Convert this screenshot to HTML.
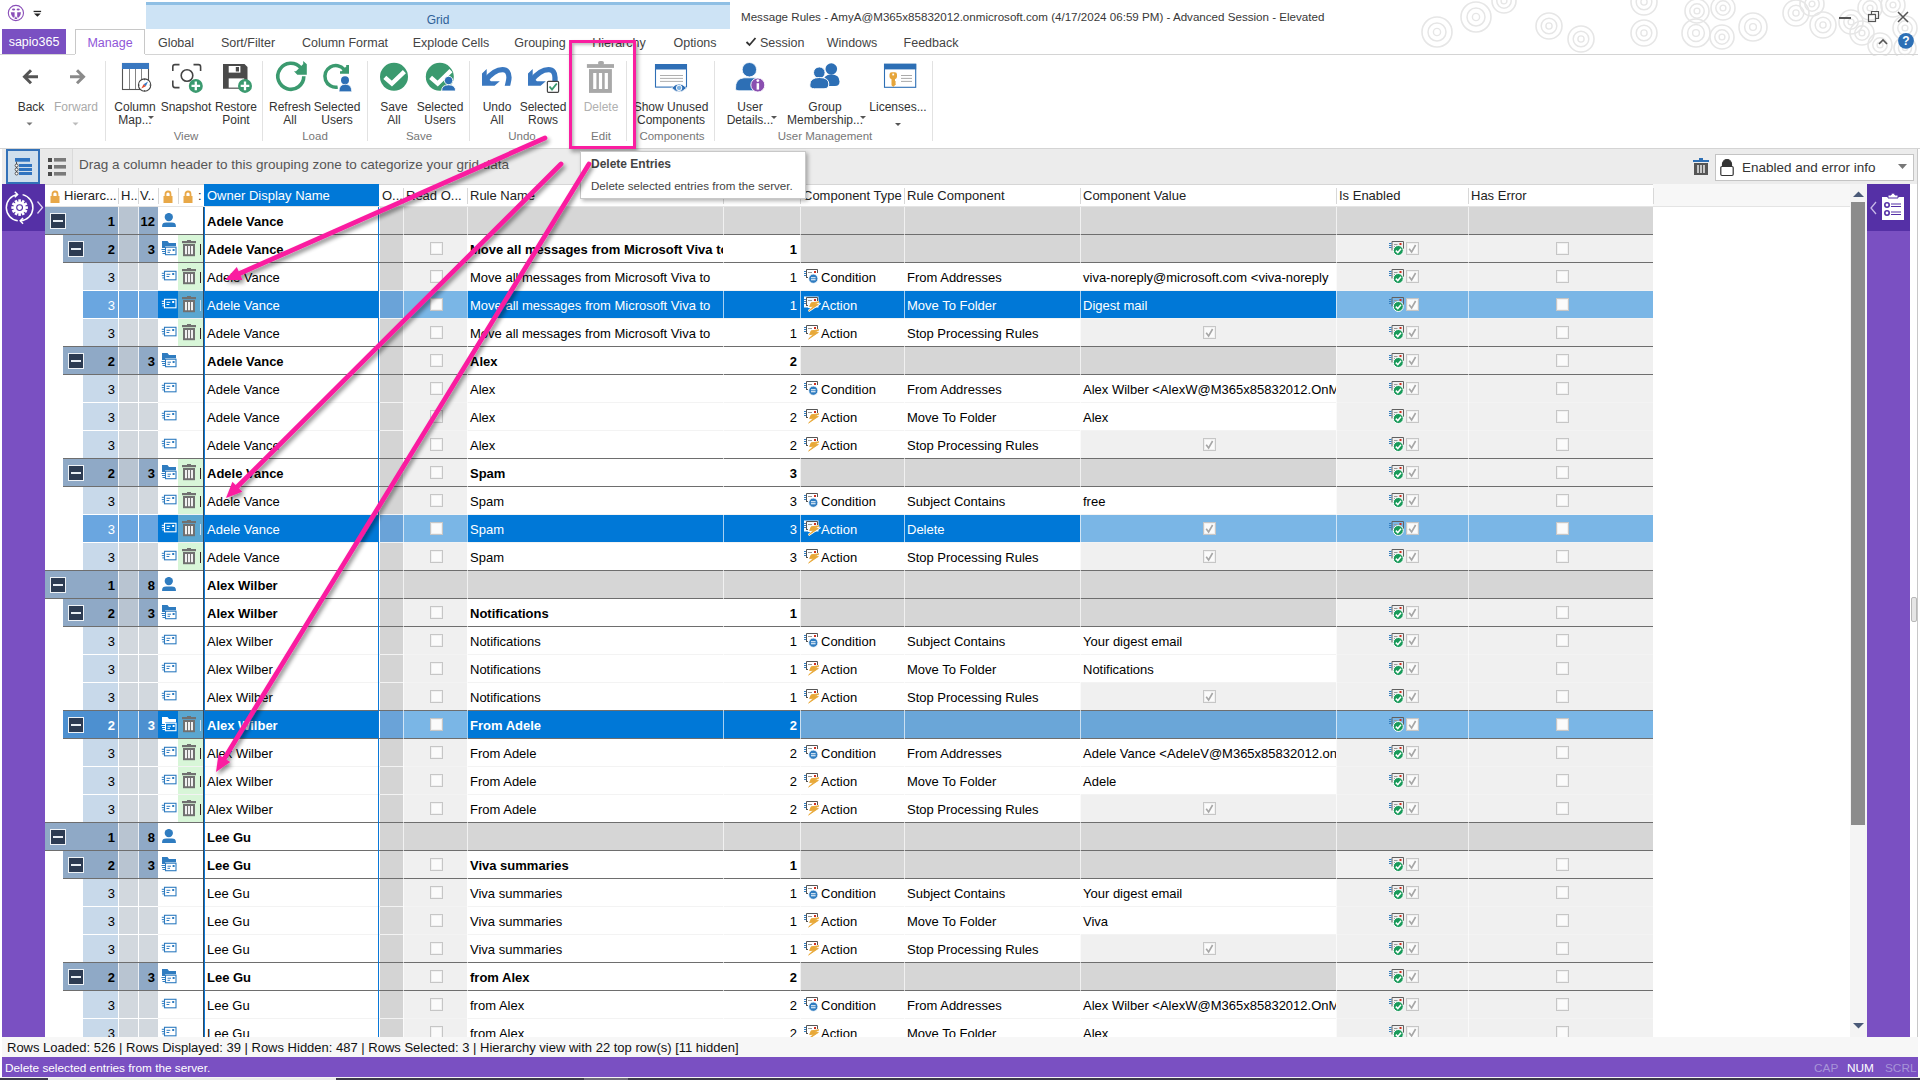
<!DOCTYPE html>
<html><head><meta charset="utf-8"><title>Message Rules</title>
<style>
html,body{margin:0;padding:0;width:1920px;height:1080px;overflow:hidden;background:#fff;font-family:"Liberation Sans",sans-serif;}
.a{position:absolute;}
.t{position:absolute;white-space:nowrap;}
</style></head><body>
<svg class="a" style="left:1400px;top:0px;" width="520" height="56" viewBox="0 0 520 56"><circle cx="37" cy="32" r="15" fill="none" stroke="#e6e6e6" stroke-width="1.6"/><circle cx="37" cy="32" r="9.0" fill="none" stroke="#e6e6e6" stroke-width="1.5"/><circle cx="37" cy="32" r="3.6" fill="none" stroke="#e6e6e6" stroke-width="1.4"/><circle cx="76" cy="17" r="15" fill="none" stroke="#e6e6e6" stroke-width="1.6"/><circle cx="76" cy="17" r="9.0" fill="none" stroke="#e6e6e6" stroke-width="1.5"/><circle cx="76" cy="17" r="3.6" fill="none" stroke="#e6e6e6" stroke-width="1.4"/><circle cx="104" cy="1" r="12" fill="none" stroke="#e6e6e6" stroke-width="1.6"/><circle cx="104" cy="1" r="7.2" fill="none" stroke="#e6e6e6" stroke-width="1.5"/><circle cx="104" cy="1" r="2.9" fill="none" stroke="#e6e6e6" stroke-width="1.4"/><circle cx="149" cy="26" r="13" fill="none" stroke="#e6e6e6" stroke-width="1.6"/><circle cx="149" cy="26" r="7.8" fill="none" stroke="#e6e6e6" stroke-width="1.5"/><circle cx="149" cy="26" r="3.1" fill="none" stroke="#e6e6e6" stroke-width="1.4"/><circle cx="181" cy="39" r="13" fill="none" stroke="#e6e6e6" stroke-width="1.6"/><circle cx="181" cy="39" r="7.8" fill="none" stroke="#e6e6e6" stroke-width="1.5"/><circle cx="181" cy="39" r="3.1" fill="none" stroke="#e6e6e6" stroke-width="1.4"/><circle cx="244" cy="2" r="13" fill="none" stroke="#e6e6e6" stroke-width="1.6"/><circle cx="244" cy="2" r="7.8" fill="none" stroke="#e6e6e6" stroke-width="1.5"/><circle cx="244" cy="2" r="3.1" fill="none" stroke="#e6e6e6" stroke-width="1.4"/><circle cx="244" cy="33" r="13" fill="none" stroke="#e6e6e6" stroke-width="1.6"/><circle cx="244" cy="33" r="7.8" fill="none" stroke="#e6e6e6" stroke-width="1.5"/><circle cx="244" cy="33" r="3.1" fill="none" stroke="#e6e6e6" stroke-width="1.4"/><circle cx="297" cy="11" r="12" fill="none" stroke="#e6e6e6" stroke-width="1.6"/><circle cx="297" cy="11" r="7.2" fill="none" stroke="#e6e6e6" stroke-width="1.5"/><circle cx="297" cy="11" r="2.9" fill="none" stroke="#e6e6e6" stroke-width="1.4"/><circle cx="296" cy="33" r="14" fill="none" stroke="#e6e6e6" stroke-width="1.6"/><circle cx="296" cy="33" r="8.4" fill="none" stroke="#e6e6e6" stroke-width="1.5"/><circle cx="296" cy="33" r="3.4" fill="none" stroke="#e6e6e6" stroke-width="1.4"/><circle cx="322" cy="37" r="12" fill="none" stroke="#e6e6e6" stroke-width="1.6"/><circle cx="322" cy="37" r="7.2" fill="none" stroke="#e6e6e6" stroke-width="1.5"/><circle cx="322" cy="37" r="2.9" fill="none" stroke="#e6e6e6" stroke-width="1.4"/><circle cx="323" cy="8" r="12" fill="none" stroke="#e6e6e6" stroke-width="1.6"/><circle cx="323" cy="8" r="7.2" fill="none" stroke="#e6e6e6" stroke-width="1.5"/><circle cx="323" cy="8" r="2.9" fill="none" stroke="#e6e6e6" stroke-width="1.4"/><circle cx="353" cy="27" r="14" fill="none" stroke="#e6e6e6" stroke-width="1.6"/><circle cx="353" cy="27" r="8.4" fill="none" stroke="#e6e6e6" stroke-width="1.5"/><circle cx="353" cy="27" r="3.4" fill="none" stroke="#e6e6e6" stroke-width="1.4"/><circle cx="396" cy="13" r="13" fill="none" stroke="#e6e6e6" stroke-width="1.6"/><circle cx="396" cy="13" r="7.8" fill="none" stroke="#e6e6e6" stroke-width="1.5"/><circle cx="396" cy="13" r="3.1" fill="none" stroke="#e6e6e6" stroke-width="1.4"/><circle cx="412" cy="4" r="12" fill="none" stroke="#e6e6e6" stroke-width="1.6"/><circle cx="412" cy="4" r="7.2" fill="none" stroke="#e6e6e6" stroke-width="1.5"/><circle cx="412" cy="4" r="2.9" fill="none" stroke="#e6e6e6" stroke-width="1.4"/><circle cx="423" cy="25" r="13" fill="none" stroke="#e6e6e6" stroke-width="1.6"/><circle cx="423" cy="25" r="7.8" fill="none" stroke="#e6e6e6" stroke-width="1.5"/><circle cx="423" cy="25" r="3.1" fill="none" stroke="#e6e6e6" stroke-width="1.4"/><circle cx="451" cy="22" r="12" fill="none" stroke="#e6e6e6" stroke-width="1.6"/><circle cx="451" cy="22" r="7.2" fill="none" stroke="#e6e6e6" stroke-width="1.5"/><circle cx="451" cy="22" r="2.9" fill="none" stroke="#e6e6e6" stroke-width="1.4"/><circle cx="470" cy="8" r="12" fill="none" stroke="#e6e6e6" stroke-width="1.6"/><circle cx="470" cy="8" r="7.2" fill="none" stroke="#e6e6e6" stroke-width="1.5"/><circle cx="470" cy="8" r="2.9" fill="none" stroke="#e6e6e6" stroke-width="1.4"/><circle cx="462" cy="33" r="12" fill="none" stroke="#e6e6e6" stroke-width="1.6"/><circle cx="462" cy="33" r="7.2" fill="none" stroke="#e6e6e6" stroke-width="1.5"/><circle cx="462" cy="33" r="2.9" fill="none" stroke="#e6e6e6" stroke-width="1.4"/><circle cx="493" cy="5" r="12" fill="none" stroke="#e6e6e6" stroke-width="1.6"/><circle cx="493" cy="5" r="7.2" fill="none" stroke="#e6e6e6" stroke-width="1.5"/><circle cx="493" cy="5" r="2.9" fill="none" stroke="#e6e6e6" stroke-width="1.4"/><circle cx="505" cy="28" r="12" fill="none" stroke="#e6e6e6" stroke-width="1.6"/><circle cx="505" cy="28" r="7.2" fill="none" stroke="#e6e6e6" stroke-width="1.5"/><circle cx="505" cy="28" r="2.9" fill="none" stroke="#e6e6e6" stroke-width="1.4"/><circle cx="480" cy="45" r="12" fill="none" stroke="#e6e6e6" stroke-width="1.6"/><circle cx="480" cy="45" r="7.2" fill="none" stroke="#e6e6e6" stroke-width="1.5"/><circle cx="480" cy="45" r="2.9" fill="none" stroke="#e6e6e6" stroke-width="1.4"/><circle cx="505" cy="48" r="11" fill="none" stroke="#e6e6e6" stroke-width="1.6"/><circle cx="505" cy="48" r="6.6" fill="none" stroke="#e6e6e6" stroke-width="1.5"/><circle cx="505" cy="48" r="2.6" fill="none" stroke="#e6e6e6" stroke-width="1.4"/></svg>
<svg class="a" style="left:0px;top:0px;" width="32" height="28" viewBox="0 0 32 28"><circle cx="15.9" cy="13" r="7.6" fill="none" stroke="#8a4fb8" stroke-width="1.1"/><path d="M10.8 12.2 H14.6 V17.5 H13 Q10.8 15 10.8 12.2Z M21 12.2 H17.2 V17.5 H18.8 Q21 15 21 12.2Z M14.4 19 L15.9 16.2 L17.4 19Z" fill="#8a4fb8"/><ellipse cx="13.6" cy="9.6" rx="1.6" ry="1" fill="#8a4fb8"/><ellipse cx="18.2" cy="9.6" rx="1.6" ry="1" fill="#8a4fb8"/></svg>
<svg class="a" style="left:32px;top:9px;" width="12" height="10" viewBox="0 0 12 10"><rect x="1.6" y="1.8" width="7.5" height="1.3" fill="#222"/><path d="M2 4.5 H8.8 L5.4 7.8 Z" fill="#222"/></svg>
<div class="a" style="left:146px;top:2px;width:584px;height:27px;background:#cde3f5;border-top:3px solid #8fbfe4;box-sizing:border-box"></div>
<div class="t" style="left:146px;top:12px;width:584px;height:16px;line-height:16px;color:#2f6198;font-size:12px;text-align:center;">Grid</div>
<div class="t" style="left:741px;top:8px;height:17px;line-height:17px;color:#383838;font-size:11.6px;">Message Rules - AmyA@M365x85832012.onmicrosoft.com (4/17/2024 06:59 PM) - Advanced Session - Elevated</div>
<div class="a" style="left:1839px;top:17px;width:12px;height:2px;background:#555"></div>
<svg class="a" style="left:1867px;top:10px;" width="14" height="14" viewBox="0 0 14 14"><rect x="1.5" y="4.5" width="7" height="7" fill="none" stroke="#555" stroke-width="1.2"/><path d="M4.5 4.5 V1.5 H11.5 V8.5 H8.5" fill="none" stroke="#555" stroke-width="1.2"/></svg>
<svg class="a" style="left:1896px;top:10px;" width="14" height="14" viewBox="0 0 14 14"><path d="M2 2 L12 12 M12 2 L2 12" stroke="#555" stroke-width="1.5"/></svg>
<div class="a" style="left:2px;top:29px;width:64px;height:26px;background:#7a50c2"></div>
<div class="t" style="left:2px;top:29px;width:64px;height:26px;line-height:26px;color:#fff;font-size:12.5px;text-align:center;">sapio365</div>
<div class="a" style="left:75px;top:29px;width:70px;height:26px;background:#fff;border:1px solid #c8c8c8;border-bottom:none;box-sizing:border-box"></div>
<div class="a" style="left:0px;top:54px;width:1918px;height:1px;background:#d4d4d4"></div>
<div class="a" style="left:75px;top:54px;width:70px;height:1px;background:#fff"></div>
<div class="t" style="left:75px;top:30px;width:70px;height:26px;line-height:26px;color:#8f55d8;font-size:12.5px;text-align:center;">Manage</div>
<div class="t" style="left:116px;top:30px;width:120px;height:26px;line-height:26px;color:#444;font-size:12.5px;text-align:center;">Global</div>
<div class="t" style="left:188px;top:30px;width:120px;height:26px;line-height:26px;color:#444;font-size:12.5px;text-align:center;">Sort/Filter</div>
<div class="t" style="left:285px;top:30px;width:120px;height:26px;line-height:26px;color:#444;font-size:12.5px;text-align:center;">Column Format</div>
<div class="t" style="left:391px;top:30px;width:120px;height:26px;line-height:26px;color:#444;font-size:12.5px;text-align:center;">Explode Cells</div>
<div class="t" style="left:480px;top:30px;width:120px;height:26px;line-height:26px;color:#444;font-size:12.5px;text-align:center;">Grouping</div>
<div class="t" style="left:559px;top:30px;width:120px;height:26px;line-height:26px;color:#444;font-size:12.5px;text-align:center;">Hierarchy</div>
<div class="t" style="left:635px;top:30px;width:120px;height:26px;line-height:26px;color:#444;font-size:12.5px;text-align:center;">Options</div>
<div class="t" style="left:792px;top:30px;width:120px;height:26px;line-height:26px;color:#444;font-size:12.5px;text-align:center;">Windows</div>
<div class="t" style="left:871px;top:30px;width:120px;height:26px;line-height:26px;color:#444;font-size:12.5px;text-align:center;">Feedback</div>
<svg class="a" style="left:745px;top:36px;" width="12" height="11" viewBox="0 0 12 11"><path d="M1.5 6 L4.5 9 L10.5 2" stroke="#333" stroke-width="1.8" fill="none"/></svg>
<div class="t" style="left:760px;top:30px;height:26px;line-height:26px;color:#444;font-size:12.5px;">Session</div>
<svg class="a" style="left:1877px;top:37px;" width="12" height="9" viewBox="0 0 12 9"><path d="M2 7 L6 3 L10 7" stroke="#555" stroke-width="1.6" fill="none"/></svg>
<svg class="a" style="left:1897px;top:32px;" width="18" height="18" viewBox="0 0 18 18"><circle cx="9" cy="8.8" r="7.9" fill="#2d6fb5"/><text x="9" y="13.3" font-family="Liberation Sans" font-weight="bold" font-size="12" fill="#fff" text-anchor="middle">?</text></svg>
<div class="a" style="left:0px;top:56px;width:1920px;height:92px;background:#fff"></div>
<div class="a" style="left:105px;top:61px;width:1px;height:80px;background:#e2e2e2"></div>
<div class="a" style="left:262px;top:61px;width:1px;height:80px;background:#e2e2e2"></div>
<div class="a" style="left:367px;top:61px;width:1px;height:80px;background:#e2e2e2"></div>
<div class="a" style="left:469px;top:61px;width:1px;height:80px;background:#e2e2e2"></div>
<div class="a" style="left:626px;top:61px;width:1px;height:80px;background:#e2e2e2"></div>
<div class="a" style="left:714px;top:61px;width:1px;height:80px;background:#e2e2e2"></div>
<div class="a" style="left:932px;top:61px;width:1px;height:80px;background:#e2e2e2"></div>
<div class="a" style="left:0px;top:148px;width:1920px;height:1px;background:#d4d4d4"></div>
<div class="t" style="left:-29px;top:100px;width:120px;height:14px;line-height:14px;color:#333;font-size:12px;text-align:center;">Back</div>
<div class="t" style="left:16px;top:100px;width:120px;height:14px;line-height:14px;color:#aaa;font-size:12px;text-align:center;">Forward</div>
<svg class="a" style="left:26px;top:122px;" width="7" height="5" viewBox="0 0 7 5"><path d="M0.5 0.5 H6.5 L3.5 3.5Z" fill="#777"/></svg>
<svg class="a" style="left:72px;top:122px;" width="7" height="5" viewBox="0 0 7 5"><path d="M0.5 0.5 H6.5 L3.5 3.5Z" fill="#bbb"/></svg>
<svg class="a" style="left:21px;top:68px;" width="18" height="18" viewBox="0 0 18 18"><path d="M17 8.7 H4 M10 2.2 L3.5 8.7 L10 15.2" stroke="#555" stroke-width="3" fill="none"/></svg>
<svg class="a" style="left:69px;top:68px;" width="18" height="18" viewBox="0 0 18 18"><path d="M1 8.7 H14 M8 2.2 L14.5 8.7 L8 15.2" stroke="#8a8a8a" stroke-width="3" fill="none"/></svg>
<div class="t" style="left:75px;top:100px;width:120px;height:14px;line-height:14px;color:#333;font-size:12px;text-align:center;">Column</div>
<div class="t" style="left:75px;top:113px;width:120px;height:14px;line-height:14px;color:#333;font-size:12px;text-align:center;">Map...  </div>
<div class="t" style="left:126px;top:100px;width:120px;height:14px;line-height:14px;color:#333;font-size:12px;text-align:center;">Snapshot</div>
<div class="t" style="left:176px;top:100px;width:120px;height:14px;line-height:14px;color:#333;font-size:12px;text-align:center;">Restore</div>
<div class="t" style="left:176px;top:113px;width:120px;height:14px;line-height:14px;color:#333;font-size:12px;text-align:center;">Point</div>
<svg class="a" style="left:148px;top:116px;" width="6" height="4" viewBox="0 0 6 4"><path d="M0 0 H6 L3 3Z" fill="#555"/></svg>
<div class="t" style="left:106px;top:129px;width:160px;height:14px;line-height:14px;color:#777;font-size:11.5px;text-align:center;">View</div>
<svg class="a" style="left:120px;top:61px;" width="32" height="32" viewBox="0 0 32 32"><rect x="2.5" y="2.5" width="26" height="26" fill="#fff" stroke="#555" stroke-width="1.1"/><rect x="2" y="2" width="27" height="6" fill="#3a78c0"/><path d="M9.5 8 V28 M15.5 8 V28 M21.5 8 V22" stroke="#777" stroke-width="0.9"/><circle cx="24.6" cy="24.1" r="6.2" fill="#fff" stroke="#444" stroke-width="1.1"/><path d="M24.6 17.9 V19.2 M24.6 29 V30.3 M18.4 24.1 H19.7 M29.5 24.1 H30.8" stroke="#444" stroke-width="0.9"/><path d="M21.3 27.6 L23.6 23.2 L25.8 25.2Z" fill="#e04a2a"/><path d="M28 20.6 L23.6 23.2 L25.8 25.2Z" fill="#3a78c0"/></svg>
<svg class="a" style="left:170px;top:61px;" width="34" height="34" viewBox="0 0 34 34"><path d="M2.8 10 V5.8 Q2.8 3.6 5 3.6 H9.5 M23.5 3.6 H28.5 Q30.6 3.6 30.6 5.8 V10 M2.8 19.5 V24 Q2.8 26.6 5 26.6 H9.5" stroke="#444" stroke-width="1.6" fill="none"/><circle cx="17" cy="14.5" r="5.8" fill="none" stroke="#444" stroke-width="1.6"/><circle cx="25.8" cy="24.9" r="7" fill="#3b9a6f"/><path d="M25.8 20.6 V29.2 M21.5 24.9 H30.1" stroke="#fff" stroke-width="2.3"/></svg>
<svg class="a" style="left:220px;top:61px;" width="34" height="34" viewBox="0 0 34 34"><path d="M3 3 H24.5 L27.5 6 V27.8 H3Z" fill="#4a4a4a"/><rect x="8.7" y="5" width="11.7" height="6.6" fill="#fff"/><rect x="15.8" y="6" width="3.2" height="4.5" fill="#4a4a4a"/><rect x="8.7" y="17.4" width="15.5" height="9.2" fill="#fff"/><circle cx="25" cy="24.9" r="7" fill="#3b9a6f"/><path d="M25 20.6 V29.2 M20.7 24.9 H29.3" stroke="#fff" stroke-width="2.3"/></svg>
<div class="t" style="left:230px;top:100px;width:120px;height:14px;line-height:14px;color:#333;font-size:12px;text-align:center;">Refresh</div>
<div class="t" style="left:230px;top:113px;width:120px;height:14px;line-height:14px;color:#333;font-size:12px;text-align:center;">All</div>
<div class="t" style="left:277px;top:100px;width:120px;height:14px;line-height:14px;color:#333;font-size:12px;text-align:center;">Selected</div>
<div class="t" style="left:277px;top:113px;width:120px;height:14px;line-height:14px;color:#333;font-size:12px;text-align:center;">Users</div>
<div class="t" style="left:235px;top:129px;width:160px;height:14px;line-height:14px;color:#777;font-size:11.5px;text-align:center;">Load</div>
<svg class="a" style="left:273px;top:59px;" width="36" height="34" viewBox="0 0 36 34"><path d="M30.8 17.3 A13 13 0 1 1 27.76 8.94" stroke="#3b9a6f" stroke-width="3.6" fill="none"/><path d="M21 12.2 L30.2 12.2 L30.2 2 L33.8 5.2 L33.8 15.8 L24.3 15.8 Z M23 12.2 L30.2 5 V12.2Z" fill="#3b9a6f"/></svg>
<svg class="a" style="left:320px;top:59px;" width="36" height="36" viewBox="0 0 36 36"><path d="M17.69 28.13 A10.9 10.9 0 1 1 24.15 10.4" stroke="#3b9a6f" stroke-width="3.5" fill="none"/><path d="M20 12.3 L26.2 12.3 L26.2 6 L29 6 L29 14.8 L20 14.8 Z M21.5 12.3 L26.2 7.5 V12.3Z" fill="#3b9a6f"/><circle cx="25" cy="21.3" r="4" fill="#2d6fb5"/><path d="M19 32.7 Q19 25.3 25.35 25.3 Q31.7 25.3 31.7 32.7 Z" fill="#2d6fb5" stroke="#fff" stroke-width="0.6"/></svg>
<div class="t" style="left:334px;top:100px;width:120px;height:14px;line-height:14px;color:#333;font-size:12px;text-align:center;">Save</div>
<div class="t" style="left:334px;top:113px;width:120px;height:14px;line-height:14px;color:#333;font-size:12px;text-align:center;">All</div>
<div class="t" style="left:380px;top:100px;width:120px;height:14px;line-height:14px;color:#333;font-size:12px;text-align:center;">Selected</div>
<div class="t" style="left:380px;top:113px;width:120px;height:14px;line-height:14px;color:#333;font-size:12px;text-align:center;">Users</div>
<div class="t" style="left:339px;top:129px;width:160px;height:14px;line-height:14px;color:#777;font-size:11.5px;text-align:center;">Save</div>
<svg class="a" style="left:378px;top:61px;" width="32" height="32" viewBox="0 0 32 32"><circle cx="16" cy="15.8" r="14" fill="#3b9a6f"/><path d="M6.8 16.4 L13.9 22.6 L26.4 10.6" stroke="#fff" stroke-width="4.4" fill="none"/></svg>
<svg class="a" style="left:424px;top:61px;" width="34" height="34" viewBox="0 0 34 34"><circle cx="15.8" cy="15.8" r="14" fill="#3b9a6f"/><path d="M6.6 16.4 L13.7 22.6 L27 9.6" stroke="#fff" stroke-width="4.4" fill="none"/><circle cx="24.6" cy="19.5" r="4.2" fill="#2d6fb5" stroke="#fff" stroke-width="0.9"/><path d="M17.6 30 Q17.6 23.8 24.6 23.8 Q31.6 23.8 31.6 30Z" fill="#2d6fb5" stroke="#fff" stroke-width="0.9"/></svg>
<div class="t" style="left:437px;top:100px;width:120px;height:14px;line-height:14px;color:#333;font-size:12px;text-align:center;">Undo</div>
<div class="t" style="left:437px;top:113px;width:120px;height:14px;line-height:14px;color:#333;font-size:12px;text-align:center;">All</div>
<div class="t" style="left:483px;top:100px;width:120px;height:14px;line-height:14px;color:#333;font-size:12px;text-align:center;">Selected</div>
<div class="t" style="left:483px;top:113px;width:120px;height:14px;line-height:14px;color:#333;font-size:12px;text-align:center;">Rows</div>
<div class="t" style="left:442px;top:129px;width:160px;height:14px;line-height:14px;color:#777;font-size:11.5px;text-align:center;">Undo</div>
<svg class="a" style="left:474px;top:56px;" width="44" height="36" viewBox="0 0 44 36"><path d="M8 29.8 L8 17.5 L12.7 13 L12.7 21.5 L17 25.3 L25.8 25.3 L20.6 29.8 Z" fill="#3a78c0"/><path d="M11.5 24.5 C 17 17.5, 23 13.6, 28.5 13.6 C 33 13.6, 35 17, 35 21.5 C 35 24, 34 27, 33.2 31" stroke="#3a78c0" stroke-width="5.3" fill="none"/><rect x="26" y="29.8" width="14" height="6" fill="#fff"/></svg>
<svg class="a" style="left:520px;top:56px;" width="44" height="40" viewBox="0 0 44 40"><path d="M8 29.8 L8 17.5 L12.7 13 L12.7 21.5 L17 25.3 L25.8 25.3 L20.6 29.8 Z" fill="#3a78c0"/><path d="M11.5 24.5 C 17 17.5, 23 13.6, 28.5 13.6 C 33 13.6, 35 17, 35 21.5 L 35 25" stroke="#3a78c0" stroke-width="5.3" fill="none"/><rect x="27.4" y="25.3" width="11.2" height="11" rx="1" fill="#fff" stroke="#444" stroke-width="1.2"/><path d="M29.5 30.5 L32 33.5 L36.8 27.5" stroke="#3b9a6f" stroke-width="1.9" fill="none"/></svg>
<div class="t" style="left:541px;top:100px;width:120px;height:14px;line-height:14px;color:#b0b0b0;font-size:12px;text-align:center;">Delete</div>
<div class="t" style="left:521px;top:129px;width:160px;height:14px;line-height:14px;color:#777;font-size:11.5px;text-align:center;">Edit</div>
<svg class="a" style="left:586px;top:60px;" width="30" height="34" viewBox="0 0 30 34"><rect x="0.9" y="4.1" width="27.1" height="3.8" fill="#a8a8a8"/><rect x="12" y="1" width="6" height="4" rx="2" fill="#a8a8a8"/><path d="M3 9.1 H25.9 V32.9 H3Z" fill="#a8a8a8"/><path d="M8.8 12.9 V29.1 M14.5 12.9 V29.1 M20.3 12.9 V29.1" stroke="#fff" stroke-width="3.2"/></svg>
<div class="t" style="left:611px;top:100px;width:120px;height:14px;line-height:14px;color:#333;font-size:12px;text-align:center;">Show Unused</div>
<div class="t" style="left:611px;top:113px;width:120px;height:14px;line-height:14px;color:#333;font-size:12px;text-align:center;">Components</div>
<div class="t" style="left:592px;top:129px;width:160px;height:14px;line-height:14px;color:#777;font-size:11.5px;text-align:center;">Components</div>
<svg class="a" style="left:654px;top:63px;" width="36" height="32" viewBox="0 0 36 32"><rect x="1.5" y="1.6" width="31" height="22.5" fill="#fff" stroke="#2f6fb6" stroke-width="1.1"/><rect x="1" y="1.1" width="32" height="5.4" fill="#2f6fb6"/><path d="M6 12.5 H29 M6 15.4 H29 M6 18.4 H29" stroke="#9a9a9a" stroke-width="0.8"/><path d="M17.6 24.9 Q25 17 32.6 24.9 Q25 32.8 17.6 24.9Z" fill="#2f6fb6" stroke="#fff" stroke-width="0.8"/><circle cx="25.1" cy="24.9" r="2.7" fill="#7fb2e0" stroke="#fff" stroke-width="1"/></svg>
<div class="t" style="left:690px;top:100px;width:120px;height:14px;line-height:14px;color:#333;font-size:12px;text-align:center;">User</div>
<div class="t" style="left:690px;top:113px;width:120px;height:14px;line-height:14px;color:#333;font-size:12px;text-align:center;">Details...  </div>
<div class="t" style="left:765px;top:100px;width:120px;height:14px;line-height:14px;color:#333;font-size:12px;text-align:center;">Group</div>
<div class="t" style="left:765px;top:113px;width:120px;height:14px;line-height:14px;color:#333;font-size:12px;text-align:center;">Membership...  </div>
<div class="t" style="left:838px;top:100px;width:120px;height:14px;line-height:14px;color:#333;font-size:12px;text-align:center;">Licenses...</div>
<div class="t" style="left:745px;top:129px;width:160px;height:14px;line-height:14px;color:#777;font-size:11.5px;text-align:center;">User Management</div>
<svg class="a" style="left:771px;top:116px;" width="6" height="4" viewBox="0 0 6 4"><path d="M0 0 H6 L3 3Z" fill="#555"/></svg>
<svg class="a" style="left:860px;top:116px;" width="6" height="4" viewBox="0 0 6 4"><path d="M0 0 H6 L3 3Z" fill="#555"/></svg>
<svg class="a" style="left:895px;top:123px;" width="6" height="4" viewBox="0 0 6 4"><path d="M0 0 H6 L3 3Z" fill="#555"/></svg>
<svg class="a" style="left:734px;top:60px;" width="34" height="36" viewBox="0 0 34 36"><circle cx="15.4" cy="9.7" r="7.2" fill="#2d6fb5" stroke="#fff" stroke-width="0.8"/><path d="M1.5 29 Q1 18.5 10 17.8 H21 Q28 18.5 28 26 V30.8 H5 Q1.5 30.8 1.5 29Z" fill="#2d6fb5" stroke="#fff" stroke-width="0.8"/><circle cx="23.8" cy="25" r="7" fill="#8a4fb0" stroke="#fff" stroke-width="0.9"/><rect x="22.6" y="23.2" width="2.5" height="6.4" fill="#fff"/><circle cx="23.85" cy="20.6" r="1.4" fill="#fff"/></svg>
<svg class="a" style="left:808px;top:61px;" width="36" height="30" viewBox="0 0 36 30"><circle cx="23.3" cy="8" r="5.8" fill="#2d6fb5"/><path d="M15 22 Q15 13.5 23.3 13.5 Q31.5 13.5 31.5 20.5 Q31.5 25 27 25 H18Z" fill="#2d6fb5"/><circle cx="11.3" cy="11.7" r="5.8" fill="#2d6fb5" stroke="#fff" stroke-width="1"/><path d="M1.8 24 Q1.8 16.5 11.3 16.5 Q20.8 16.5 20.8 23 Q20.8 27.8 16 27.8 H6.5 Q1.8 27.8 1.8 24Z" fill="#2d6fb5" stroke="#fff" stroke-width="1"/></svg>
<svg class="a" style="left:882px;top:62px;" width="36" height="28" viewBox="0 0 36 28"><rect x="2.5" y="2.3" width="31.2" height="23" fill="#fff" stroke="#2d6fb5" stroke-width="1.1"/><rect x="2" y="1.8" width="32.2" height="5.6" fill="#2d6fb5"/><path d="M7.5 12.5 Q7.5 10.2 9.8 10.2 H12.8 Q15 10.2 15 12.5 V14.8 Q15 16.8 13 17.2 V19 L14.2 20 L13 21 L14.2 22 L11.3 25 L9.5 23.3 V17.2 Q7.5 16.8 7.5 14.8Z" fill="#e6a53a"/><rect x="10.3" y="11.6" width="1.8" height="1.8" fill="#fff"/><path d="M19 13.5 H30 M19 16.4 H30 M19 19.4 H30" stroke="#a0a0a0" stroke-width="0.9"/></svg>
<div class="a" style="left:2px;top:149px;width:1916px;height:35px;background:#ececec"></div>
<div class="a" style="left:6px;top:149px;width:34px;height:35px;background:#cfdfec;border:2px solid #3271b8;box-sizing:border-box"></div>
<svg class="a" style="left:13px;top:156px;" width="20" height="20" viewBox="0 0 20 20"><rect x="2" y="2" width="15" height="3.7" fill="#2f74c0"/><rect x="6" y="8" width="13" height="3" fill="#2f74c0"/><rect x="6" y="12" width="13" height="3" fill="#2f74c0"/><rect x="6" y="16" width="13" height="3" fill="#2f74c0"/><path d="M3.5 5.7 V18" stroke="#444" stroke-width="0.9"/><circle cx="3.6" cy="9.5" r="1.5" fill="#fff" stroke="#444" stroke-width="0.9"/><circle cx="3.6" cy="13.5" r="1.5" fill="#fff" stroke="#444" stroke-width="0.9"/><circle cx="3.6" cy="17.5" r="1.5" fill="#fff" stroke="#444" stroke-width="0.9"/></svg>
<div class="a" style="left:40px;top:149px;width:33px;height:35px;background:#e9e9e9;border-right:1px solid #dadada;box-sizing:border-box"></div>
<svg class="a" style="left:48px;top:157px;" width="20" height="20" viewBox="0 0 20 20"><rect x="0" y="1" width="4" height="4" fill="#4a4a4a"/><rect x="0" y="8" width="4" height="4" fill="#4a4a4a"/><rect x="0" y="15" width="4" height="4" fill="#4a4a4a"/><rect x="6" y="1" width="12" height="3.6" fill="#7a7a7a"/><rect x="6" y="8" width="12" height="3.6" fill="#7a7a7a"/><rect x="6" y="15" width="12" height="3.6" fill="#7a7a7a"/></svg>
<div class="t" style="left:79px;top:156px;height:18px;line-height:18px;color:#555;font-size:13.5px;">Drag a column header to this grouping zone to categorize your grid data</div>
<svg class="a" style="left:1692px;top:158px;" width="18" height="18" viewBox="0 0 18 18"><rect x="1" y="2" width="16" height="2" fill="#2d6fb5"/><rect x="7" y="0" width="4" height="2.5" fill="#2d6fb5"/><path d="M2 5 H16 V17 H2Z" fill="#555"/><path d="M6 7 V15 M9 7 V15 M12 7 V15" stroke="#ececec" stroke-width="1.5"/></svg>
<div class="a" style="left:1715px;top:154px;width:199px;height:27px;background:#fff;border:1px solid #c4c4c4;box-sizing:border-box"></div>
<svg class="a" style="left:1718px;top:158px;" width="18" height="20" viewBox="0 0 18 20"><path d="M4.5 8.5 V6 A4.5 4.5 0 0 1 13.5 6 V8.5Z" fill="#333" stroke="#333" stroke-width="1.2"/><rect x="2.8" y="8.5" width="12.4" height="9" rx="1.2" fill="#fff" stroke="#333" stroke-width="1.2"/></svg>
<div class="t" style="left:1742px;top:158px;height:19px;line-height:19px;color:#333;font-size:13.5px;">Enabled and error info</div>
<svg class="a" style="left:1898px;top:164px;" width="10" height="6" viewBox="0 0 10 6"><path d="M0 0 H9 L4.5 5Z" fill="#777"/></svg>
<div class="a" style="left:2px;top:184px;width:43px;height:853px;background:#7a50c2"></div>
<div class="a" style="left:2px;top:184px;width:43px;height:47px;background:#5530a6"></div>
<svg class="a" style="left:0px;top:184px;" width="48" height="48" viewBox="0 0 48 48"><path d="M22.59 10.64 A13.3 13.3 0 0 1 20.53 36.87" stroke="#fff" stroke-width="1.5" fill="none"/><path d="M17.75 36.77 A13.3 13.3 0 0 1 17.29 10.50" stroke="#fff" stroke-width="1.5" fill="none"/><path d="M23.03 34.07 L20.23 36.87 L23.03 39.67" stroke="#fff" stroke-width="1.5" fill="none"/><path d="M14.79 7.70 L17.59 10.50 L14.79 13.30" stroke="#fff" stroke-width="1.5" fill="none"/><circle cx="19.6" cy="23.6" r="6" fill="#fff"/><rect x="18.30" y="15.30" width="2.6" height="4" fill="#fff" transform="rotate(0 19.6 23.6)"/><rect x="18.30" y="15.30" width="2.6" height="4" fill="#fff" transform="rotate(30 19.6 23.6)"/><rect x="18.30" y="15.30" width="2.6" height="4" fill="#fff" transform="rotate(60 19.6 23.6)"/><rect x="18.30" y="15.30" width="2.6" height="4" fill="#fff" transform="rotate(90 19.6 23.6)"/><rect x="18.30" y="15.30" width="2.6" height="4" fill="#fff" transform="rotate(120 19.6 23.6)"/><rect x="18.30" y="15.30" width="2.6" height="4" fill="#fff" transform="rotate(150 19.6 23.6)"/><rect x="18.30" y="15.30" width="2.6" height="4" fill="#fff" transform="rotate(180 19.6 23.6)"/><rect x="18.30" y="15.30" width="2.6" height="4" fill="#fff" transform="rotate(210 19.6 23.6)"/><rect x="18.30" y="15.30" width="2.6" height="4" fill="#fff" transform="rotate(240 19.6 23.6)"/><rect x="18.30" y="15.30" width="2.6" height="4" fill="#fff" transform="rotate(270 19.6 23.6)"/><rect x="18.30" y="15.30" width="2.6" height="4" fill="#fff" transform="rotate(300 19.6 23.6)"/><rect x="18.30" y="15.30" width="2.6" height="4" fill="#fff" transform="rotate(330 19.6 23.6)"/><circle cx="19.6" cy="23.6" r="2.9" fill="none" stroke="#5530a6" stroke-width="1.1"/><path d="M37.5 17.5 L42.5 23.5 L37.5 29.5" stroke="#e0d4f4" stroke-width="1.3" fill="none"/></svg>
<div class="a" style="left:1850px;top:184px;width:17px;height:853px;background:#f4f4f4"></div>
<svg class="a" style="left:1852px;top:190px;" width="13" height="8" viewBox="0 0 13 8"><path d="M1 7 L6.5 1.5 L12 7Z" fill="#4a5a78"/></svg>
<div class="a" style="left:1851px;top:202px;width:14px;height:623px;background:#8c8c8c"></div>
<svg class="a" style="left:1852px;top:1022px;" width="13" height="8" viewBox="0 0 13 8"><path d="M1 1 L6.5 6.5 L12 1Z" fill="#4a5a78"/></svg>
<div class="a" style="left:1867px;top:184px;width:43px;height:853px;background:#7a50c2"></div>
<div class="a" style="left:1867px;top:184px;width:43px;height:47px;background:#5530a6"></div>
<svg class="a" style="left:1870px;top:201px;" width="8" height="14" viewBox="0 0 8 14"><path d="M6 1 L1 7 L6 13" stroke="#c8b8e8" stroke-width="1.3" fill="none"/></svg>
<svg class="a" style="left:1881px;top:192px;" width="24" height="29" viewBox="0 0 24 29"><rect x="1" y="5" width="22" height="23" fill="#fff"/><path d="M7 6 V3 H10 A2 2 0 0 1 14 3 H17 V6Z" fill="#fff" stroke="#5530a6" stroke-width="1"/><circle cx="6" cy="13" r="2.2" fill="none" stroke="#5530a6" stroke-width="1.6"/><circle cx="6" cy="21" r="2.2" fill="none" stroke="#5530a6" stroke-width="1.6"/><path d="M10 12 H20 M10 14.5 H20 M10 20 H20 M10 22.5 H20" stroke="#5530a6" stroke-width="1.2"/></svg>
<div class="a" style="left:1917px;top:149px;width:1px;height:888px;background:#c8c8c8"></div>
<div class="a" style="left:1911px;top:597px;width:6px;height:25px;background:#e6e6e6;border:1px solid #b8b8b8;border-radius:2px;box-sizing:border-box"></div>
<div class="a" style="left:45px;top:184px;width:1805px;height:23px;background:#fff"></div>
<div class="a" style="left:45px;top:184px;width:1805px;height:1px;background:#d6d6d6"></div>
<div class="a" style="left:1653px;top:184px;width:197px;height:23px;background:#f7f7f7"></div>
<div class="a" style="left:45px;top:206px;width:1805px;height:1px;background:#e4e4e4"></div>
<div class="a" style="left:204px;top:184px;width:175px;height:22px;background:#0078d7"></div>
<svg class="a" style="left:50px;top:190px;" width="10" height="13" viewBox="0 0 10 13"><path d="M2.5 6 V4 A2.5 2.5 0 0 1 7.5 4 V6" stroke="#e8a848" stroke-width="1.8" fill="none"/><rect x="0.5" y="6" width="9" height="7" fill="#e8a848"/></svg>
<svg class="a" style="left:163px;top:190px;" width="10" height="13" viewBox="0 0 10 13"><path d="M2.5 6 V4 A2.5 2.5 0 0 1 7.5 4 V6" stroke="#e8a848" stroke-width="1.8" fill="none"/><rect x="0.5" y="6" width="9" height="7" fill="#e8a848"/></svg>
<svg class="a" style="left:183px;top:190px;" width="10" height="13" viewBox="0 0 10 13"><path d="M2.5 6 V4 A2.5 2.5 0 0 1 7.5 4 V6" stroke="#e8a848" stroke-width="1.8" fill="none"/><rect x="0.5" y="6" width="9" height="7" fill="#e8a848"/></svg>
<div class="t" style="left:64px;top:185px;height:22px;line-height:22px;color:#222;font-size:13px;">Hierarc...</div>
<div class="t" style="left:121px;top:185px;height:22px;line-height:22px;color:#222;font-size:13px;">H..</div>
<div class="t" style="left:140px;top:185px;height:22px;line-height:22px;color:#222;font-size:13px;">V..</div>
<div class="t" style="left:198px;top:185px;height:22px;line-height:22px;color:#222;font-size:13px;">:</div>
<div class="t" style="left:207px;top:185px;height:22px;line-height:22px;color:#fff;font-size:13px;">Owner Display Name</div>
<div class="t" style="left:382px;top:185px;height:22px;line-height:22px;color:#222;font-size:13px;">O...</div>
<div class="t" style="left:406px;top:185px;height:22px;line-height:22px;color:#222;font-size:13px;">Read O...</div>
<div class="t" style="left:470px;top:185px;height:22px;line-height:22px;color:#222;font-size:13px;">Rule Name</div>
<div class="t" style="left:803px;top:185px;height:22px;line-height:22px;color:#222;font-size:13px;">Component Type</div>
<div class="t" style="left:907px;top:185px;height:22px;line-height:22px;color:#222;font-size:13px;">Rule Component</div>
<div class="t" style="left:1083px;top:185px;height:22px;line-height:22px;color:#222;font-size:13px;">Component Value</div>
<div class="t" style="left:1339px;top:185px;height:22px;line-height:22px;color:#222;font-size:13px;">Is Enabled</div>
<div class="t" style="left:1471px;top:185px;height:22px;line-height:22px;color:#222;font-size:13px;">Has Error</div>
<div class="a" style="left:118px;top:188px;width:1px;height:16px;background:#d8d8d8"></div>
<div class="a" style="left:138px;top:188px;width:1px;height:16px;background:#d8d8d8"></div>
<div class="a" style="left:158px;top:188px;width:1px;height:16px;background:#d8d8d8"></div>
<div class="a" style="left:178px;top:188px;width:1px;height:16px;background:#d8d8d8"></div>
<div class="a" style="left:403px;top:188px;width:1px;height:16px;background:#d8d8d8"></div>
<div class="a" style="left:467px;top:188px;width:1px;height:16px;background:#d8d8d8"></div>
<div class="a" style="left:723px;top:188px;width:1px;height:16px;background:#d8d8d8"></div>
<div class="a" style="left:800px;top:188px;width:1px;height:16px;background:#d8d8d8"></div>
<div class="a" style="left:904px;top:188px;width:1px;height:16px;background:#d8d8d8"></div>
<div class="a" style="left:1080px;top:188px;width:1px;height:16px;background:#d8d8d8"></div>
<div class="a" style="left:1336px;top:188px;width:1px;height:16px;background:#d8d8d8"></div>
<div class="a" style="left:1468px;top:188px;width:1px;height:16px;background:#d8d8d8"></div>
<div class="a" style="left:1653px;top:188px;width:1px;height:16px;background:#d8d8d8"></div>
<div class="a" style="left:0;top:0;width:1920px;height:1037px;overflow:hidden"><div class="a" style="left:45px;top:207px;width:73px;height:27px;background:#8fa9c6"></div><div class="a" style="left:118px;top:207px;width:20px;height:27px;background:#b8c4d1"></div><div class="a" style="left:138px;top:207px;width:20px;height:27px;background:#8fa9c6"></div><div class="a" style="left:118px;top:207px;width:1px;height:27px;background:#fff;opacity:0.8"></div><div class="a" style="left:138px;top:207px;width:1px;height:27px;background:#fff;opacity:0.8"></div><div class="a" style="left:50px;top:213px;width:16px;height:16px;background:#2c3b52;border:1px solid #eef2f6;box-sizing:border-box"></div><div class="a" style="left:53px;top:220px;width:10px;height:2px;background:#e8eef4"></div><div class="t" style="left:60px;top:208px;width:55px;height:27px;line-height:27px;color:#000;font-weight:bold;font-size:13px;text-align:right;">1</div><div class="t" style="left:120px;top:208px;width:35px;height:27px;line-height:27px;color:#000;font-weight:bold;font-size:13px;text-align:right;">12</div><div class="a" style="left:158px;top:207px;width:20px;height:27px;background:#fff"></div><svg class="a" style="left:160px;top:213px;" width="18" height="16" viewBox="0 0 18 16"><circle cx="8.8" cy="4.1" r="4.15" fill="#2f7cc0"/><path d="M2.1 14 V13 Q2.1 9.6 6.2 9.6 H11.8 Q15.9 9.6 15.9 13 V14 Z" fill="#2f7cc0"/></svg><div class="a" style="left:178px;top:207px;width:25px;height:27px;background:#fff"></div><div class="a" style="left:205px;top:207px;width:173px;height:27px;background:#fff"></div><div class="t" style="left:207px;top:208px;height:27px;line-height:27px;color:#000;font-weight:bold;font-size:13px;">Adele Vance</div><div class="a" style="left:380px;top:207px;width:23px;height:27px;background:#d4d4d4"></div><div class="a" style="left:403px;top:207px;width:1250px;height:27px;background:#d6d6d6"></div><div class="a" style="left:1653px;top:207px;width:197px;height:28px;background:#fff"></div><div class="a" style="left:45px;top:234px;width:1608px;height:1px;background:#6e6e6e"></div><div class="a" style="left:63px;top:235px;width:55px;height:27px;background:#8fa9c6"></div><div class="a" style="left:118px;top:235px;width:20px;height:27px;background:#b8c4d1"></div><div class="a" style="left:138px;top:235px;width:20px;height:27px;background:#8fa9c6"></div><div class="a" style="left:118px;top:235px;width:1px;height:27px;background:#fff;opacity:0.8"></div><div class="a" style="left:138px;top:235px;width:1px;height:27px;background:#fff;opacity:0.8"></div><div class="a" style="left:68px;top:241px;width:16px;height:16px;background:#2c3b52;border:1px solid #eef2f6;box-sizing:border-box"></div><div class="a" style="left:71px;top:248px;width:10px;height:2px;background:#e8eef4"></div><div class="t" style="left:60px;top:236px;width:55px;height:27px;line-height:27px;color:#000;font-weight:bold;font-size:13px;text-align:right;">2</div><div class="t" style="left:120px;top:236px;width:35px;height:27px;line-height:27px;color:#000;font-weight:bold;font-size:13px;text-align:right;">3</div><div class="a" style="left:158px;top:235px;width:20px;height:27px;background:#fff"></div><svg class="a" style="left:160px;top:240px;" width="17" height="17" viewBox="0 0 17 17"><path d="M2 1 H7.5 L9 3 H16 V6.3 H5.2 V8 H2 Z" fill="#2f7cc0"/><rect x="5.5" y="7.2" width="10.5" height="7.5" fill="none" stroke="#2f7cc0" stroke-width="1.1"/><path d="M1.5 9.5 H5.5 M2 11.5 H5.5 M2.5 13.5 H5.5 M7.5 10.2 H11 M7.5 12.3 H10" stroke="#2f7cc0" stroke-width="1"/><rect x="12.6" y="9" width="2" height="2" fill="#2f7cc0"/></svg><div class="a" style="left:178px;top:235px;width:25px;height:27px;background:#d8f6d8"></div><svg class="a" style="left:182px;top:240px;" width="14" height="17" viewBox="0 0 14 17"><rect x="0" y="1" width="14" height="2.2" fill="#707070"/><rect x="5" y="0" width="4" height="1.5" fill="#707070"/><path d="M1 4 H13 V16.2 H1Z" fill="#707070"/><path d="M4 6 V14.2 M7 6 V14.2 M10 6 V14.2" stroke="#fff" stroke-width="1.8"/></svg><div class="a" style="left:200px;top:244px;width:1px;height:11px;background:#3a2020"></div><div class="a" style="left:205px;top:235px;width:173px;height:27px;background:#fff"></div><div class="t" style="left:207px;top:236px;height:27px;line-height:27px;color:#000;font-weight:bold;font-size:13px;">Adele Vance</div><div class="a" style="left:380px;top:235px;width:23px;height:27px;background:#d4d4d4"></div><div class="a" style="left:403px;top:235px;width:64px;height:27px;background:#f0f0f0"></div><svg class="a" style="left:430px;top:242px;" width="13" height="13" viewBox="0 0 13 13"><rect x="0.5" y="0.5" width="12" height="12" fill="#fbfbfb" stroke="#c6c6c6" stroke-width="1"/><rect x="1.5" y="1.5" width="10" height="10" fill="none" stroke="#f0f0f0" stroke-width="1"/></svg><div class="a" style="left:467px;top:235px;width:256px;height:27px;background:#fff;overflow:hidden"><div class="t" style="left:3px;top:1px;height:27px;line-height:27px;color:#000;font-weight:bold;font-size:13px;">Move all messages from Microsoft Viva to the Digest</div></div><div class="a" style="left:723px;top:235px;width:77px;height:27px;background:#fff"></div><div class="t" style="left:723px;top:236px;width:74px;height:27px;line-height:27px;color:#000;font-weight:bold;font-size:13px;text-align:right;">1</div><div class="a" style="left:800px;top:235px;width:536px;height:27px;background:#d6d6d6"></div><div class="a" style="left:1336px;top:235px;width:132px;height:27px;background:#f0f0f0"></div><svg class="a" style="left:1389px;top:240px;" width="16" height="17" viewBox="0 0 16 17"><path d="M3 10.5 V1.5 H14.5 V9" fill="none" stroke="#606060" stroke-width="1"/><rect x="10.5" y="3" width="2" height="2" fill="#d03020"/><path d="M5 4.5 H8.5 M5 6.5 H7" stroke="#999" stroke-width="1"/><path d="M0 3.5 H2.5 M0 5.5 H2.5 M0 7.5 H2.5" stroke="#2f7cc0" stroke-width="1"/><circle cx="9.3" cy="10.5" r="5" fill="#1a9a5a" stroke="#fff" stroke-width="1"/><path d="M6.8 10.6 L8.8 12.6 L12 8.8" stroke="#fff" stroke-width="1.5" fill="none"/></svg><svg class="a" style="left:1406px;top:242px;" width="13" height="13" viewBox="0 0 13 13"><rect x="0.5" y="0.5" width="12" height="12" fill="#fbfbfb" stroke="#c6c6c6" stroke-width="1"/><rect x="1.5" y="1.5" width="10" height="10" fill="none" stroke="#f0f0f0" stroke-width="1"/><path d="M3.2 6.8 L5.6 10 L9.6 3" stroke="#a6a6a6" stroke-width="1.6" fill="none"/></svg><div class="a" style="left:1468px;top:235px;width:185px;height:27px;background:#f0f0f0"></div><svg class="a" style="left:1556px;top:242px;" width="13" height="13" viewBox="0 0 13 13"><rect x="0.5" y="0.5" width="12" height="12" fill="#fbfbfb" stroke="#c6c6c6" stroke-width="1"/><rect x="1.5" y="1.5" width="10" height="10" fill="none" stroke="#f0f0f0" stroke-width="1"/></svg><div class="a" style="left:63px;top:262px;width:1590px;height:1px;background:#6e6e6e"></div><div class="a" style="left:83px;top:263px;width:35px;height:27px;background:#c8d9ea"></div><div class="a" style="left:119px;top:263px;width:19px;height:27px;background:#d2d8de"></div><div class="a" style="left:139px;top:263px;width:19px;height:27px;background:#d2d8de"></div><div class="t" style="left:60px;top:264px;width:55px;height:27px;line-height:27px;color:#000;font-size:13px;text-align:right;">3</div><div class="a" style="left:158px;top:263px;width:20px;height:27px;background:#fff"></div><svg class="a" style="left:161px;top:270px;" width="16" height="12" viewBox="0 0 16 12"><rect x="3.5" y="1.3" width="11.5" height="8.5" fill="none" stroke="#2f7cc0" stroke-width="1.1"/><path d="M0.8 3.3 H3.5 M0.8 5.6 H3.5 M1.3 7.9 H3.5 M5.5 4.3 H9.3 M5.5 6.5 H8.3" stroke="#2f7cc0" stroke-width="1"/><rect x="11.2" y="3" width="2" height="2" fill="#2f7cc0"/></svg><div class="a" style="left:178px;top:263px;width:25px;height:27px;background:#d8f6d8"></div><svg class="a" style="left:182px;top:268px;" width="14" height="17" viewBox="0 0 14 17"><rect x="0" y="1" width="14" height="2.2" fill="#707070"/><rect x="5" y="0" width="4" height="1.5" fill="#707070"/><path d="M1 4 H13 V16.2 H1Z" fill="#707070"/><path d="M4 6 V14.2 M7 6 V14.2 M10 6 V14.2" stroke="#fff" stroke-width="1.8"/></svg><div class="a" style="left:200px;top:272px;width:1px;height:11px;background:#3a2020"></div><div class="a" style="left:205px;top:263px;width:173px;height:27px;background:#fff"></div><div class="t" style="left:207px;top:264px;height:27px;line-height:27px;color:#000;font-size:13px;">Adele Vance</div><div class="a" style="left:380px;top:263px;width:23px;height:27px;background:#d4d4d4"></div><div class="a" style="left:403px;top:263px;width:64px;height:27px;background:#f0f0f0"></div><svg class="a" style="left:430px;top:270px;" width="13" height="13" viewBox="0 0 13 13"><rect x="0.5" y="0.5" width="12" height="12" fill="#fbfbfb" stroke="#c6c6c6" stroke-width="1"/><rect x="1.5" y="1.5" width="10" height="10" fill="none" stroke="#f0f0f0" stroke-width="1"/></svg><div class="a" style="left:467px;top:263px;width:256px;height:27px;background:#fff;overflow:hidden"><div class="t" style="left:3px;top:1px;height:27px;line-height:27px;color:#000;font-size:13px;">Move all messages from Microsoft Viva to</div></div><div class="a" style="left:723px;top:263px;width:77px;height:27px;background:#fff"></div><div class="t" style="left:723px;top:264px;width:74px;height:27px;line-height:27px;color:#000;font-size:13px;text-align:right;">1</div><div class="a" style="left:800px;top:263px;width:104px;height:27px;background:#fff"></div><svg class="a" style="left:804px;top:268px;" width="17" height="17" viewBox="0 0 17 17"><path d="M0 3.5 H2 M0 5.5 H2 M0 7.5 H2" stroke="#2f7cc0" stroke-width="1"/><path d="M2.5 10 V1.5 H13.5 V5" fill="none" stroke="#555" stroke-width="1"/><path d="M2.5 9.5 H4" stroke="#555" stroke-width="1"/><rect x="10" y="3" width="2" height="2" fill="#d03020"/><path d="M4 4.5 H8" stroke="#999" stroke-width="1"/><circle cx="9.3" cy="10.7" r="4.6" fill="#2f7cc0" stroke="#fff" stroke-width="0.8"/><path d="M7 9.7 H11.6 M7 11.7 H11.6" stroke="#fff" stroke-width="1.1"/></svg><div class="t" style="left:821px;top:264px;height:27px;line-height:27px;color:#000;font-size:13px;">Condition</div><div class="a" style="left:904px;top:263px;width:176px;height:27px;background:#fff"></div><div class="t" style="left:907px;top:264px;height:27px;line-height:27px;color:#000;font-size:13px;">From Addresses</div><div class="a" style="left:1080px;top:263px;width:256px;height:27px;background:#fff;overflow:hidden"><div class="t" style="left:3px;top:1px;height:27px;line-height:27px;color:#000;font-size:13px;">viva-noreply@microsoft.com &lt;viva-noreply</div></div><div class="a" style="left:1336px;top:263px;width:132px;height:27px;background:#f0f0f0"></div><svg class="a" style="left:1389px;top:268px;" width="16" height="17" viewBox="0 0 16 17"><path d="M3 10.5 V1.5 H14.5 V9" fill="none" stroke="#606060" stroke-width="1"/><rect x="10.5" y="3" width="2" height="2" fill="#d03020"/><path d="M5 4.5 H8.5 M5 6.5 H7" stroke="#999" stroke-width="1"/><path d="M0 3.5 H2.5 M0 5.5 H2.5 M0 7.5 H2.5" stroke="#2f7cc0" stroke-width="1"/><circle cx="9.3" cy="10.5" r="5" fill="#1a9a5a" stroke="#fff" stroke-width="1"/><path d="M6.8 10.6 L8.8 12.6 L12 8.8" stroke="#fff" stroke-width="1.5" fill="none"/></svg><svg class="a" style="left:1406px;top:270px;" width="13" height="13" viewBox="0 0 13 13"><rect x="0.5" y="0.5" width="12" height="12" fill="#fbfbfb" stroke="#c6c6c6" stroke-width="1"/><rect x="1.5" y="1.5" width="10" height="10" fill="none" stroke="#f0f0f0" stroke-width="1"/><path d="M3.2 6.8 L5.6 10 L9.6 3" stroke="#a6a6a6" stroke-width="1.6" fill="none"/></svg><div class="a" style="left:1468px;top:263px;width:185px;height:27px;background:#f0f0f0"></div><svg class="a" style="left:1556px;top:270px;" width="13" height="13" viewBox="0 0 13 13"><rect x="0.5" y="0.5" width="12" height="12" fill="#fbfbfb" stroke="#c6c6c6" stroke-width="1"/><rect x="1.5" y="1.5" width="10" height="10" fill="none" stroke="#f0f0f0" stroke-width="1"/></svg><div class="a" style="left:83px;top:290px;width:75px;height:1px;background:#fff"></div><div class="a" style="left:158px;top:290px;width:1495px;height:1px;background:#f3f3f3"></div><div class="a" style="left:83px;top:291px;width:35px;height:27px;background:#6aa6e0"></div><div class="a" style="left:119px;top:291px;width:19px;height:27px;background:#6aa6e0"></div><div class="a" style="left:139px;top:291px;width:19px;height:27px;background:#6aa6e0"></div><div class="t" style="left:60px;top:292px;width:55px;height:27px;line-height:27px;color:#fff;font-size:13px;text-align:right;">3</div><div class="a" style="left:158px;top:291px;width:20px;height:27px;background:#0078d7"></div><svg class="a" style="left:161px;top:298px;" width="16" height="12" viewBox="0 0 16 12"><rect x="3.5" y="1.3" width="11.5" height="8.5" fill="none" stroke="#fff" stroke-width="1.1"/><path d="M0.8 3.3 H3.5 M0.8 5.6 H3.5 M1.3 7.9 H3.5 M5.5 4.3 H9.3 M5.5 6.5 H8.3" stroke="#fff" stroke-width="1"/><rect x="11.2" y="3" width="2" height="2" fill="#fff"/></svg><div class="a" style="left:178px;top:291px;width:25px;height:27px;background:#5aa6d0"></div><svg class="a" style="left:182px;top:296px;" width="14" height="17" viewBox="0 0 14 17"><rect x="0" y="1" width="14" height="2.2" fill="#707070"/><rect x="5" y="0" width="4" height="1.5" fill="#707070"/><path d="M1 4 H13 V16.2 H1Z" fill="#707070"/><path d="M4 6 V14.2 M7 6 V14.2 M10 6 V14.2" stroke="#fff" stroke-width="1.8"/></svg><div class="a" style="left:200px;top:300px;width:1px;height:11px;background:#cde"></div><div class="a" style="left:205px;top:291px;width:173px;height:27px;background:#0078d7"></div><div class="t" style="left:207px;top:292px;height:27px;line-height:27px;color:#fff;font-size:13px;">Adele Vance</div><div class="a" style="left:380px;top:291px;width:23px;height:27px;background:#6aa3d8"></div><div class="a" style="left:403px;top:291px;width:64px;height:27px;background:#7ab6e6"></div><svg class="a" style="left:430px;top:298px;" width="13" height="13" viewBox="0 0 13 13"><rect x="0.5" y="0.5" width="12" height="12" fill="#fbfbfb" stroke="#c6c6c6" stroke-width="1"/><rect x="1.5" y="1.5" width="10" height="10" fill="none" stroke="#f0f0f0" stroke-width="1"/></svg><div class="a" style="left:467px;top:291px;width:256px;height:27px;background:#0078d7;overflow:hidden"><div class="t" style="left:3px;top:1px;height:27px;line-height:27px;color:#fff;font-size:13px;">Move all messages from Microsoft Viva to</div></div><div class="a" style="left:723px;top:291px;width:77px;height:27px;background:#0078d7"></div><div class="t" style="left:723px;top:292px;width:74px;height:27px;line-height:27px;color:#fff;font-size:13px;text-align:right;">1</div><div class="a" style="left:800px;top:291px;width:104px;height:27px;background:#0078d7"></div><svg class="a" style="left:804px;top:296px;" width="17" height="17" viewBox="0 0 17 17"><rect x="-0.5" y="0.5" width="15" height="11" fill="#fff" opacity="0.95"/><path d="M15 5.8 L7.2 6.8 L5.6 10.6 L9.6 10.2 L4.6 15 L14.4 8.4 L10.4 8.6 Z" fill="#fff" stroke="#fff" stroke-width="2.2"/><path d="M0 3.5 H2 M0 5.5 H2 M0 7.5 H2" stroke="#2f7cc0" stroke-width="1"/><path d="M2.5 10 V1.5 H13.5 V5" fill="none" stroke="#555" stroke-width="1"/><path d="M2.5 9.5 H4" stroke="#555" stroke-width="1"/><rect x="10" y="3" width="2" height="2" fill="#d03020"/><path d="M4 4.5 H8" stroke="#999" stroke-width="1"/><path d="M15 5.8 L7.2 6.8 L5.6 10.6 L9.6 10.2 L4.6 15 L14.4 8.4 L10.4 8.6 Z" fill="#e8a838" stroke="#e8a838" stroke-width="0.9" stroke-linejoin="round"/></svg><div class="t" style="left:821px;top:292px;height:27px;line-height:27px;color:#fff;font-size:13px;">Action</div><div class="a" style="left:904px;top:291px;width:176px;height:27px;background:#0078d7"></div><div class="t" style="left:907px;top:292px;height:27px;line-height:27px;color:#fff;font-size:13px;">Move To Folder</div><div class="a" style="left:1080px;top:291px;width:256px;height:27px;background:#0078d7;overflow:hidden"><div class="t" style="left:3px;top:1px;height:27px;line-height:27px;color:#fff;font-size:13px;">Digest mail</div></div><div class="a" style="left:1336px;top:291px;width:132px;height:27px;background:#7ab6e6"></div><svg class="a" style="left:1389px;top:296px;" width="16" height="17" viewBox="0 0 16 17"><path d="M3 10.5 V1.5 H14.5 V9" fill="none" stroke="#606060" stroke-width="1"/><rect x="10.5" y="3" width="2" height="2" fill="#d03020"/><path d="M5 4.5 H8.5 M5 6.5 H7" stroke="#999" stroke-width="1"/><path d="M0 3.5 H2.5 M0 5.5 H2.5 M0 7.5 H2.5" stroke="#2f7cc0" stroke-width="1"/><circle cx="9.3" cy="10.5" r="5" fill="#1a9a5a" stroke="#fff" stroke-width="1"/><path d="M6.8 10.6 L8.8 12.6 L12 8.8" stroke="#fff" stroke-width="1.5" fill="none"/></svg><svg class="a" style="left:1406px;top:298px;" width="13" height="13" viewBox="0 0 13 13"><rect x="0.5" y="0.5" width="12" height="12" fill="#fbfbfb" stroke="#c6c6c6" stroke-width="1"/><rect x="1.5" y="1.5" width="10" height="10" fill="none" stroke="#f0f0f0" stroke-width="1"/><path d="M3.2 6.8 L5.6 10 L9.6 3" stroke="#a6a6a6" stroke-width="1.6" fill="none"/></svg><div class="a" style="left:1468px;top:291px;width:185px;height:27px;background:#7ab6e6"></div><svg class="a" style="left:1556px;top:298px;" width="13" height="13" viewBox="0 0 13 13"><rect x="0.5" y="0.5" width="12" height="12" fill="#fbfbfb" stroke="#c6c6c6" stroke-width="1"/><rect x="1.5" y="1.5" width="10" height="10" fill="none" stroke="#f0f0f0" stroke-width="1"/></svg><div class="a" style="left:83px;top:318px;width:75px;height:1px;background:#fff"></div><div class="a" style="left:158px;top:318px;width:1495px;height:1px;background:#f3f3f3"></div><div class="a" style="left:83px;top:319px;width:35px;height:27px;background:#c8d9ea"></div><div class="a" style="left:119px;top:319px;width:19px;height:27px;background:#d2d8de"></div><div class="a" style="left:139px;top:319px;width:19px;height:27px;background:#d2d8de"></div><div class="t" style="left:60px;top:320px;width:55px;height:27px;line-height:27px;color:#000;font-size:13px;text-align:right;">3</div><div class="a" style="left:158px;top:319px;width:20px;height:27px;background:#fff"></div><svg class="a" style="left:161px;top:326px;" width="16" height="12" viewBox="0 0 16 12"><rect x="3.5" y="1.3" width="11.5" height="8.5" fill="none" stroke="#2f7cc0" stroke-width="1.1"/><path d="M0.8 3.3 H3.5 M0.8 5.6 H3.5 M1.3 7.9 H3.5 M5.5 4.3 H9.3 M5.5 6.5 H8.3" stroke="#2f7cc0" stroke-width="1"/><rect x="11.2" y="3" width="2" height="2" fill="#2f7cc0"/></svg><div class="a" style="left:178px;top:319px;width:25px;height:27px;background:#d8f6d8"></div><svg class="a" style="left:182px;top:324px;" width="14" height="17" viewBox="0 0 14 17"><rect x="0" y="1" width="14" height="2.2" fill="#707070"/><rect x="5" y="0" width="4" height="1.5" fill="#707070"/><path d="M1 4 H13 V16.2 H1Z" fill="#707070"/><path d="M4 6 V14.2 M7 6 V14.2 M10 6 V14.2" stroke="#fff" stroke-width="1.8"/></svg><div class="a" style="left:200px;top:328px;width:1px;height:11px;background:#3a2020"></div><div class="a" style="left:205px;top:319px;width:173px;height:27px;background:#fff"></div><div class="t" style="left:207px;top:320px;height:27px;line-height:27px;color:#000;font-size:13px;">Adele Vance</div><div class="a" style="left:380px;top:319px;width:23px;height:27px;background:#d4d4d4"></div><div class="a" style="left:403px;top:319px;width:64px;height:27px;background:#f0f0f0"></div><svg class="a" style="left:430px;top:326px;" width="13" height="13" viewBox="0 0 13 13"><rect x="0.5" y="0.5" width="12" height="12" fill="#fbfbfb" stroke="#c6c6c6" stroke-width="1"/><rect x="1.5" y="1.5" width="10" height="10" fill="none" stroke="#f0f0f0" stroke-width="1"/></svg><div class="a" style="left:467px;top:319px;width:256px;height:27px;background:#fff;overflow:hidden"><div class="t" style="left:3px;top:1px;height:27px;line-height:27px;color:#000;font-size:13px;">Move all messages from Microsoft Viva to</div></div><div class="a" style="left:723px;top:319px;width:77px;height:27px;background:#fff"></div><div class="t" style="left:723px;top:320px;width:74px;height:27px;line-height:27px;color:#000;font-size:13px;text-align:right;">1</div><div class="a" style="left:800px;top:319px;width:104px;height:27px;background:#fff"></div><svg class="a" style="left:804px;top:324px;" width="17" height="17" viewBox="0 0 17 17"><path d="M0 3.5 H2 M0 5.5 H2 M0 7.5 H2" stroke="#2f7cc0" stroke-width="1"/><path d="M2.5 10 V1.5 H13.5 V5" fill="none" stroke="#555" stroke-width="1"/><path d="M2.5 9.5 H4" stroke="#555" stroke-width="1"/><rect x="10" y="3" width="2" height="2" fill="#d03020"/><path d="M4 4.5 H8" stroke="#999" stroke-width="1"/><path d="M15 5.8 L7.2 6.8 L5.6 10.6 L9.6 10.2 L4.6 15 L14.4 8.4 L10.4 8.6 Z" fill="#e8a838" stroke="#e8a838" stroke-width="0.9" stroke-linejoin="round"/></svg><div class="t" style="left:821px;top:320px;height:27px;line-height:27px;color:#000;font-size:13px;">Action</div><div class="a" style="left:904px;top:319px;width:176px;height:27px;background:#fff"></div><div class="t" style="left:907px;top:320px;height:27px;line-height:27px;color:#000;font-size:13px;">Stop Processing Rules</div><div class="a" style="left:1080px;top:319px;width:256px;height:27px;background:#f0f0f0"></div><svg class="a" style="left:1203px;top:326px;" width="13" height="13" viewBox="0 0 13 13"><rect x="0.5" y="0.5" width="12" height="12" fill="#fbfbfb" stroke="#c6c6c6" stroke-width="1"/><rect x="1.5" y="1.5" width="10" height="10" fill="none" stroke="#f0f0f0" stroke-width="1"/><path d="M3.2 6.8 L5.6 10 L9.6 3" stroke="#a6a6a6" stroke-width="1.6" fill="none"/></svg><div class="a" style="left:1336px;top:319px;width:132px;height:27px;background:#f0f0f0"></div><svg class="a" style="left:1389px;top:324px;" width="16" height="17" viewBox="0 0 16 17"><path d="M3 10.5 V1.5 H14.5 V9" fill="none" stroke="#606060" stroke-width="1"/><rect x="10.5" y="3" width="2" height="2" fill="#d03020"/><path d="M5 4.5 H8.5 M5 6.5 H7" stroke="#999" stroke-width="1"/><path d="M0 3.5 H2.5 M0 5.5 H2.5 M0 7.5 H2.5" stroke="#2f7cc0" stroke-width="1"/><circle cx="9.3" cy="10.5" r="5" fill="#1a9a5a" stroke="#fff" stroke-width="1"/><path d="M6.8 10.6 L8.8 12.6 L12 8.8" stroke="#fff" stroke-width="1.5" fill="none"/></svg><svg class="a" style="left:1406px;top:326px;" width="13" height="13" viewBox="0 0 13 13"><rect x="0.5" y="0.5" width="12" height="12" fill="#fbfbfb" stroke="#c6c6c6" stroke-width="1"/><rect x="1.5" y="1.5" width="10" height="10" fill="none" stroke="#f0f0f0" stroke-width="1"/><path d="M3.2 6.8 L5.6 10 L9.6 3" stroke="#a6a6a6" stroke-width="1.6" fill="none"/></svg><div class="a" style="left:1468px;top:319px;width:185px;height:27px;background:#f0f0f0"></div><svg class="a" style="left:1556px;top:326px;" width="13" height="13" viewBox="0 0 13 13"><rect x="0.5" y="0.5" width="12" height="12" fill="#fbfbfb" stroke="#c6c6c6" stroke-width="1"/><rect x="1.5" y="1.5" width="10" height="10" fill="none" stroke="#f0f0f0" stroke-width="1"/></svg><div class="a" style="left:63px;top:346px;width:1590px;height:1px;background:#6e6e6e"></div><div class="a" style="left:63px;top:347px;width:55px;height:27px;background:#8fa9c6"></div><div class="a" style="left:118px;top:347px;width:20px;height:27px;background:#b8c4d1"></div><div class="a" style="left:138px;top:347px;width:20px;height:27px;background:#8fa9c6"></div><div class="a" style="left:118px;top:347px;width:1px;height:27px;background:#fff;opacity:0.8"></div><div class="a" style="left:138px;top:347px;width:1px;height:27px;background:#fff;opacity:0.8"></div><div class="a" style="left:68px;top:353px;width:16px;height:16px;background:#2c3b52;border:1px solid #eef2f6;box-sizing:border-box"></div><div class="a" style="left:71px;top:360px;width:10px;height:2px;background:#e8eef4"></div><div class="t" style="left:60px;top:348px;width:55px;height:27px;line-height:27px;color:#000;font-weight:bold;font-size:13px;text-align:right;">2</div><div class="t" style="left:120px;top:348px;width:35px;height:27px;line-height:27px;color:#000;font-weight:bold;font-size:13px;text-align:right;">3</div><div class="a" style="left:158px;top:347px;width:20px;height:27px;background:#fff"></div><svg class="a" style="left:160px;top:352px;" width="17" height="17" viewBox="0 0 17 17"><path d="M2 1 H7.5 L9 3 H16 V6.3 H5.2 V8 H2 Z" fill="#2f7cc0"/><rect x="5.5" y="7.2" width="10.5" height="7.5" fill="none" stroke="#2f7cc0" stroke-width="1.1"/><path d="M1.5 9.5 H5.5 M2 11.5 H5.5 M2.5 13.5 H5.5 M7.5 10.2 H11 M7.5 12.3 H10" stroke="#2f7cc0" stroke-width="1"/><rect x="12.6" y="9" width="2" height="2" fill="#2f7cc0"/></svg><div class="a" style="left:178px;top:347px;width:25px;height:27px;background:#fff"></div><div class="a" style="left:205px;top:347px;width:173px;height:27px;background:#fff"></div><div class="t" style="left:207px;top:348px;height:27px;line-height:27px;color:#000;font-weight:bold;font-size:13px;">Adele Vance</div><div class="a" style="left:380px;top:347px;width:23px;height:27px;background:#d4d4d4"></div><div class="a" style="left:403px;top:347px;width:64px;height:27px;background:#f0f0f0"></div><svg class="a" style="left:430px;top:354px;" width="13" height="13" viewBox="0 0 13 13"><rect x="0.5" y="0.5" width="12" height="12" fill="#fbfbfb" stroke="#c6c6c6" stroke-width="1"/><rect x="1.5" y="1.5" width="10" height="10" fill="none" stroke="#f0f0f0" stroke-width="1"/></svg><div class="a" style="left:467px;top:347px;width:256px;height:27px;background:#fff;overflow:hidden"><div class="t" style="left:3px;top:1px;height:27px;line-height:27px;color:#000;font-weight:bold;font-size:13px;">Alex</div></div><div class="a" style="left:723px;top:347px;width:77px;height:27px;background:#fff"></div><div class="t" style="left:723px;top:348px;width:74px;height:27px;line-height:27px;color:#000;font-weight:bold;font-size:13px;text-align:right;">2</div><div class="a" style="left:800px;top:347px;width:536px;height:27px;background:#d6d6d6"></div><div class="a" style="left:1336px;top:347px;width:132px;height:27px;background:#f0f0f0"></div><svg class="a" style="left:1389px;top:352px;" width="16" height="17" viewBox="0 0 16 17"><path d="M3 10.5 V1.5 H14.5 V9" fill="none" stroke="#606060" stroke-width="1"/><rect x="10.5" y="3" width="2" height="2" fill="#d03020"/><path d="M5 4.5 H8.5 M5 6.5 H7" stroke="#999" stroke-width="1"/><path d="M0 3.5 H2.5 M0 5.5 H2.5 M0 7.5 H2.5" stroke="#2f7cc0" stroke-width="1"/><circle cx="9.3" cy="10.5" r="5" fill="#1a9a5a" stroke="#fff" stroke-width="1"/><path d="M6.8 10.6 L8.8 12.6 L12 8.8" stroke="#fff" stroke-width="1.5" fill="none"/></svg><svg class="a" style="left:1406px;top:354px;" width="13" height="13" viewBox="0 0 13 13"><rect x="0.5" y="0.5" width="12" height="12" fill="#fbfbfb" stroke="#c6c6c6" stroke-width="1"/><rect x="1.5" y="1.5" width="10" height="10" fill="none" stroke="#f0f0f0" stroke-width="1"/><path d="M3.2 6.8 L5.6 10 L9.6 3" stroke="#a6a6a6" stroke-width="1.6" fill="none"/></svg><div class="a" style="left:1468px;top:347px;width:185px;height:27px;background:#f0f0f0"></div><svg class="a" style="left:1556px;top:354px;" width="13" height="13" viewBox="0 0 13 13"><rect x="0.5" y="0.5" width="12" height="12" fill="#fbfbfb" stroke="#c6c6c6" stroke-width="1"/><rect x="1.5" y="1.5" width="10" height="10" fill="none" stroke="#f0f0f0" stroke-width="1"/></svg><div class="a" style="left:63px;top:374px;width:1590px;height:1px;background:#6e6e6e"></div><div class="a" style="left:83px;top:375px;width:35px;height:27px;background:#c8d9ea"></div><div class="a" style="left:119px;top:375px;width:19px;height:27px;background:#d2d8de"></div><div class="a" style="left:139px;top:375px;width:19px;height:27px;background:#d2d8de"></div><div class="t" style="left:60px;top:376px;width:55px;height:27px;line-height:27px;color:#000;font-size:13px;text-align:right;">3</div><div class="a" style="left:158px;top:375px;width:20px;height:27px;background:#fff"></div><svg class="a" style="left:161px;top:382px;" width="16" height="12" viewBox="0 0 16 12"><rect x="3.5" y="1.3" width="11.5" height="8.5" fill="none" stroke="#2f7cc0" stroke-width="1.1"/><path d="M0.8 3.3 H3.5 M0.8 5.6 H3.5 M1.3 7.9 H3.5 M5.5 4.3 H9.3 M5.5 6.5 H8.3" stroke="#2f7cc0" stroke-width="1"/><rect x="11.2" y="3" width="2" height="2" fill="#2f7cc0"/></svg><div class="a" style="left:178px;top:375px;width:25px;height:27px;background:#fff"></div><div class="a" style="left:205px;top:375px;width:173px;height:27px;background:#fff"></div><div class="t" style="left:207px;top:376px;height:27px;line-height:27px;color:#000;font-size:13px;">Adele Vance</div><div class="a" style="left:380px;top:375px;width:23px;height:27px;background:#d4d4d4"></div><div class="a" style="left:403px;top:375px;width:64px;height:27px;background:#f0f0f0"></div><svg class="a" style="left:430px;top:382px;" width="13" height="13" viewBox="0 0 13 13"><rect x="0.5" y="0.5" width="12" height="12" fill="#fbfbfb" stroke="#c6c6c6" stroke-width="1"/><rect x="1.5" y="1.5" width="10" height="10" fill="none" stroke="#f0f0f0" stroke-width="1"/></svg><div class="a" style="left:467px;top:375px;width:256px;height:27px;background:#fff;overflow:hidden"><div class="t" style="left:3px;top:1px;height:27px;line-height:27px;color:#000;font-size:13px;">Alex</div></div><div class="a" style="left:723px;top:375px;width:77px;height:27px;background:#fff"></div><div class="t" style="left:723px;top:376px;width:74px;height:27px;line-height:27px;color:#000;font-size:13px;text-align:right;">2</div><div class="a" style="left:800px;top:375px;width:104px;height:27px;background:#fff"></div><svg class="a" style="left:804px;top:380px;" width="17" height="17" viewBox="0 0 17 17"><path d="M0 3.5 H2 M0 5.5 H2 M0 7.5 H2" stroke="#2f7cc0" stroke-width="1"/><path d="M2.5 10 V1.5 H13.5 V5" fill="none" stroke="#555" stroke-width="1"/><path d="M2.5 9.5 H4" stroke="#555" stroke-width="1"/><rect x="10" y="3" width="2" height="2" fill="#d03020"/><path d="M4 4.5 H8" stroke="#999" stroke-width="1"/><circle cx="9.3" cy="10.7" r="4.6" fill="#2f7cc0" stroke="#fff" stroke-width="0.8"/><path d="M7 9.7 H11.6 M7 11.7 H11.6" stroke="#fff" stroke-width="1.1"/></svg><div class="t" style="left:821px;top:376px;height:27px;line-height:27px;color:#000;font-size:13px;">Condition</div><div class="a" style="left:904px;top:375px;width:176px;height:27px;background:#fff"></div><div class="t" style="left:907px;top:376px;height:27px;line-height:27px;color:#000;font-size:13px;">From Addresses</div><div class="a" style="left:1080px;top:375px;width:256px;height:27px;background:#fff;overflow:hidden"><div class="t" style="left:3px;top:1px;height:27px;line-height:27px;color:#000;font-size:13px;">Alex Wilber &lt;AlexW@M365x85832012.OnMicrosoft.com&gt;</div></div><div class="a" style="left:1336px;top:375px;width:132px;height:27px;background:#f0f0f0"></div><svg class="a" style="left:1389px;top:380px;" width="16" height="17" viewBox="0 0 16 17"><path d="M3 10.5 V1.5 H14.5 V9" fill="none" stroke="#606060" stroke-width="1"/><rect x="10.5" y="3" width="2" height="2" fill="#d03020"/><path d="M5 4.5 H8.5 M5 6.5 H7" stroke="#999" stroke-width="1"/><path d="M0 3.5 H2.5 M0 5.5 H2.5 M0 7.5 H2.5" stroke="#2f7cc0" stroke-width="1"/><circle cx="9.3" cy="10.5" r="5" fill="#1a9a5a" stroke="#fff" stroke-width="1"/><path d="M6.8 10.6 L8.8 12.6 L12 8.8" stroke="#fff" stroke-width="1.5" fill="none"/></svg><svg class="a" style="left:1406px;top:382px;" width="13" height="13" viewBox="0 0 13 13"><rect x="0.5" y="0.5" width="12" height="12" fill="#fbfbfb" stroke="#c6c6c6" stroke-width="1"/><rect x="1.5" y="1.5" width="10" height="10" fill="none" stroke="#f0f0f0" stroke-width="1"/><path d="M3.2 6.8 L5.6 10 L9.6 3" stroke="#a6a6a6" stroke-width="1.6" fill="none"/></svg><div class="a" style="left:1468px;top:375px;width:185px;height:27px;background:#f0f0f0"></div><svg class="a" style="left:1556px;top:382px;" width="13" height="13" viewBox="0 0 13 13"><rect x="0.5" y="0.5" width="12" height="12" fill="#fbfbfb" stroke="#c6c6c6" stroke-width="1"/><rect x="1.5" y="1.5" width="10" height="10" fill="none" stroke="#f0f0f0" stroke-width="1"/></svg><div class="a" style="left:83px;top:402px;width:75px;height:1px;background:#fff"></div><div class="a" style="left:158px;top:402px;width:1495px;height:1px;background:#f3f3f3"></div><div class="a" style="left:83px;top:403px;width:35px;height:27px;background:#c8d9ea"></div><div class="a" style="left:119px;top:403px;width:19px;height:27px;background:#d2d8de"></div><div class="a" style="left:139px;top:403px;width:19px;height:27px;background:#d2d8de"></div><div class="t" style="left:60px;top:404px;width:55px;height:27px;line-height:27px;color:#000;font-size:13px;text-align:right;">3</div><div class="a" style="left:158px;top:403px;width:20px;height:27px;background:#fff"></div><svg class="a" style="left:161px;top:410px;" width="16" height="12" viewBox="0 0 16 12"><rect x="3.5" y="1.3" width="11.5" height="8.5" fill="none" stroke="#2f7cc0" stroke-width="1.1"/><path d="M0.8 3.3 H3.5 M0.8 5.6 H3.5 M1.3 7.9 H3.5 M5.5 4.3 H9.3 M5.5 6.5 H8.3" stroke="#2f7cc0" stroke-width="1"/><rect x="11.2" y="3" width="2" height="2" fill="#2f7cc0"/></svg><div class="a" style="left:178px;top:403px;width:25px;height:27px;background:#fff"></div><div class="a" style="left:205px;top:403px;width:173px;height:27px;background:#fff"></div><div class="t" style="left:207px;top:404px;height:27px;line-height:27px;color:#000;font-size:13px;">Adele Vance</div><div class="a" style="left:380px;top:403px;width:23px;height:27px;background:#d4d4d4"></div><div class="a" style="left:403px;top:403px;width:64px;height:27px;background:#f0f0f0"></div><svg class="a" style="left:430px;top:410px;" width="13" height="13" viewBox="0 0 13 13"><rect x="0.5" y="0.5" width="12" height="12" fill="#fbfbfb" stroke="#c6c6c6" stroke-width="1"/><rect x="1.5" y="1.5" width="10" height="10" fill="none" stroke="#f0f0f0" stroke-width="1"/></svg><div class="a" style="left:467px;top:403px;width:256px;height:27px;background:#fff;overflow:hidden"><div class="t" style="left:3px;top:1px;height:27px;line-height:27px;color:#000;font-size:13px;">Alex</div></div><div class="a" style="left:723px;top:403px;width:77px;height:27px;background:#fff"></div><div class="t" style="left:723px;top:404px;width:74px;height:27px;line-height:27px;color:#000;font-size:13px;text-align:right;">2</div><div class="a" style="left:800px;top:403px;width:104px;height:27px;background:#fff"></div><svg class="a" style="left:804px;top:408px;" width="17" height="17" viewBox="0 0 17 17"><path d="M0 3.5 H2 M0 5.5 H2 M0 7.5 H2" stroke="#2f7cc0" stroke-width="1"/><path d="M2.5 10 V1.5 H13.5 V5" fill="none" stroke="#555" stroke-width="1"/><path d="M2.5 9.5 H4" stroke="#555" stroke-width="1"/><rect x="10" y="3" width="2" height="2" fill="#d03020"/><path d="M4 4.5 H8" stroke="#999" stroke-width="1"/><path d="M15 5.8 L7.2 6.8 L5.6 10.6 L9.6 10.2 L4.6 15 L14.4 8.4 L10.4 8.6 Z" fill="#e8a838" stroke="#e8a838" stroke-width="0.9" stroke-linejoin="round"/></svg><div class="t" style="left:821px;top:404px;height:27px;line-height:27px;color:#000;font-size:13px;">Action</div><div class="a" style="left:904px;top:403px;width:176px;height:27px;background:#fff"></div><div class="t" style="left:907px;top:404px;height:27px;line-height:27px;color:#000;font-size:13px;">Move To Folder</div><div class="a" style="left:1080px;top:403px;width:256px;height:27px;background:#fff;overflow:hidden"><div class="t" style="left:3px;top:1px;height:27px;line-height:27px;color:#000;font-size:13px;">Alex</div></div><div class="a" style="left:1336px;top:403px;width:132px;height:27px;background:#f0f0f0"></div><svg class="a" style="left:1389px;top:408px;" width="16" height="17" viewBox="0 0 16 17"><path d="M3 10.5 V1.5 H14.5 V9" fill="none" stroke="#606060" stroke-width="1"/><rect x="10.5" y="3" width="2" height="2" fill="#d03020"/><path d="M5 4.5 H8.5 M5 6.5 H7" stroke="#999" stroke-width="1"/><path d="M0 3.5 H2.5 M0 5.5 H2.5 M0 7.5 H2.5" stroke="#2f7cc0" stroke-width="1"/><circle cx="9.3" cy="10.5" r="5" fill="#1a9a5a" stroke="#fff" stroke-width="1"/><path d="M6.8 10.6 L8.8 12.6 L12 8.8" stroke="#fff" stroke-width="1.5" fill="none"/></svg><svg class="a" style="left:1406px;top:410px;" width="13" height="13" viewBox="0 0 13 13"><rect x="0.5" y="0.5" width="12" height="12" fill="#fbfbfb" stroke="#c6c6c6" stroke-width="1"/><rect x="1.5" y="1.5" width="10" height="10" fill="none" stroke="#f0f0f0" stroke-width="1"/><path d="M3.2 6.8 L5.6 10 L9.6 3" stroke="#a6a6a6" stroke-width="1.6" fill="none"/></svg><div class="a" style="left:1468px;top:403px;width:185px;height:27px;background:#f0f0f0"></div><svg class="a" style="left:1556px;top:410px;" width="13" height="13" viewBox="0 0 13 13"><rect x="0.5" y="0.5" width="12" height="12" fill="#fbfbfb" stroke="#c6c6c6" stroke-width="1"/><rect x="1.5" y="1.5" width="10" height="10" fill="none" stroke="#f0f0f0" stroke-width="1"/></svg><div class="a" style="left:83px;top:430px;width:75px;height:1px;background:#fff"></div><div class="a" style="left:158px;top:430px;width:1495px;height:1px;background:#f3f3f3"></div><div class="a" style="left:83px;top:431px;width:35px;height:27px;background:#c8d9ea"></div><div class="a" style="left:119px;top:431px;width:19px;height:27px;background:#d2d8de"></div><div class="a" style="left:139px;top:431px;width:19px;height:27px;background:#d2d8de"></div><div class="t" style="left:60px;top:432px;width:55px;height:27px;line-height:27px;color:#000;font-size:13px;text-align:right;">3</div><div class="a" style="left:158px;top:431px;width:20px;height:27px;background:#fff"></div><svg class="a" style="left:161px;top:438px;" width="16" height="12" viewBox="0 0 16 12"><rect x="3.5" y="1.3" width="11.5" height="8.5" fill="none" stroke="#2f7cc0" stroke-width="1.1"/><path d="M0.8 3.3 H3.5 M0.8 5.6 H3.5 M1.3 7.9 H3.5 M5.5 4.3 H9.3 M5.5 6.5 H8.3" stroke="#2f7cc0" stroke-width="1"/><rect x="11.2" y="3" width="2" height="2" fill="#2f7cc0"/></svg><div class="a" style="left:178px;top:431px;width:25px;height:27px;background:#fff"></div><div class="a" style="left:205px;top:431px;width:173px;height:27px;background:#fff"></div><div class="t" style="left:207px;top:432px;height:27px;line-height:27px;color:#000;font-size:13px;">Adele Vance</div><div class="a" style="left:380px;top:431px;width:23px;height:27px;background:#d4d4d4"></div><div class="a" style="left:403px;top:431px;width:64px;height:27px;background:#f0f0f0"></div><svg class="a" style="left:430px;top:438px;" width="13" height="13" viewBox="0 0 13 13"><rect x="0.5" y="0.5" width="12" height="12" fill="#fbfbfb" stroke="#c6c6c6" stroke-width="1"/><rect x="1.5" y="1.5" width="10" height="10" fill="none" stroke="#f0f0f0" stroke-width="1"/></svg><div class="a" style="left:467px;top:431px;width:256px;height:27px;background:#fff;overflow:hidden"><div class="t" style="left:3px;top:1px;height:27px;line-height:27px;color:#000;font-size:13px;">Alex</div></div><div class="a" style="left:723px;top:431px;width:77px;height:27px;background:#fff"></div><div class="t" style="left:723px;top:432px;width:74px;height:27px;line-height:27px;color:#000;font-size:13px;text-align:right;">2</div><div class="a" style="left:800px;top:431px;width:104px;height:27px;background:#fff"></div><svg class="a" style="left:804px;top:436px;" width="17" height="17" viewBox="0 0 17 17"><path d="M0 3.5 H2 M0 5.5 H2 M0 7.5 H2" stroke="#2f7cc0" stroke-width="1"/><path d="M2.5 10 V1.5 H13.5 V5" fill="none" stroke="#555" stroke-width="1"/><path d="M2.5 9.5 H4" stroke="#555" stroke-width="1"/><rect x="10" y="3" width="2" height="2" fill="#d03020"/><path d="M4 4.5 H8" stroke="#999" stroke-width="1"/><path d="M15 5.8 L7.2 6.8 L5.6 10.6 L9.6 10.2 L4.6 15 L14.4 8.4 L10.4 8.6 Z" fill="#e8a838" stroke="#e8a838" stroke-width="0.9" stroke-linejoin="round"/></svg><div class="t" style="left:821px;top:432px;height:27px;line-height:27px;color:#000;font-size:13px;">Action</div><div class="a" style="left:904px;top:431px;width:176px;height:27px;background:#fff"></div><div class="t" style="left:907px;top:432px;height:27px;line-height:27px;color:#000;font-size:13px;">Stop Processing Rules</div><div class="a" style="left:1080px;top:431px;width:256px;height:27px;background:#f0f0f0"></div><svg class="a" style="left:1203px;top:438px;" width="13" height="13" viewBox="0 0 13 13"><rect x="0.5" y="0.5" width="12" height="12" fill="#fbfbfb" stroke="#c6c6c6" stroke-width="1"/><rect x="1.5" y="1.5" width="10" height="10" fill="none" stroke="#f0f0f0" stroke-width="1"/><path d="M3.2 6.8 L5.6 10 L9.6 3" stroke="#a6a6a6" stroke-width="1.6" fill="none"/></svg><div class="a" style="left:1336px;top:431px;width:132px;height:27px;background:#f0f0f0"></div><svg class="a" style="left:1389px;top:436px;" width="16" height="17" viewBox="0 0 16 17"><path d="M3 10.5 V1.5 H14.5 V9" fill="none" stroke="#606060" stroke-width="1"/><rect x="10.5" y="3" width="2" height="2" fill="#d03020"/><path d="M5 4.5 H8.5 M5 6.5 H7" stroke="#999" stroke-width="1"/><path d="M0 3.5 H2.5 M0 5.5 H2.5 M0 7.5 H2.5" stroke="#2f7cc0" stroke-width="1"/><circle cx="9.3" cy="10.5" r="5" fill="#1a9a5a" stroke="#fff" stroke-width="1"/><path d="M6.8 10.6 L8.8 12.6 L12 8.8" stroke="#fff" stroke-width="1.5" fill="none"/></svg><svg class="a" style="left:1406px;top:438px;" width="13" height="13" viewBox="0 0 13 13"><rect x="0.5" y="0.5" width="12" height="12" fill="#fbfbfb" stroke="#c6c6c6" stroke-width="1"/><rect x="1.5" y="1.5" width="10" height="10" fill="none" stroke="#f0f0f0" stroke-width="1"/><path d="M3.2 6.8 L5.6 10 L9.6 3" stroke="#a6a6a6" stroke-width="1.6" fill="none"/></svg><div class="a" style="left:1468px;top:431px;width:185px;height:27px;background:#f0f0f0"></div><svg class="a" style="left:1556px;top:438px;" width="13" height="13" viewBox="0 0 13 13"><rect x="0.5" y="0.5" width="12" height="12" fill="#fbfbfb" stroke="#c6c6c6" stroke-width="1"/><rect x="1.5" y="1.5" width="10" height="10" fill="none" stroke="#f0f0f0" stroke-width="1"/></svg><div class="a" style="left:63px;top:458px;width:1590px;height:1px;background:#6e6e6e"></div><div class="a" style="left:63px;top:459px;width:55px;height:27px;background:#8fa9c6"></div><div class="a" style="left:118px;top:459px;width:20px;height:27px;background:#b8c4d1"></div><div class="a" style="left:138px;top:459px;width:20px;height:27px;background:#8fa9c6"></div><div class="a" style="left:118px;top:459px;width:1px;height:27px;background:#fff;opacity:0.8"></div><div class="a" style="left:138px;top:459px;width:1px;height:27px;background:#fff;opacity:0.8"></div><div class="a" style="left:68px;top:465px;width:16px;height:16px;background:#2c3b52;border:1px solid #eef2f6;box-sizing:border-box"></div><div class="a" style="left:71px;top:472px;width:10px;height:2px;background:#e8eef4"></div><div class="t" style="left:60px;top:460px;width:55px;height:27px;line-height:27px;color:#000;font-weight:bold;font-size:13px;text-align:right;">2</div><div class="t" style="left:120px;top:460px;width:35px;height:27px;line-height:27px;color:#000;font-weight:bold;font-size:13px;text-align:right;">3</div><div class="a" style="left:158px;top:459px;width:20px;height:27px;background:#fff"></div><svg class="a" style="left:160px;top:464px;" width="17" height="17" viewBox="0 0 17 17"><path d="M2 1 H7.5 L9 3 H16 V6.3 H5.2 V8 H2 Z" fill="#2f7cc0"/><rect x="5.5" y="7.2" width="10.5" height="7.5" fill="none" stroke="#2f7cc0" stroke-width="1.1"/><path d="M1.5 9.5 H5.5 M2 11.5 H5.5 M2.5 13.5 H5.5 M7.5 10.2 H11 M7.5 12.3 H10" stroke="#2f7cc0" stroke-width="1"/><rect x="12.6" y="9" width="2" height="2" fill="#2f7cc0"/></svg><div class="a" style="left:178px;top:459px;width:25px;height:27px;background:#d8f6d8"></div><svg class="a" style="left:182px;top:464px;" width="14" height="17" viewBox="0 0 14 17"><rect x="0" y="1" width="14" height="2.2" fill="#707070"/><rect x="5" y="0" width="4" height="1.5" fill="#707070"/><path d="M1 4 H13 V16.2 H1Z" fill="#707070"/><path d="M4 6 V14.2 M7 6 V14.2 M10 6 V14.2" stroke="#fff" stroke-width="1.8"/></svg><div class="a" style="left:200px;top:468px;width:1px;height:11px;background:#3a2020"></div><div class="a" style="left:205px;top:459px;width:173px;height:27px;background:#fff"></div><div class="t" style="left:207px;top:460px;height:27px;line-height:27px;color:#000;font-weight:bold;font-size:13px;">Adele Vance</div><div class="a" style="left:380px;top:459px;width:23px;height:27px;background:#d4d4d4"></div><div class="a" style="left:403px;top:459px;width:64px;height:27px;background:#f0f0f0"></div><svg class="a" style="left:430px;top:466px;" width="13" height="13" viewBox="0 0 13 13"><rect x="0.5" y="0.5" width="12" height="12" fill="#fbfbfb" stroke="#c6c6c6" stroke-width="1"/><rect x="1.5" y="1.5" width="10" height="10" fill="none" stroke="#f0f0f0" stroke-width="1"/></svg><div class="a" style="left:467px;top:459px;width:256px;height:27px;background:#fff;overflow:hidden"><div class="t" style="left:3px;top:1px;height:27px;line-height:27px;color:#000;font-weight:bold;font-size:13px;">Spam</div></div><div class="a" style="left:723px;top:459px;width:77px;height:27px;background:#fff"></div><div class="t" style="left:723px;top:460px;width:74px;height:27px;line-height:27px;color:#000;font-weight:bold;font-size:13px;text-align:right;">3</div><div class="a" style="left:800px;top:459px;width:536px;height:27px;background:#d6d6d6"></div><div class="a" style="left:1336px;top:459px;width:132px;height:27px;background:#f0f0f0"></div><svg class="a" style="left:1389px;top:464px;" width="16" height="17" viewBox="0 0 16 17"><path d="M3 10.5 V1.5 H14.5 V9" fill="none" stroke="#606060" stroke-width="1"/><rect x="10.5" y="3" width="2" height="2" fill="#d03020"/><path d="M5 4.5 H8.5 M5 6.5 H7" stroke="#999" stroke-width="1"/><path d="M0 3.5 H2.5 M0 5.5 H2.5 M0 7.5 H2.5" stroke="#2f7cc0" stroke-width="1"/><circle cx="9.3" cy="10.5" r="5" fill="#1a9a5a" stroke="#fff" stroke-width="1"/><path d="M6.8 10.6 L8.8 12.6 L12 8.8" stroke="#fff" stroke-width="1.5" fill="none"/></svg><svg class="a" style="left:1406px;top:466px;" width="13" height="13" viewBox="0 0 13 13"><rect x="0.5" y="0.5" width="12" height="12" fill="#fbfbfb" stroke="#c6c6c6" stroke-width="1"/><rect x="1.5" y="1.5" width="10" height="10" fill="none" stroke="#f0f0f0" stroke-width="1"/><path d="M3.2 6.8 L5.6 10 L9.6 3" stroke="#a6a6a6" stroke-width="1.6" fill="none"/></svg><div class="a" style="left:1468px;top:459px;width:185px;height:27px;background:#f0f0f0"></div><svg class="a" style="left:1556px;top:466px;" width="13" height="13" viewBox="0 0 13 13"><rect x="0.5" y="0.5" width="12" height="12" fill="#fbfbfb" stroke="#c6c6c6" stroke-width="1"/><rect x="1.5" y="1.5" width="10" height="10" fill="none" stroke="#f0f0f0" stroke-width="1"/></svg><div class="a" style="left:63px;top:486px;width:1590px;height:1px;background:#6e6e6e"></div><div class="a" style="left:83px;top:487px;width:35px;height:27px;background:#c8d9ea"></div><div class="a" style="left:119px;top:487px;width:19px;height:27px;background:#d2d8de"></div><div class="a" style="left:139px;top:487px;width:19px;height:27px;background:#d2d8de"></div><div class="t" style="left:60px;top:488px;width:55px;height:27px;line-height:27px;color:#000;font-size:13px;text-align:right;">3</div><div class="a" style="left:158px;top:487px;width:20px;height:27px;background:#fff"></div><svg class="a" style="left:161px;top:494px;" width="16" height="12" viewBox="0 0 16 12"><rect x="3.5" y="1.3" width="11.5" height="8.5" fill="none" stroke="#2f7cc0" stroke-width="1.1"/><path d="M0.8 3.3 H3.5 M0.8 5.6 H3.5 M1.3 7.9 H3.5 M5.5 4.3 H9.3 M5.5 6.5 H8.3" stroke="#2f7cc0" stroke-width="1"/><rect x="11.2" y="3" width="2" height="2" fill="#2f7cc0"/></svg><div class="a" style="left:178px;top:487px;width:25px;height:27px;background:#d8f6d8"></div><svg class="a" style="left:182px;top:492px;" width="14" height="17" viewBox="0 0 14 17"><rect x="0" y="1" width="14" height="2.2" fill="#707070"/><rect x="5" y="0" width="4" height="1.5" fill="#707070"/><path d="M1 4 H13 V16.2 H1Z" fill="#707070"/><path d="M4 6 V14.2 M7 6 V14.2 M10 6 V14.2" stroke="#fff" stroke-width="1.8"/></svg><div class="a" style="left:200px;top:496px;width:1px;height:11px;background:#3a2020"></div><div class="a" style="left:205px;top:487px;width:173px;height:27px;background:#fff"></div><div class="t" style="left:207px;top:488px;height:27px;line-height:27px;color:#000;font-size:13px;">Adele Vance</div><div class="a" style="left:380px;top:487px;width:23px;height:27px;background:#d4d4d4"></div><div class="a" style="left:403px;top:487px;width:64px;height:27px;background:#f0f0f0"></div><svg class="a" style="left:430px;top:494px;" width="13" height="13" viewBox="0 0 13 13"><rect x="0.5" y="0.5" width="12" height="12" fill="#fbfbfb" stroke="#c6c6c6" stroke-width="1"/><rect x="1.5" y="1.5" width="10" height="10" fill="none" stroke="#f0f0f0" stroke-width="1"/></svg><div class="a" style="left:467px;top:487px;width:256px;height:27px;background:#fff;overflow:hidden"><div class="t" style="left:3px;top:1px;height:27px;line-height:27px;color:#000;font-size:13px;">Spam</div></div><div class="a" style="left:723px;top:487px;width:77px;height:27px;background:#fff"></div><div class="t" style="left:723px;top:488px;width:74px;height:27px;line-height:27px;color:#000;font-size:13px;text-align:right;">3</div><div class="a" style="left:800px;top:487px;width:104px;height:27px;background:#fff"></div><svg class="a" style="left:804px;top:492px;" width="17" height="17" viewBox="0 0 17 17"><path d="M0 3.5 H2 M0 5.5 H2 M0 7.5 H2" stroke="#2f7cc0" stroke-width="1"/><path d="M2.5 10 V1.5 H13.5 V5" fill="none" stroke="#555" stroke-width="1"/><path d="M2.5 9.5 H4" stroke="#555" stroke-width="1"/><rect x="10" y="3" width="2" height="2" fill="#d03020"/><path d="M4 4.5 H8" stroke="#999" stroke-width="1"/><circle cx="9.3" cy="10.7" r="4.6" fill="#2f7cc0" stroke="#fff" stroke-width="0.8"/><path d="M7 9.7 H11.6 M7 11.7 H11.6" stroke="#fff" stroke-width="1.1"/></svg><div class="t" style="left:821px;top:488px;height:27px;line-height:27px;color:#000;font-size:13px;">Condition</div><div class="a" style="left:904px;top:487px;width:176px;height:27px;background:#fff"></div><div class="t" style="left:907px;top:488px;height:27px;line-height:27px;color:#000;font-size:13px;">Subject Contains</div><div class="a" style="left:1080px;top:487px;width:256px;height:27px;background:#fff;overflow:hidden"><div class="t" style="left:3px;top:1px;height:27px;line-height:27px;color:#000;font-size:13px;">free</div></div><div class="a" style="left:1336px;top:487px;width:132px;height:27px;background:#f0f0f0"></div><svg class="a" style="left:1389px;top:492px;" width="16" height="17" viewBox="0 0 16 17"><path d="M3 10.5 V1.5 H14.5 V9" fill="none" stroke="#606060" stroke-width="1"/><rect x="10.5" y="3" width="2" height="2" fill="#d03020"/><path d="M5 4.5 H8.5 M5 6.5 H7" stroke="#999" stroke-width="1"/><path d="M0 3.5 H2.5 M0 5.5 H2.5 M0 7.5 H2.5" stroke="#2f7cc0" stroke-width="1"/><circle cx="9.3" cy="10.5" r="5" fill="#1a9a5a" stroke="#fff" stroke-width="1"/><path d="M6.8 10.6 L8.8 12.6 L12 8.8" stroke="#fff" stroke-width="1.5" fill="none"/></svg><svg class="a" style="left:1406px;top:494px;" width="13" height="13" viewBox="0 0 13 13"><rect x="0.5" y="0.5" width="12" height="12" fill="#fbfbfb" stroke="#c6c6c6" stroke-width="1"/><rect x="1.5" y="1.5" width="10" height="10" fill="none" stroke="#f0f0f0" stroke-width="1"/><path d="M3.2 6.8 L5.6 10 L9.6 3" stroke="#a6a6a6" stroke-width="1.6" fill="none"/></svg><div class="a" style="left:1468px;top:487px;width:185px;height:27px;background:#f0f0f0"></div><svg class="a" style="left:1556px;top:494px;" width="13" height="13" viewBox="0 0 13 13"><rect x="0.5" y="0.5" width="12" height="12" fill="#fbfbfb" stroke="#c6c6c6" stroke-width="1"/><rect x="1.5" y="1.5" width="10" height="10" fill="none" stroke="#f0f0f0" stroke-width="1"/></svg><div class="a" style="left:83px;top:514px;width:75px;height:1px;background:#fff"></div><div class="a" style="left:158px;top:514px;width:1495px;height:1px;background:#f3f3f3"></div><div class="a" style="left:83px;top:515px;width:35px;height:27px;background:#6aa6e0"></div><div class="a" style="left:119px;top:515px;width:19px;height:27px;background:#6aa6e0"></div><div class="a" style="left:139px;top:515px;width:19px;height:27px;background:#6aa6e0"></div><div class="t" style="left:60px;top:516px;width:55px;height:27px;line-height:27px;color:#fff;font-size:13px;text-align:right;">3</div><div class="a" style="left:158px;top:515px;width:20px;height:27px;background:#0078d7"></div><svg class="a" style="left:161px;top:522px;" width="16" height="12" viewBox="0 0 16 12"><rect x="3.5" y="1.3" width="11.5" height="8.5" fill="none" stroke="#fff" stroke-width="1.1"/><path d="M0.8 3.3 H3.5 M0.8 5.6 H3.5 M1.3 7.9 H3.5 M5.5 4.3 H9.3 M5.5 6.5 H8.3" stroke="#fff" stroke-width="1"/><rect x="11.2" y="3" width="2" height="2" fill="#fff"/></svg><div class="a" style="left:178px;top:515px;width:25px;height:27px;background:#5aa6d0"></div><svg class="a" style="left:182px;top:520px;" width="14" height="17" viewBox="0 0 14 17"><rect x="0" y="1" width="14" height="2.2" fill="#707070"/><rect x="5" y="0" width="4" height="1.5" fill="#707070"/><path d="M1 4 H13 V16.2 H1Z" fill="#707070"/><path d="M4 6 V14.2 M7 6 V14.2 M10 6 V14.2" stroke="#fff" stroke-width="1.8"/></svg><div class="a" style="left:200px;top:524px;width:1px;height:11px;background:#cde"></div><div class="a" style="left:205px;top:515px;width:173px;height:27px;background:#0078d7"></div><div class="t" style="left:207px;top:516px;height:27px;line-height:27px;color:#fff;font-size:13px;">Adele Vance</div><div class="a" style="left:380px;top:515px;width:23px;height:27px;background:#6aa3d8"></div><div class="a" style="left:403px;top:515px;width:64px;height:27px;background:#7ab6e6"></div><svg class="a" style="left:430px;top:522px;" width="13" height="13" viewBox="0 0 13 13"><rect x="0.5" y="0.5" width="12" height="12" fill="#fbfbfb" stroke="#c6c6c6" stroke-width="1"/><rect x="1.5" y="1.5" width="10" height="10" fill="none" stroke="#f0f0f0" stroke-width="1"/></svg><div class="a" style="left:467px;top:515px;width:256px;height:27px;background:#0078d7;overflow:hidden"><div class="t" style="left:3px;top:1px;height:27px;line-height:27px;color:#fff;font-size:13px;">Spam</div></div><div class="a" style="left:723px;top:515px;width:77px;height:27px;background:#0078d7"></div><div class="t" style="left:723px;top:516px;width:74px;height:27px;line-height:27px;color:#fff;font-size:13px;text-align:right;">3</div><div class="a" style="left:800px;top:515px;width:104px;height:27px;background:#0078d7"></div><svg class="a" style="left:804px;top:520px;" width="17" height="17" viewBox="0 0 17 17"><rect x="-0.5" y="0.5" width="15" height="11" fill="#fff" opacity="0.95"/><path d="M15 5.8 L7.2 6.8 L5.6 10.6 L9.6 10.2 L4.6 15 L14.4 8.4 L10.4 8.6 Z" fill="#fff" stroke="#fff" stroke-width="2.2"/><path d="M0 3.5 H2 M0 5.5 H2 M0 7.5 H2" stroke="#2f7cc0" stroke-width="1"/><path d="M2.5 10 V1.5 H13.5 V5" fill="none" stroke="#555" stroke-width="1"/><path d="M2.5 9.5 H4" stroke="#555" stroke-width="1"/><rect x="10" y="3" width="2" height="2" fill="#d03020"/><path d="M4 4.5 H8" stroke="#999" stroke-width="1"/><path d="M15 5.8 L7.2 6.8 L5.6 10.6 L9.6 10.2 L4.6 15 L14.4 8.4 L10.4 8.6 Z" fill="#e8a838" stroke="#e8a838" stroke-width="0.9" stroke-linejoin="round"/></svg><div class="t" style="left:821px;top:516px;height:27px;line-height:27px;color:#fff;font-size:13px;">Action</div><div class="a" style="left:904px;top:515px;width:176px;height:27px;background:#0078d7"></div><div class="t" style="left:907px;top:516px;height:27px;line-height:27px;color:#fff;font-size:13px;">Delete</div><div class="a" style="left:1080px;top:515px;width:256px;height:27px;background:#7ab6e6"></div><svg class="a" style="left:1203px;top:522px;" width="13" height="13" viewBox="0 0 13 13"><rect x="0.5" y="0.5" width="12" height="12" fill="#fbfbfb" stroke="#c6c6c6" stroke-width="1"/><rect x="1.5" y="1.5" width="10" height="10" fill="none" stroke="#f0f0f0" stroke-width="1"/><path d="M3.2 6.8 L5.6 10 L9.6 3" stroke="#a6a6a6" stroke-width="1.6" fill="none"/></svg><div class="a" style="left:1336px;top:515px;width:132px;height:27px;background:#7ab6e6"></div><svg class="a" style="left:1389px;top:520px;" width="16" height="17" viewBox="0 0 16 17"><path d="M3 10.5 V1.5 H14.5 V9" fill="none" stroke="#606060" stroke-width="1"/><rect x="10.5" y="3" width="2" height="2" fill="#d03020"/><path d="M5 4.5 H8.5 M5 6.5 H7" stroke="#999" stroke-width="1"/><path d="M0 3.5 H2.5 M0 5.5 H2.5 M0 7.5 H2.5" stroke="#2f7cc0" stroke-width="1"/><circle cx="9.3" cy="10.5" r="5" fill="#1a9a5a" stroke="#fff" stroke-width="1"/><path d="M6.8 10.6 L8.8 12.6 L12 8.8" stroke="#fff" stroke-width="1.5" fill="none"/></svg><svg class="a" style="left:1406px;top:522px;" width="13" height="13" viewBox="0 0 13 13"><rect x="0.5" y="0.5" width="12" height="12" fill="#fbfbfb" stroke="#c6c6c6" stroke-width="1"/><rect x="1.5" y="1.5" width="10" height="10" fill="none" stroke="#f0f0f0" stroke-width="1"/><path d="M3.2 6.8 L5.6 10 L9.6 3" stroke="#a6a6a6" stroke-width="1.6" fill="none"/></svg><div class="a" style="left:1468px;top:515px;width:185px;height:27px;background:#7ab6e6"></div><svg class="a" style="left:1556px;top:522px;" width="13" height="13" viewBox="0 0 13 13"><rect x="0.5" y="0.5" width="12" height="12" fill="#fbfbfb" stroke="#c6c6c6" stroke-width="1"/><rect x="1.5" y="1.5" width="10" height="10" fill="none" stroke="#f0f0f0" stroke-width="1"/></svg><div class="a" style="left:83px;top:542px;width:75px;height:1px;background:#fff"></div><div class="a" style="left:158px;top:542px;width:1495px;height:1px;background:#f3f3f3"></div><div class="a" style="left:83px;top:543px;width:35px;height:27px;background:#c8d9ea"></div><div class="a" style="left:119px;top:543px;width:19px;height:27px;background:#d2d8de"></div><div class="a" style="left:139px;top:543px;width:19px;height:27px;background:#d2d8de"></div><div class="t" style="left:60px;top:544px;width:55px;height:27px;line-height:27px;color:#000;font-size:13px;text-align:right;">3</div><div class="a" style="left:158px;top:543px;width:20px;height:27px;background:#fff"></div><svg class="a" style="left:161px;top:550px;" width="16" height="12" viewBox="0 0 16 12"><rect x="3.5" y="1.3" width="11.5" height="8.5" fill="none" stroke="#2f7cc0" stroke-width="1.1"/><path d="M0.8 3.3 H3.5 M0.8 5.6 H3.5 M1.3 7.9 H3.5 M5.5 4.3 H9.3 M5.5 6.5 H8.3" stroke="#2f7cc0" stroke-width="1"/><rect x="11.2" y="3" width="2" height="2" fill="#2f7cc0"/></svg><div class="a" style="left:178px;top:543px;width:25px;height:27px;background:#d8f6d8"></div><svg class="a" style="left:182px;top:548px;" width="14" height="17" viewBox="0 0 14 17"><rect x="0" y="1" width="14" height="2.2" fill="#707070"/><rect x="5" y="0" width="4" height="1.5" fill="#707070"/><path d="M1 4 H13 V16.2 H1Z" fill="#707070"/><path d="M4 6 V14.2 M7 6 V14.2 M10 6 V14.2" stroke="#fff" stroke-width="1.8"/></svg><div class="a" style="left:200px;top:552px;width:1px;height:11px;background:#3a2020"></div><div class="a" style="left:205px;top:543px;width:173px;height:27px;background:#fff"></div><div class="t" style="left:207px;top:544px;height:27px;line-height:27px;color:#000;font-size:13px;">Adele Vance</div><div class="a" style="left:380px;top:543px;width:23px;height:27px;background:#d4d4d4"></div><div class="a" style="left:403px;top:543px;width:64px;height:27px;background:#f0f0f0"></div><svg class="a" style="left:430px;top:550px;" width="13" height="13" viewBox="0 0 13 13"><rect x="0.5" y="0.5" width="12" height="12" fill="#fbfbfb" stroke="#c6c6c6" stroke-width="1"/><rect x="1.5" y="1.5" width="10" height="10" fill="none" stroke="#f0f0f0" stroke-width="1"/></svg><div class="a" style="left:467px;top:543px;width:256px;height:27px;background:#fff;overflow:hidden"><div class="t" style="left:3px;top:1px;height:27px;line-height:27px;color:#000;font-size:13px;">Spam</div></div><div class="a" style="left:723px;top:543px;width:77px;height:27px;background:#fff"></div><div class="t" style="left:723px;top:544px;width:74px;height:27px;line-height:27px;color:#000;font-size:13px;text-align:right;">3</div><div class="a" style="left:800px;top:543px;width:104px;height:27px;background:#fff"></div><svg class="a" style="left:804px;top:548px;" width="17" height="17" viewBox="0 0 17 17"><path d="M0 3.5 H2 M0 5.5 H2 M0 7.5 H2" stroke="#2f7cc0" stroke-width="1"/><path d="M2.5 10 V1.5 H13.5 V5" fill="none" stroke="#555" stroke-width="1"/><path d="M2.5 9.5 H4" stroke="#555" stroke-width="1"/><rect x="10" y="3" width="2" height="2" fill="#d03020"/><path d="M4 4.5 H8" stroke="#999" stroke-width="1"/><path d="M15 5.8 L7.2 6.8 L5.6 10.6 L9.6 10.2 L4.6 15 L14.4 8.4 L10.4 8.6 Z" fill="#e8a838" stroke="#e8a838" stroke-width="0.9" stroke-linejoin="round"/></svg><div class="t" style="left:821px;top:544px;height:27px;line-height:27px;color:#000;font-size:13px;">Action</div><div class="a" style="left:904px;top:543px;width:176px;height:27px;background:#fff"></div><div class="t" style="left:907px;top:544px;height:27px;line-height:27px;color:#000;font-size:13px;">Stop Processing Rules</div><div class="a" style="left:1080px;top:543px;width:256px;height:27px;background:#f0f0f0"></div><svg class="a" style="left:1203px;top:550px;" width="13" height="13" viewBox="0 0 13 13"><rect x="0.5" y="0.5" width="12" height="12" fill="#fbfbfb" stroke="#c6c6c6" stroke-width="1"/><rect x="1.5" y="1.5" width="10" height="10" fill="none" stroke="#f0f0f0" stroke-width="1"/><path d="M3.2 6.8 L5.6 10 L9.6 3" stroke="#a6a6a6" stroke-width="1.6" fill="none"/></svg><div class="a" style="left:1336px;top:543px;width:132px;height:27px;background:#f0f0f0"></div><svg class="a" style="left:1389px;top:548px;" width="16" height="17" viewBox="0 0 16 17"><path d="M3 10.5 V1.5 H14.5 V9" fill="none" stroke="#606060" stroke-width="1"/><rect x="10.5" y="3" width="2" height="2" fill="#d03020"/><path d="M5 4.5 H8.5 M5 6.5 H7" stroke="#999" stroke-width="1"/><path d="M0 3.5 H2.5 M0 5.5 H2.5 M0 7.5 H2.5" stroke="#2f7cc0" stroke-width="1"/><circle cx="9.3" cy="10.5" r="5" fill="#1a9a5a" stroke="#fff" stroke-width="1"/><path d="M6.8 10.6 L8.8 12.6 L12 8.8" stroke="#fff" stroke-width="1.5" fill="none"/></svg><svg class="a" style="left:1406px;top:550px;" width="13" height="13" viewBox="0 0 13 13"><rect x="0.5" y="0.5" width="12" height="12" fill="#fbfbfb" stroke="#c6c6c6" stroke-width="1"/><rect x="1.5" y="1.5" width="10" height="10" fill="none" stroke="#f0f0f0" stroke-width="1"/><path d="M3.2 6.8 L5.6 10 L9.6 3" stroke="#a6a6a6" stroke-width="1.6" fill="none"/></svg><div class="a" style="left:1468px;top:543px;width:185px;height:27px;background:#f0f0f0"></div><svg class="a" style="left:1556px;top:550px;" width="13" height="13" viewBox="0 0 13 13"><rect x="0.5" y="0.5" width="12" height="12" fill="#fbfbfb" stroke="#c6c6c6" stroke-width="1"/><rect x="1.5" y="1.5" width="10" height="10" fill="none" stroke="#f0f0f0" stroke-width="1"/></svg><div class="a" style="left:45px;top:570px;width:1608px;height:1px;background:#6e6e6e"></div><div class="a" style="left:45px;top:571px;width:73px;height:27px;background:#8fa9c6"></div><div class="a" style="left:118px;top:571px;width:20px;height:27px;background:#b8c4d1"></div><div class="a" style="left:138px;top:571px;width:20px;height:27px;background:#8fa9c6"></div><div class="a" style="left:118px;top:571px;width:1px;height:27px;background:#fff;opacity:0.8"></div><div class="a" style="left:138px;top:571px;width:1px;height:27px;background:#fff;opacity:0.8"></div><div class="a" style="left:50px;top:577px;width:16px;height:16px;background:#2c3b52;border:1px solid #eef2f6;box-sizing:border-box"></div><div class="a" style="left:53px;top:584px;width:10px;height:2px;background:#e8eef4"></div><div class="t" style="left:60px;top:572px;width:55px;height:27px;line-height:27px;color:#000;font-weight:bold;font-size:13px;text-align:right;">1</div><div class="t" style="left:120px;top:572px;width:35px;height:27px;line-height:27px;color:#000;font-weight:bold;font-size:13px;text-align:right;">8</div><div class="a" style="left:158px;top:571px;width:20px;height:27px;background:#fff"></div><svg class="a" style="left:160px;top:577px;" width="18" height="16" viewBox="0 0 18 16"><circle cx="8.8" cy="4.1" r="4.15" fill="#2f7cc0"/><path d="M2.1 14 V13 Q2.1 9.6 6.2 9.6 H11.8 Q15.9 9.6 15.9 13 V14 Z" fill="#2f7cc0"/></svg><div class="a" style="left:178px;top:571px;width:25px;height:27px;background:#fff"></div><div class="a" style="left:205px;top:571px;width:173px;height:27px;background:#fff"></div><div class="t" style="left:207px;top:572px;height:27px;line-height:27px;color:#000;font-weight:bold;font-size:13px;">Alex Wilber</div><div class="a" style="left:380px;top:571px;width:23px;height:27px;background:#d4d4d4"></div><div class="a" style="left:403px;top:571px;width:1250px;height:27px;background:#d6d6d6"></div><div class="a" style="left:1653px;top:571px;width:197px;height:28px;background:#fff"></div><div class="a" style="left:45px;top:598px;width:1608px;height:1px;background:#6e6e6e"></div><div class="a" style="left:63px;top:599px;width:55px;height:27px;background:#8fa9c6"></div><div class="a" style="left:118px;top:599px;width:20px;height:27px;background:#b8c4d1"></div><div class="a" style="left:138px;top:599px;width:20px;height:27px;background:#8fa9c6"></div><div class="a" style="left:118px;top:599px;width:1px;height:27px;background:#fff;opacity:0.8"></div><div class="a" style="left:138px;top:599px;width:1px;height:27px;background:#fff;opacity:0.8"></div><div class="a" style="left:68px;top:605px;width:16px;height:16px;background:#2c3b52;border:1px solid #eef2f6;box-sizing:border-box"></div><div class="a" style="left:71px;top:612px;width:10px;height:2px;background:#e8eef4"></div><div class="t" style="left:60px;top:600px;width:55px;height:27px;line-height:27px;color:#000;font-weight:bold;font-size:13px;text-align:right;">2</div><div class="t" style="left:120px;top:600px;width:35px;height:27px;line-height:27px;color:#000;font-weight:bold;font-size:13px;text-align:right;">3</div><div class="a" style="left:158px;top:599px;width:20px;height:27px;background:#fff"></div><svg class="a" style="left:160px;top:604px;" width="17" height="17" viewBox="0 0 17 17"><path d="M2 1 H7.5 L9 3 H16 V6.3 H5.2 V8 H2 Z" fill="#2f7cc0"/><rect x="5.5" y="7.2" width="10.5" height="7.5" fill="none" stroke="#2f7cc0" stroke-width="1.1"/><path d="M1.5 9.5 H5.5 M2 11.5 H5.5 M2.5 13.5 H5.5 M7.5 10.2 H11 M7.5 12.3 H10" stroke="#2f7cc0" stroke-width="1"/><rect x="12.6" y="9" width="2" height="2" fill="#2f7cc0"/></svg><div class="a" style="left:178px;top:599px;width:25px;height:27px;background:#fff"></div><div class="a" style="left:205px;top:599px;width:173px;height:27px;background:#fff"></div><div class="t" style="left:207px;top:600px;height:27px;line-height:27px;color:#000;font-weight:bold;font-size:13px;">Alex Wilber</div><div class="a" style="left:380px;top:599px;width:23px;height:27px;background:#d4d4d4"></div><div class="a" style="left:403px;top:599px;width:64px;height:27px;background:#f0f0f0"></div><svg class="a" style="left:430px;top:606px;" width="13" height="13" viewBox="0 0 13 13"><rect x="0.5" y="0.5" width="12" height="12" fill="#fbfbfb" stroke="#c6c6c6" stroke-width="1"/><rect x="1.5" y="1.5" width="10" height="10" fill="none" stroke="#f0f0f0" stroke-width="1"/></svg><div class="a" style="left:467px;top:599px;width:256px;height:27px;background:#fff;overflow:hidden"><div class="t" style="left:3px;top:1px;height:27px;line-height:27px;color:#000;font-weight:bold;font-size:13px;">Notifications</div></div><div class="a" style="left:723px;top:599px;width:77px;height:27px;background:#fff"></div><div class="t" style="left:723px;top:600px;width:74px;height:27px;line-height:27px;color:#000;font-weight:bold;font-size:13px;text-align:right;">1</div><div class="a" style="left:800px;top:599px;width:536px;height:27px;background:#d6d6d6"></div><div class="a" style="left:1336px;top:599px;width:132px;height:27px;background:#f0f0f0"></div><svg class="a" style="left:1389px;top:604px;" width="16" height="17" viewBox="0 0 16 17"><path d="M3 10.5 V1.5 H14.5 V9" fill="none" stroke="#606060" stroke-width="1"/><rect x="10.5" y="3" width="2" height="2" fill="#d03020"/><path d="M5 4.5 H8.5 M5 6.5 H7" stroke="#999" stroke-width="1"/><path d="M0 3.5 H2.5 M0 5.5 H2.5 M0 7.5 H2.5" stroke="#2f7cc0" stroke-width="1"/><circle cx="9.3" cy="10.5" r="5" fill="#1a9a5a" stroke="#fff" stroke-width="1"/><path d="M6.8 10.6 L8.8 12.6 L12 8.8" stroke="#fff" stroke-width="1.5" fill="none"/></svg><svg class="a" style="left:1406px;top:606px;" width="13" height="13" viewBox="0 0 13 13"><rect x="0.5" y="0.5" width="12" height="12" fill="#fbfbfb" stroke="#c6c6c6" stroke-width="1"/><rect x="1.5" y="1.5" width="10" height="10" fill="none" stroke="#f0f0f0" stroke-width="1"/><path d="M3.2 6.8 L5.6 10 L9.6 3" stroke="#a6a6a6" stroke-width="1.6" fill="none"/></svg><div class="a" style="left:1468px;top:599px;width:185px;height:27px;background:#f0f0f0"></div><svg class="a" style="left:1556px;top:606px;" width="13" height="13" viewBox="0 0 13 13"><rect x="0.5" y="0.5" width="12" height="12" fill="#fbfbfb" stroke="#c6c6c6" stroke-width="1"/><rect x="1.5" y="1.5" width="10" height="10" fill="none" stroke="#f0f0f0" stroke-width="1"/></svg><div class="a" style="left:63px;top:626px;width:1590px;height:1px;background:#6e6e6e"></div><div class="a" style="left:83px;top:627px;width:35px;height:27px;background:#c8d9ea"></div><div class="a" style="left:119px;top:627px;width:19px;height:27px;background:#d2d8de"></div><div class="a" style="left:139px;top:627px;width:19px;height:27px;background:#d2d8de"></div><div class="t" style="left:60px;top:628px;width:55px;height:27px;line-height:27px;color:#000;font-size:13px;text-align:right;">3</div><div class="a" style="left:158px;top:627px;width:20px;height:27px;background:#fff"></div><svg class="a" style="left:161px;top:634px;" width="16" height="12" viewBox="0 0 16 12"><rect x="3.5" y="1.3" width="11.5" height="8.5" fill="none" stroke="#2f7cc0" stroke-width="1.1"/><path d="M0.8 3.3 H3.5 M0.8 5.6 H3.5 M1.3 7.9 H3.5 M5.5 4.3 H9.3 M5.5 6.5 H8.3" stroke="#2f7cc0" stroke-width="1"/><rect x="11.2" y="3" width="2" height="2" fill="#2f7cc0"/></svg><div class="a" style="left:178px;top:627px;width:25px;height:27px;background:#fff"></div><div class="a" style="left:205px;top:627px;width:173px;height:27px;background:#fff"></div><div class="t" style="left:207px;top:628px;height:27px;line-height:27px;color:#000;font-size:13px;">Alex Wilber</div><div class="a" style="left:380px;top:627px;width:23px;height:27px;background:#d4d4d4"></div><div class="a" style="left:403px;top:627px;width:64px;height:27px;background:#f0f0f0"></div><svg class="a" style="left:430px;top:634px;" width="13" height="13" viewBox="0 0 13 13"><rect x="0.5" y="0.5" width="12" height="12" fill="#fbfbfb" stroke="#c6c6c6" stroke-width="1"/><rect x="1.5" y="1.5" width="10" height="10" fill="none" stroke="#f0f0f0" stroke-width="1"/></svg><div class="a" style="left:467px;top:627px;width:256px;height:27px;background:#fff;overflow:hidden"><div class="t" style="left:3px;top:1px;height:27px;line-height:27px;color:#000;font-size:13px;">Notifications</div></div><div class="a" style="left:723px;top:627px;width:77px;height:27px;background:#fff"></div><div class="t" style="left:723px;top:628px;width:74px;height:27px;line-height:27px;color:#000;font-size:13px;text-align:right;">1</div><div class="a" style="left:800px;top:627px;width:104px;height:27px;background:#fff"></div><svg class="a" style="left:804px;top:632px;" width="17" height="17" viewBox="0 0 17 17"><path d="M0 3.5 H2 M0 5.5 H2 M0 7.5 H2" stroke="#2f7cc0" stroke-width="1"/><path d="M2.5 10 V1.5 H13.5 V5" fill="none" stroke="#555" stroke-width="1"/><path d="M2.5 9.5 H4" stroke="#555" stroke-width="1"/><rect x="10" y="3" width="2" height="2" fill="#d03020"/><path d="M4 4.5 H8" stroke="#999" stroke-width="1"/><circle cx="9.3" cy="10.7" r="4.6" fill="#2f7cc0" stroke="#fff" stroke-width="0.8"/><path d="M7 9.7 H11.6 M7 11.7 H11.6" stroke="#fff" stroke-width="1.1"/></svg><div class="t" style="left:821px;top:628px;height:27px;line-height:27px;color:#000;font-size:13px;">Condition</div><div class="a" style="left:904px;top:627px;width:176px;height:27px;background:#fff"></div><div class="t" style="left:907px;top:628px;height:27px;line-height:27px;color:#000;font-size:13px;">Subject Contains</div><div class="a" style="left:1080px;top:627px;width:256px;height:27px;background:#fff;overflow:hidden"><div class="t" style="left:3px;top:1px;height:27px;line-height:27px;color:#000;font-size:13px;">Your digest email</div></div><div class="a" style="left:1336px;top:627px;width:132px;height:27px;background:#f0f0f0"></div><svg class="a" style="left:1389px;top:632px;" width="16" height="17" viewBox="0 0 16 17"><path d="M3 10.5 V1.5 H14.5 V9" fill="none" stroke="#606060" stroke-width="1"/><rect x="10.5" y="3" width="2" height="2" fill="#d03020"/><path d="M5 4.5 H8.5 M5 6.5 H7" stroke="#999" stroke-width="1"/><path d="M0 3.5 H2.5 M0 5.5 H2.5 M0 7.5 H2.5" stroke="#2f7cc0" stroke-width="1"/><circle cx="9.3" cy="10.5" r="5" fill="#1a9a5a" stroke="#fff" stroke-width="1"/><path d="M6.8 10.6 L8.8 12.6 L12 8.8" stroke="#fff" stroke-width="1.5" fill="none"/></svg><svg class="a" style="left:1406px;top:634px;" width="13" height="13" viewBox="0 0 13 13"><rect x="0.5" y="0.5" width="12" height="12" fill="#fbfbfb" stroke="#c6c6c6" stroke-width="1"/><rect x="1.5" y="1.5" width="10" height="10" fill="none" stroke="#f0f0f0" stroke-width="1"/><path d="M3.2 6.8 L5.6 10 L9.6 3" stroke="#a6a6a6" stroke-width="1.6" fill="none"/></svg><div class="a" style="left:1468px;top:627px;width:185px;height:27px;background:#f0f0f0"></div><svg class="a" style="left:1556px;top:634px;" width="13" height="13" viewBox="0 0 13 13"><rect x="0.5" y="0.5" width="12" height="12" fill="#fbfbfb" stroke="#c6c6c6" stroke-width="1"/><rect x="1.5" y="1.5" width="10" height="10" fill="none" stroke="#f0f0f0" stroke-width="1"/></svg><div class="a" style="left:83px;top:654px;width:75px;height:1px;background:#fff"></div><div class="a" style="left:158px;top:654px;width:1495px;height:1px;background:#f3f3f3"></div><div class="a" style="left:83px;top:655px;width:35px;height:27px;background:#c8d9ea"></div><div class="a" style="left:119px;top:655px;width:19px;height:27px;background:#d2d8de"></div><div class="a" style="left:139px;top:655px;width:19px;height:27px;background:#d2d8de"></div><div class="t" style="left:60px;top:656px;width:55px;height:27px;line-height:27px;color:#000;font-size:13px;text-align:right;">3</div><div class="a" style="left:158px;top:655px;width:20px;height:27px;background:#fff"></div><svg class="a" style="left:161px;top:662px;" width="16" height="12" viewBox="0 0 16 12"><rect x="3.5" y="1.3" width="11.5" height="8.5" fill="none" stroke="#2f7cc0" stroke-width="1.1"/><path d="M0.8 3.3 H3.5 M0.8 5.6 H3.5 M1.3 7.9 H3.5 M5.5 4.3 H9.3 M5.5 6.5 H8.3" stroke="#2f7cc0" stroke-width="1"/><rect x="11.2" y="3" width="2" height="2" fill="#2f7cc0"/></svg><div class="a" style="left:178px;top:655px;width:25px;height:27px;background:#fff"></div><div class="a" style="left:205px;top:655px;width:173px;height:27px;background:#fff"></div><div class="t" style="left:207px;top:656px;height:27px;line-height:27px;color:#000;font-size:13px;">Alex Wilber</div><div class="a" style="left:380px;top:655px;width:23px;height:27px;background:#d4d4d4"></div><div class="a" style="left:403px;top:655px;width:64px;height:27px;background:#f0f0f0"></div><svg class="a" style="left:430px;top:662px;" width="13" height="13" viewBox="0 0 13 13"><rect x="0.5" y="0.5" width="12" height="12" fill="#fbfbfb" stroke="#c6c6c6" stroke-width="1"/><rect x="1.5" y="1.5" width="10" height="10" fill="none" stroke="#f0f0f0" stroke-width="1"/></svg><div class="a" style="left:467px;top:655px;width:256px;height:27px;background:#fff;overflow:hidden"><div class="t" style="left:3px;top:1px;height:27px;line-height:27px;color:#000;font-size:13px;">Notifications</div></div><div class="a" style="left:723px;top:655px;width:77px;height:27px;background:#fff"></div><div class="t" style="left:723px;top:656px;width:74px;height:27px;line-height:27px;color:#000;font-size:13px;text-align:right;">1</div><div class="a" style="left:800px;top:655px;width:104px;height:27px;background:#fff"></div><svg class="a" style="left:804px;top:660px;" width="17" height="17" viewBox="0 0 17 17"><path d="M0 3.5 H2 M0 5.5 H2 M0 7.5 H2" stroke="#2f7cc0" stroke-width="1"/><path d="M2.5 10 V1.5 H13.5 V5" fill="none" stroke="#555" stroke-width="1"/><path d="M2.5 9.5 H4" stroke="#555" stroke-width="1"/><rect x="10" y="3" width="2" height="2" fill="#d03020"/><path d="M4 4.5 H8" stroke="#999" stroke-width="1"/><path d="M15 5.8 L7.2 6.8 L5.6 10.6 L9.6 10.2 L4.6 15 L14.4 8.4 L10.4 8.6 Z" fill="#e8a838" stroke="#e8a838" stroke-width="0.9" stroke-linejoin="round"/></svg><div class="t" style="left:821px;top:656px;height:27px;line-height:27px;color:#000;font-size:13px;">Action</div><div class="a" style="left:904px;top:655px;width:176px;height:27px;background:#fff"></div><div class="t" style="left:907px;top:656px;height:27px;line-height:27px;color:#000;font-size:13px;">Move To Folder</div><div class="a" style="left:1080px;top:655px;width:256px;height:27px;background:#fff;overflow:hidden"><div class="t" style="left:3px;top:1px;height:27px;line-height:27px;color:#000;font-size:13px;">Notifications</div></div><div class="a" style="left:1336px;top:655px;width:132px;height:27px;background:#f0f0f0"></div><svg class="a" style="left:1389px;top:660px;" width="16" height="17" viewBox="0 0 16 17"><path d="M3 10.5 V1.5 H14.5 V9" fill="none" stroke="#606060" stroke-width="1"/><rect x="10.5" y="3" width="2" height="2" fill="#d03020"/><path d="M5 4.5 H8.5 M5 6.5 H7" stroke="#999" stroke-width="1"/><path d="M0 3.5 H2.5 M0 5.5 H2.5 M0 7.5 H2.5" stroke="#2f7cc0" stroke-width="1"/><circle cx="9.3" cy="10.5" r="5" fill="#1a9a5a" stroke="#fff" stroke-width="1"/><path d="M6.8 10.6 L8.8 12.6 L12 8.8" stroke="#fff" stroke-width="1.5" fill="none"/></svg><svg class="a" style="left:1406px;top:662px;" width="13" height="13" viewBox="0 0 13 13"><rect x="0.5" y="0.5" width="12" height="12" fill="#fbfbfb" stroke="#c6c6c6" stroke-width="1"/><rect x="1.5" y="1.5" width="10" height="10" fill="none" stroke="#f0f0f0" stroke-width="1"/><path d="M3.2 6.8 L5.6 10 L9.6 3" stroke="#a6a6a6" stroke-width="1.6" fill="none"/></svg><div class="a" style="left:1468px;top:655px;width:185px;height:27px;background:#f0f0f0"></div><svg class="a" style="left:1556px;top:662px;" width="13" height="13" viewBox="0 0 13 13"><rect x="0.5" y="0.5" width="12" height="12" fill="#fbfbfb" stroke="#c6c6c6" stroke-width="1"/><rect x="1.5" y="1.5" width="10" height="10" fill="none" stroke="#f0f0f0" stroke-width="1"/></svg><div class="a" style="left:83px;top:682px;width:75px;height:1px;background:#fff"></div><div class="a" style="left:158px;top:682px;width:1495px;height:1px;background:#f3f3f3"></div><div class="a" style="left:83px;top:683px;width:35px;height:27px;background:#c8d9ea"></div><div class="a" style="left:119px;top:683px;width:19px;height:27px;background:#d2d8de"></div><div class="a" style="left:139px;top:683px;width:19px;height:27px;background:#d2d8de"></div><div class="t" style="left:60px;top:684px;width:55px;height:27px;line-height:27px;color:#000;font-size:13px;text-align:right;">3</div><div class="a" style="left:158px;top:683px;width:20px;height:27px;background:#fff"></div><svg class="a" style="left:161px;top:690px;" width="16" height="12" viewBox="0 0 16 12"><rect x="3.5" y="1.3" width="11.5" height="8.5" fill="none" stroke="#2f7cc0" stroke-width="1.1"/><path d="M0.8 3.3 H3.5 M0.8 5.6 H3.5 M1.3 7.9 H3.5 M5.5 4.3 H9.3 M5.5 6.5 H8.3" stroke="#2f7cc0" stroke-width="1"/><rect x="11.2" y="3" width="2" height="2" fill="#2f7cc0"/></svg><div class="a" style="left:178px;top:683px;width:25px;height:27px;background:#fff"></div><div class="a" style="left:205px;top:683px;width:173px;height:27px;background:#fff"></div><div class="t" style="left:207px;top:684px;height:27px;line-height:27px;color:#000;font-size:13px;">Alex Wilber</div><div class="a" style="left:380px;top:683px;width:23px;height:27px;background:#d4d4d4"></div><div class="a" style="left:403px;top:683px;width:64px;height:27px;background:#f0f0f0"></div><svg class="a" style="left:430px;top:690px;" width="13" height="13" viewBox="0 0 13 13"><rect x="0.5" y="0.5" width="12" height="12" fill="#fbfbfb" stroke="#c6c6c6" stroke-width="1"/><rect x="1.5" y="1.5" width="10" height="10" fill="none" stroke="#f0f0f0" stroke-width="1"/></svg><div class="a" style="left:467px;top:683px;width:256px;height:27px;background:#fff;overflow:hidden"><div class="t" style="left:3px;top:1px;height:27px;line-height:27px;color:#000;font-size:13px;">Notifications</div></div><div class="a" style="left:723px;top:683px;width:77px;height:27px;background:#fff"></div><div class="t" style="left:723px;top:684px;width:74px;height:27px;line-height:27px;color:#000;font-size:13px;text-align:right;">1</div><div class="a" style="left:800px;top:683px;width:104px;height:27px;background:#fff"></div><svg class="a" style="left:804px;top:688px;" width="17" height="17" viewBox="0 0 17 17"><path d="M0 3.5 H2 M0 5.5 H2 M0 7.5 H2" stroke="#2f7cc0" stroke-width="1"/><path d="M2.5 10 V1.5 H13.5 V5" fill="none" stroke="#555" stroke-width="1"/><path d="M2.5 9.5 H4" stroke="#555" stroke-width="1"/><rect x="10" y="3" width="2" height="2" fill="#d03020"/><path d="M4 4.5 H8" stroke="#999" stroke-width="1"/><path d="M15 5.8 L7.2 6.8 L5.6 10.6 L9.6 10.2 L4.6 15 L14.4 8.4 L10.4 8.6 Z" fill="#e8a838" stroke="#e8a838" stroke-width="0.9" stroke-linejoin="round"/></svg><div class="t" style="left:821px;top:684px;height:27px;line-height:27px;color:#000;font-size:13px;">Action</div><div class="a" style="left:904px;top:683px;width:176px;height:27px;background:#fff"></div><div class="t" style="left:907px;top:684px;height:27px;line-height:27px;color:#000;font-size:13px;">Stop Processing Rules</div><div class="a" style="left:1080px;top:683px;width:256px;height:27px;background:#f0f0f0"></div><svg class="a" style="left:1203px;top:690px;" width="13" height="13" viewBox="0 0 13 13"><rect x="0.5" y="0.5" width="12" height="12" fill="#fbfbfb" stroke="#c6c6c6" stroke-width="1"/><rect x="1.5" y="1.5" width="10" height="10" fill="none" stroke="#f0f0f0" stroke-width="1"/><path d="M3.2 6.8 L5.6 10 L9.6 3" stroke="#a6a6a6" stroke-width="1.6" fill="none"/></svg><div class="a" style="left:1336px;top:683px;width:132px;height:27px;background:#f0f0f0"></div><svg class="a" style="left:1389px;top:688px;" width="16" height="17" viewBox="0 0 16 17"><path d="M3 10.5 V1.5 H14.5 V9" fill="none" stroke="#606060" stroke-width="1"/><rect x="10.5" y="3" width="2" height="2" fill="#d03020"/><path d="M5 4.5 H8.5 M5 6.5 H7" stroke="#999" stroke-width="1"/><path d="M0 3.5 H2.5 M0 5.5 H2.5 M0 7.5 H2.5" stroke="#2f7cc0" stroke-width="1"/><circle cx="9.3" cy="10.5" r="5" fill="#1a9a5a" stroke="#fff" stroke-width="1"/><path d="M6.8 10.6 L8.8 12.6 L12 8.8" stroke="#fff" stroke-width="1.5" fill="none"/></svg><svg class="a" style="left:1406px;top:690px;" width="13" height="13" viewBox="0 0 13 13"><rect x="0.5" y="0.5" width="12" height="12" fill="#fbfbfb" stroke="#c6c6c6" stroke-width="1"/><rect x="1.5" y="1.5" width="10" height="10" fill="none" stroke="#f0f0f0" stroke-width="1"/><path d="M3.2 6.8 L5.6 10 L9.6 3" stroke="#a6a6a6" stroke-width="1.6" fill="none"/></svg><div class="a" style="left:1468px;top:683px;width:185px;height:27px;background:#f0f0f0"></div><svg class="a" style="left:1556px;top:690px;" width="13" height="13" viewBox="0 0 13 13"><rect x="0.5" y="0.5" width="12" height="12" fill="#fbfbfb" stroke="#c6c6c6" stroke-width="1"/><rect x="1.5" y="1.5" width="10" height="10" fill="none" stroke="#f0f0f0" stroke-width="1"/></svg><div class="a" style="left:63px;top:710px;width:1590px;height:1px;background:#6e6e6e"></div><div class="a" style="left:63px;top:711px;width:55px;height:27px;background:#4d90d0"></div><div class="a" style="left:118px;top:711px;width:20px;height:27px;background:#5e9fd8"></div><div class="a" style="left:138px;top:711px;width:20px;height:27px;background:#4d90d0"></div><div class="a" style="left:118px;top:711px;width:1px;height:27px;background:#fff;opacity:0.8"></div><div class="a" style="left:138px;top:711px;width:1px;height:27px;background:#fff;opacity:0.8"></div><div class="a" style="left:68px;top:717px;width:16px;height:16px;background:#2c3b52;border:1px solid #eef2f6;box-sizing:border-box"></div><div class="a" style="left:71px;top:724px;width:10px;height:2px;background:#e8eef4"></div><div class="t" style="left:60px;top:712px;width:55px;height:27px;line-height:27px;color:#fff;font-weight:bold;font-size:13px;text-align:right;">2</div><div class="t" style="left:120px;top:712px;width:35px;height:27px;line-height:27px;color:#fff;font-weight:bold;font-size:13px;text-align:right;">3</div><div class="a" style="left:158px;top:711px;width:20px;height:27px;background:#0078d7"></div><svg class="a" style="left:160px;top:716px;" width="17" height="17" viewBox="0 0 17 17"><path d="M2 1 H7.5 L9 3 H16 V6.3 H5.2 V8 H2 Z" fill="#fff"/><rect x="5.5" y="7.2" width="10.5" height="7.5" fill="none" stroke="#fff" stroke-width="1.1"/><path d="M1.5 9.5 H5.5 M2 11.5 H5.5 M2.5 13.5 H5.5 M7.5 10.2 H11 M7.5 12.3 H10" stroke="#fff" stroke-width="1"/><rect x="12.6" y="9" width="2" height="2" fill="#fff"/></svg><div class="a" style="left:178px;top:711px;width:25px;height:27px;background:#5aa6d0"></div><svg class="a" style="left:182px;top:716px;" width="14" height="17" viewBox="0 0 14 17"><rect x="0" y="1" width="14" height="2.2" fill="#707070"/><rect x="5" y="0" width="4" height="1.5" fill="#707070"/><path d="M1 4 H13 V16.2 H1Z" fill="#707070"/><path d="M4 6 V14.2 M7 6 V14.2 M10 6 V14.2" stroke="#fff" stroke-width="1.8"/></svg><div class="a" style="left:200px;top:720px;width:1px;height:11px;background:#cde"></div><div class="a" style="left:205px;top:711px;width:173px;height:27px;background:#0078d7"></div><div class="t" style="left:207px;top:712px;height:27px;line-height:27px;color:#fff;font-weight:bold;font-size:13px;">Alex Wilber</div><div class="a" style="left:380px;top:711px;width:23px;height:27px;background:#6aa3d8"></div><div class="a" style="left:403px;top:711px;width:64px;height:27px;background:#7ab6e6"></div><svg class="a" style="left:430px;top:718px;" width="13" height="13" viewBox="0 0 13 13"><rect x="0.5" y="0.5" width="12" height="12" fill="#fbfbfb" stroke="#c6c6c6" stroke-width="1"/><rect x="1.5" y="1.5" width="10" height="10" fill="none" stroke="#f0f0f0" stroke-width="1"/></svg><div class="a" style="left:467px;top:711px;width:256px;height:27px;background:#0078d7;overflow:hidden"><div class="t" style="left:3px;top:1px;height:27px;line-height:27px;color:#fff;font-weight:bold;font-size:13px;">From Adele</div></div><div class="a" style="left:723px;top:711px;width:77px;height:27px;background:#0078d7"></div><div class="t" style="left:723px;top:712px;width:74px;height:27px;line-height:27px;color:#fff;font-weight:bold;font-size:13px;text-align:right;">2</div><div class="a" style="left:800px;top:711px;width:536px;height:27px;background:#6aa6d8"></div><div class="a" style="left:1336px;top:711px;width:132px;height:27px;background:#7ab6e6"></div><svg class="a" style="left:1389px;top:716px;" width="16" height="17" viewBox="0 0 16 17"><path d="M3 10.5 V1.5 H14.5 V9" fill="none" stroke="#606060" stroke-width="1"/><rect x="10.5" y="3" width="2" height="2" fill="#d03020"/><path d="M5 4.5 H8.5 M5 6.5 H7" stroke="#999" stroke-width="1"/><path d="M0 3.5 H2.5 M0 5.5 H2.5 M0 7.5 H2.5" stroke="#2f7cc0" stroke-width="1"/><circle cx="9.3" cy="10.5" r="5" fill="#1a9a5a" stroke="#fff" stroke-width="1"/><path d="M6.8 10.6 L8.8 12.6 L12 8.8" stroke="#fff" stroke-width="1.5" fill="none"/></svg><svg class="a" style="left:1406px;top:718px;" width="13" height="13" viewBox="0 0 13 13"><rect x="0.5" y="0.5" width="12" height="12" fill="#fbfbfb" stroke="#c6c6c6" stroke-width="1"/><rect x="1.5" y="1.5" width="10" height="10" fill="none" stroke="#f0f0f0" stroke-width="1"/><path d="M3.2 6.8 L5.6 10 L9.6 3" stroke="#a6a6a6" stroke-width="1.6" fill="none"/></svg><div class="a" style="left:1468px;top:711px;width:185px;height:27px;background:#7ab6e6"></div><svg class="a" style="left:1556px;top:718px;" width="13" height="13" viewBox="0 0 13 13"><rect x="0.5" y="0.5" width="12" height="12" fill="#fbfbfb" stroke="#c6c6c6" stroke-width="1"/><rect x="1.5" y="1.5" width="10" height="10" fill="none" stroke="#f0f0f0" stroke-width="1"/></svg><div class="a" style="left:63px;top:738px;width:1590px;height:1px;background:#6e6e6e"></div><div class="a" style="left:83px;top:739px;width:35px;height:27px;background:#c8d9ea"></div><div class="a" style="left:119px;top:739px;width:19px;height:27px;background:#d2d8de"></div><div class="a" style="left:139px;top:739px;width:19px;height:27px;background:#d2d8de"></div><div class="t" style="left:60px;top:740px;width:55px;height:27px;line-height:27px;color:#000;font-size:13px;text-align:right;">3</div><div class="a" style="left:158px;top:739px;width:20px;height:27px;background:#fff"></div><svg class="a" style="left:161px;top:746px;" width="16" height="12" viewBox="0 0 16 12"><rect x="3.5" y="1.3" width="11.5" height="8.5" fill="none" stroke="#2f7cc0" stroke-width="1.1"/><path d="M0.8 3.3 H3.5 M0.8 5.6 H3.5 M1.3 7.9 H3.5 M5.5 4.3 H9.3 M5.5 6.5 H8.3" stroke="#2f7cc0" stroke-width="1"/><rect x="11.2" y="3" width="2" height="2" fill="#2f7cc0"/></svg><div class="a" style="left:178px;top:739px;width:25px;height:27px;background:#d8f6d8"></div><svg class="a" style="left:182px;top:744px;" width="14" height="17" viewBox="0 0 14 17"><rect x="0" y="1" width="14" height="2.2" fill="#707070"/><rect x="5" y="0" width="4" height="1.5" fill="#707070"/><path d="M1 4 H13 V16.2 H1Z" fill="#707070"/><path d="M4 6 V14.2 M7 6 V14.2 M10 6 V14.2" stroke="#fff" stroke-width="1.8"/></svg><div class="a" style="left:200px;top:748px;width:1px;height:11px;background:#3a2020"></div><div class="a" style="left:205px;top:739px;width:173px;height:27px;background:#fff"></div><div class="t" style="left:207px;top:740px;height:27px;line-height:27px;color:#000;font-size:13px;">Alex Wilber</div><div class="a" style="left:380px;top:739px;width:23px;height:27px;background:#d4d4d4"></div><div class="a" style="left:403px;top:739px;width:64px;height:27px;background:#f0f0f0"></div><svg class="a" style="left:430px;top:746px;" width="13" height="13" viewBox="0 0 13 13"><rect x="0.5" y="0.5" width="12" height="12" fill="#fbfbfb" stroke="#c6c6c6" stroke-width="1"/><rect x="1.5" y="1.5" width="10" height="10" fill="none" stroke="#f0f0f0" stroke-width="1"/></svg><div class="a" style="left:467px;top:739px;width:256px;height:27px;background:#fff;overflow:hidden"><div class="t" style="left:3px;top:1px;height:27px;line-height:27px;color:#000;font-size:13px;">From Adele</div></div><div class="a" style="left:723px;top:739px;width:77px;height:27px;background:#fff"></div><div class="t" style="left:723px;top:740px;width:74px;height:27px;line-height:27px;color:#000;font-size:13px;text-align:right;">2</div><div class="a" style="left:800px;top:739px;width:104px;height:27px;background:#fff"></div><svg class="a" style="left:804px;top:744px;" width="17" height="17" viewBox="0 0 17 17"><path d="M0 3.5 H2 M0 5.5 H2 M0 7.5 H2" stroke="#2f7cc0" stroke-width="1"/><path d="M2.5 10 V1.5 H13.5 V5" fill="none" stroke="#555" stroke-width="1"/><path d="M2.5 9.5 H4" stroke="#555" stroke-width="1"/><rect x="10" y="3" width="2" height="2" fill="#d03020"/><path d="M4 4.5 H8" stroke="#999" stroke-width="1"/><circle cx="9.3" cy="10.7" r="4.6" fill="#2f7cc0" stroke="#fff" stroke-width="0.8"/><path d="M7 9.7 H11.6 M7 11.7 H11.6" stroke="#fff" stroke-width="1.1"/></svg><div class="t" style="left:821px;top:740px;height:27px;line-height:27px;color:#000;font-size:13px;">Condition</div><div class="a" style="left:904px;top:739px;width:176px;height:27px;background:#fff"></div><div class="t" style="left:907px;top:740px;height:27px;line-height:27px;color:#000;font-size:13px;">From Addresses</div><div class="a" style="left:1080px;top:739px;width:256px;height:27px;background:#fff;overflow:hidden"><div class="t" style="left:3px;top:1px;height:27px;line-height:27px;color:#000;font-size:13px;">Adele Vance &lt;AdeleV@M365x85832012.onmicrosoft.com&gt;</div></div><div class="a" style="left:1336px;top:739px;width:132px;height:27px;background:#f0f0f0"></div><svg class="a" style="left:1389px;top:744px;" width="16" height="17" viewBox="0 0 16 17"><path d="M3 10.5 V1.5 H14.5 V9" fill="none" stroke="#606060" stroke-width="1"/><rect x="10.5" y="3" width="2" height="2" fill="#d03020"/><path d="M5 4.5 H8.5 M5 6.5 H7" stroke="#999" stroke-width="1"/><path d="M0 3.5 H2.5 M0 5.5 H2.5 M0 7.5 H2.5" stroke="#2f7cc0" stroke-width="1"/><circle cx="9.3" cy="10.5" r="5" fill="#1a9a5a" stroke="#fff" stroke-width="1"/><path d="M6.8 10.6 L8.8 12.6 L12 8.8" stroke="#fff" stroke-width="1.5" fill="none"/></svg><svg class="a" style="left:1406px;top:746px;" width="13" height="13" viewBox="0 0 13 13"><rect x="0.5" y="0.5" width="12" height="12" fill="#fbfbfb" stroke="#c6c6c6" stroke-width="1"/><rect x="1.5" y="1.5" width="10" height="10" fill="none" stroke="#f0f0f0" stroke-width="1"/><path d="M3.2 6.8 L5.6 10 L9.6 3" stroke="#a6a6a6" stroke-width="1.6" fill="none"/></svg><div class="a" style="left:1468px;top:739px;width:185px;height:27px;background:#f0f0f0"></div><svg class="a" style="left:1556px;top:746px;" width="13" height="13" viewBox="0 0 13 13"><rect x="0.5" y="0.5" width="12" height="12" fill="#fbfbfb" stroke="#c6c6c6" stroke-width="1"/><rect x="1.5" y="1.5" width="10" height="10" fill="none" stroke="#f0f0f0" stroke-width="1"/></svg><div class="a" style="left:83px;top:766px;width:75px;height:1px;background:#fff"></div><div class="a" style="left:158px;top:766px;width:1495px;height:1px;background:#f3f3f3"></div><div class="a" style="left:83px;top:767px;width:35px;height:27px;background:#c8d9ea"></div><div class="a" style="left:119px;top:767px;width:19px;height:27px;background:#d2d8de"></div><div class="a" style="left:139px;top:767px;width:19px;height:27px;background:#d2d8de"></div><div class="t" style="left:60px;top:768px;width:55px;height:27px;line-height:27px;color:#000;font-size:13px;text-align:right;">3</div><div class="a" style="left:158px;top:767px;width:20px;height:27px;background:#fff"></div><svg class="a" style="left:161px;top:774px;" width="16" height="12" viewBox="0 0 16 12"><rect x="3.5" y="1.3" width="11.5" height="8.5" fill="none" stroke="#2f7cc0" stroke-width="1.1"/><path d="M0.8 3.3 H3.5 M0.8 5.6 H3.5 M1.3 7.9 H3.5 M5.5 4.3 H9.3 M5.5 6.5 H8.3" stroke="#2f7cc0" stroke-width="1"/><rect x="11.2" y="3" width="2" height="2" fill="#2f7cc0"/></svg><div class="a" style="left:178px;top:767px;width:25px;height:27px;background:#d8f6d8"></div><svg class="a" style="left:182px;top:772px;" width="14" height="17" viewBox="0 0 14 17"><rect x="0" y="1" width="14" height="2.2" fill="#707070"/><rect x="5" y="0" width="4" height="1.5" fill="#707070"/><path d="M1 4 H13 V16.2 H1Z" fill="#707070"/><path d="M4 6 V14.2 M7 6 V14.2 M10 6 V14.2" stroke="#fff" stroke-width="1.8"/></svg><div class="a" style="left:200px;top:776px;width:1px;height:11px;background:#3a2020"></div><div class="a" style="left:205px;top:767px;width:173px;height:27px;background:#fff"></div><div class="t" style="left:207px;top:768px;height:27px;line-height:27px;color:#000;font-size:13px;">Alex Wilber</div><div class="a" style="left:380px;top:767px;width:23px;height:27px;background:#d4d4d4"></div><div class="a" style="left:403px;top:767px;width:64px;height:27px;background:#f0f0f0"></div><svg class="a" style="left:430px;top:774px;" width="13" height="13" viewBox="0 0 13 13"><rect x="0.5" y="0.5" width="12" height="12" fill="#fbfbfb" stroke="#c6c6c6" stroke-width="1"/><rect x="1.5" y="1.5" width="10" height="10" fill="none" stroke="#f0f0f0" stroke-width="1"/></svg><div class="a" style="left:467px;top:767px;width:256px;height:27px;background:#fff;overflow:hidden"><div class="t" style="left:3px;top:1px;height:27px;line-height:27px;color:#000;font-size:13px;">From Adele</div></div><div class="a" style="left:723px;top:767px;width:77px;height:27px;background:#fff"></div><div class="t" style="left:723px;top:768px;width:74px;height:27px;line-height:27px;color:#000;font-size:13px;text-align:right;">2</div><div class="a" style="left:800px;top:767px;width:104px;height:27px;background:#fff"></div><svg class="a" style="left:804px;top:772px;" width="17" height="17" viewBox="0 0 17 17"><path d="M0 3.5 H2 M0 5.5 H2 M0 7.5 H2" stroke="#2f7cc0" stroke-width="1"/><path d="M2.5 10 V1.5 H13.5 V5" fill="none" stroke="#555" stroke-width="1"/><path d="M2.5 9.5 H4" stroke="#555" stroke-width="1"/><rect x="10" y="3" width="2" height="2" fill="#d03020"/><path d="M4 4.5 H8" stroke="#999" stroke-width="1"/><path d="M15 5.8 L7.2 6.8 L5.6 10.6 L9.6 10.2 L4.6 15 L14.4 8.4 L10.4 8.6 Z" fill="#e8a838" stroke="#e8a838" stroke-width="0.9" stroke-linejoin="round"/></svg><div class="t" style="left:821px;top:768px;height:27px;line-height:27px;color:#000;font-size:13px;">Action</div><div class="a" style="left:904px;top:767px;width:176px;height:27px;background:#fff"></div><div class="t" style="left:907px;top:768px;height:27px;line-height:27px;color:#000;font-size:13px;">Move To Folder</div><div class="a" style="left:1080px;top:767px;width:256px;height:27px;background:#fff;overflow:hidden"><div class="t" style="left:3px;top:1px;height:27px;line-height:27px;color:#000;font-size:13px;">Adele</div></div><div class="a" style="left:1336px;top:767px;width:132px;height:27px;background:#f0f0f0"></div><svg class="a" style="left:1389px;top:772px;" width="16" height="17" viewBox="0 0 16 17"><path d="M3 10.5 V1.5 H14.5 V9" fill="none" stroke="#606060" stroke-width="1"/><rect x="10.5" y="3" width="2" height="2" fill="#d03020"/><path d="M5 4.5 H8.5 M5 6.5 H7" stroke="#999" stroke-width="1"/><path d="M0 3.5 H2.5 M0 5.5 H2.5 M0 7.5 H2.5" stroke="#2f7cc0" stroke-width="1"/><circle cx="9.3" cy="10.5" r="5" fill="#1a9a5a" stroke="#fff" stroke-width="1"/><path d="M6.8 10.6 L8.8 12.6 L12 8.8" stroke="#fff" stroke-width="1.5" fill="none"/></svg><svg class="a" style="left:1406px;top:774px;" width="13" height="13" viewBox="0 0 13 13"><rect x="0.5" y="0.5" width="12" height="12" fill="#fbfbfb" stroke="#c6c6c6" stroke-width="1"/><rect x="1.5" y="1.5" width="10" height="10" fill="none" stroke="#f0f0f0" stroke-width="1"/><path d="M3.2 6.8 L5.6 10 L9.6 3" stroke="#a6a6a6" stroke-width="1.6" fill="none"/></svg><div class="a" style="left:1468px;top:767px;width:185px;height:27px;background:#f0f0f0"></div><svg class="a" style="left:1556px;top:774px;" width="13" height="13" viewBox="0 0 13 13"><rect x="0.5" y="0.5" width="12" height="12" fill="#fbfbfb" stroke="#c6c6c6" stroke-width="1"/><rect x="1.5" y="1.5" width="10" height="10" fill="none" stroke="#f0f0f0" stroke-width="1"/></svg><div class="a" style="left:83px;top:794px;width:75px;height:1px;background:#fff"></div><div class="a" style="left:158px;top:794px;width:1495px;height:1px;background:#f3f3f3"></div><div class="a" style="left:83px;top:795px;width:35px;height:27px;background:#c8d9ea"></div><div class="a" style="left:119px;top:795px;width:19px;height:27px;background:#d2d8de"></div><div class="a" style="left:139px;top:795px;width:19px;height:27px;background:#d2d8de"></div><div class="t" style="left:60px;top:796px;width:55px;height:27px;line-height:27px;color:#000;font-size:13px;text-align:right;">3</div><div class="a" style="left:158px;top:795px;width:20px;height:27px;background:#fff"></div><svg class="a" style="left:161px;top:802px;" width="16" height="12" viewBox="0 0 16 12"><rect x="3.5" y="1.3" width="11.5" height="8.5" fill="none" stroke="#2f7cc0" stroke-width="1.1"/><path d="M0.8 3.3 H3.5 M0.8 5.6 H3.5 M1.3 7.9 H3.5 M5.5 4.3 H9.3 M5.5 6.5 H8.3" stroke="#2f7cc0" stroke-width="1"/><rect x="11.2" y="3" width="2" height="2" fill="#2f7cc0"/></svg><div class="a" style="left:178px;top:795px;width:25px;height:27px;background:#d8f6d8"></div><svg class="a" style="left:182px;top:800px;" width="14" height="17" viewBox="0 0 14 17"><rect x="0" y="1" width="14" height="2.2" fill="#707070"/><rect x="5" y="0" width="4" height="1.5" fill="#707070"/><path d="M1 4 H13 V16.2 H1Z" fill="#707070"/><path d="M4 6 V14.2 M7 6 V14.2 M10 6 V14.2" stroke="#fff" stroke-width="1.8"/></svg><div class="a" style="left:200px;top:804px;width:1px;height:11px;background:#3a2020"></div><div class="a" style="left:205px;top:795px;width:173px;height:27px;background:#fff"></div><div class="t" style="left:207px;top:796px;height:27px;line-height:27px;color:#000;font-size:13px;">Alex Wilber</div><div class="a" style="left:380px;top:795px;width:23px;height:27px;background:#d4d4d4"></div><div class="a" style="left:403px;top:795px;width:64px;height:27px;background:#f0f0f0"></div><svg class="a" style="left:430px;top:802px;" width="13" height="13" viewBox="0 0 13 13"><rect x="0.5" y="0.5" width="12" height="12" fill="#fbfbfb" stroke="#c6c6c6" stroke-width="1"/><rect x="1.5" y="1.5" width="10" height="10" fill="none" stroke="#f0f0f0" stroke-width="1"/></svg><div class="a" style="left:467px;top:795px;width:256px;height:27px;background:#fff;overflow:hidden"><div class="t" style="left:3px;top:1px;height:27px;line-height:27px;color:#000;font-size:13px;">From Adele</div></div><div class="a" style="left:723px;top:795px;width:77px;height:27px;background:#fff"></div><div class="t" style="left:723px;top:796px;width:74px;height:27px;line-height:27px;color:#000;font-size:13px;text-align:right;">2</div><div class="a" style="left:800px;top:795px;width:104px;height:27px;background:#fff"></div><svg class="a" style="left:804px;top:800px;" width="17" height="17" viewBox="0 0 17 17"><path d="M0 3.5 H2 M0 5.5 H2 M0 7.5 H2" stroke="#2f7cc0" stroke-width="1"/><path d="M2.5 10 V1.5 H13.5 V5" fill="none" stroke="#555" stroke-width="1"/><path d="M2.5 9.5 H4" stroke="#555" stroke-width="1"/><rect x="10" y="3" width="2" height="2" fill="#d03020"/><path d="M4 4.5 H8" stroke="#999" stroke-width="1"/><path d="M15 5.8 L7.2 6.8 L5.6 10.6 L9.6 10.2 L4.6 15 L14.4 8.4 L10.4 8.6 Z" fill="#e8a838" stroke="#e8a838" stroke-width="0.9" stroke-linejoin="round"/></svg><div class="t" style="left:821px;top:796px;height:27px;line-height:27px;color:#000;font-size:13px;">Action</div><div class="a" style="left:904px;top:795px;width:176px;height:27px;background:#fff"></div><div class="t" style="left:907px;top:796px;height:27px;line-height:27px;color:#000;font-size:13px;">Stop Processing Rules</div><div class="a" style="left:1080px;top:795px;width:256px;height:27px;background:#f0f0f0"></div><svg class="a" style="left:1203px;top:802px;" width="13" height="13" viewBox="0 0 13 13"><rect x="0.5" y="0.5" width="12" height="12" fill="#fbfbfb" stroke="#c6c6c6" stroke-width="1"/><rect x="1.5" y="1.5" width="10" height="10" fill="none" stroke="#f0f0f0" stroke-width="1"/><path d="M3.2 6.8 L5.6 10 L9.6 3" stroke="#a6a6a6" stroke-width="1.6" fill="none"/></svg><div class="a" style="left:1336px;top:795px;width:132px;height:27px;background:#f0f0f0"></div><svg class="a" style="left:1389px;top:800px;" width="16" height="17" viewBox="0 0 16 17"><path d="M3 10.5 V1.5 H14.5 V9" fill="none" stroke="#606060" stroke-width="1"/><rect x="10.5" y="3" width="2" height="2" fill="#d03020"/><path d="M5 4.5 H8.5 M5 6.5 H7" stroke="#999" stroke-width="1"/><path d="M0 3.5 H2.5 M0 5.5 H2.5 M0 7.5 H2.5" stroke="#2f7cc0" stroke-width="1"/><circle cx="9.3" cy="10.5" r="5" fill="#1a9a5a" stroke="#fff" stroke-width="1"/><path d="M6.8 10.6 L8.8 12.6 L12 8.8" stroke="#fff" stroke-width="1.5" fill="none"/></svg><svg class="a" style="left:1406px;top:802px;" width="13" height="13" viewBox="0 0 13 13"><rect x="0.5" y="0.5" width="12" height="12" fill="#fbfbfb" stroke="#c6c6c6" stroke-width="1"/><rect x="1.5" y="1.5" width="10" height="10" fill="none" stroke="#f0f0f0" stroke-width="1"/><path d="M3.2 6.8 L5.6 10 L9.6 3" stroke="#a6a6a6" stroke-width="1.6" fill="none"/></svg><div class="a" style="left:1468px;top:795px;width:185px;height:27px;background:#f0f0f0"></div><svg class="a" style="left:1556px;top:802px;" width="13" height="13" viewBox="0 0 13 13"><rect x="0.5" y="0.5" width="12" height="12" fill="#fbfbfb" stroke="#c6c6c6" stroke-width="1"/><rect x="1.5" y="1.5" width="10" height="10" fill="none" stroke="#f0f0f0" stroke-width="1"/></svg><div class="a" style="left:45px;top:822px;width:1608px;height:1px;background:#6e6e6e"></div><div class="a" style="left:45px;top:823px;width:73px;height:27px;background:#8fa9c6"></div><div class="a" style="left:118px;top:823px;width:20px;height:27px;background:#b8c4d1"></div><div class="a" style="left:138px;top:823px;width:20px;height:27px;background:#8fa9c6"></div><div class="a" style="left:118px;top:823px;width:1px;height:27px;background:#fff;opacity:0.8"></div><div class="a" style="left:138px;top:823px;width:1px;height:27px;background:#fff;opacity:0.8"></div><div class="a" style="left:50px;top:829px;width:16px;height:16px;background:#2c3b52;border:1px solid #eef2f6;box-sizing:border-box"></div><div class="a" style="left:53px;top:836px;width:10px;height:2px;background:#e8eef4"></div><div class="t" style="left:60px;top:824px;width:55px;height:27px;line-height:27px;color:#000;font-weight:bold;font-size:13px;text-align:right;">1</div><div class="t" style="left:120px;top:824px;width:35px;height:27px;line-height:27px;color:#000;font-weight:bold;font-size:13px;text-align:right;">8</div><div class="a" style="left:158px;top:823px;width:20px;height:27px;background:#fff"></div><svg class="a" style="left:160px;top:829px;" width="18" height="16" viewBox="0 0 18 16"><circle cx="8.8" cy="4.1" r="4.15" fill="#2f7cc0"/><path d="M2.1 14 V13 Q2.1 9.6 6.2 9.6 H11.8 Q15.9 9.6 15.9 13 V14 Z" fill="#2f7cc0"/></svg><div class="a" style="left:178px;top:823px;width:25px;height:27px;background:#fff"></div><div class="a" style="left:205px;top:823px;width:173px;height:27px;background:#fff"></div><div class="t" style="left:207px;top:824px;height:27px;line-height:27px;color:#000;font-weight:bold;font-size:13px;">Lee Gu</div><div class="a" style="left:380px;top:823px;width:23px;height:27px;background:#d4d4d4"></div><div class="a" style="left:403px;top:823px;width:1250px;height:27px;background:#d6d6d6"></div><div class="a" style="left:1653px;top:823px;width:197px;height:28px;background:#fff"></div><div class="a" style="left:45px;top:850px;width:1608px;height:1px;background:#6e6e6e"></div><div class="a" style="left:63px;top:851px;width:55px;height:27px;background:#8fa9c6"></div><div class="a" style="left:118px;top:851px;width:20px;height:27px;background:#b8c4d1"></div><div class="a" style="left:138px;top:851px;width:20px;height:27px;background:#8fa9c6"></div><div class="a" style="left:118px;top:851px;width:1px;height:27px;background:#fff;opacity:0.8"></div><div class="a" style="left:138px;top:851px;width:1px;height:27px;background:#fff;opacity:0.8"></div><div class="a" style="left:68px;top:857px;width:16px;height:16px;background:#2c3b52;border:1px solid #eef2f6;box-sizing:border-box"></div><div class="a" style="left:71px;top:864px;width:10px;height:2px;background:#e8eef4"></div><div class="t" style="left:60px;top:852px;width:55px;height:27px;line-height:27px;color:#000;font-weight:bold;font-size:13px;text-align:right;">2</div><div class="t" style="left:120px;top:852px;width:35px;height:27px;line-height:27px;color:#000;font-weight:bold;font-size:13px;text-align:right;">3</div><div class="a" style="left:158px;top:851px;width:20px;height:27px;background:#fff"></div><svg class="a" style="left:160px;top:856px;" width="17" height="17" viewBox="0 0 17 17"><path d="M2 1 H7.5 L9 3 H16 V6.3 H5.2 V8 H2 Z" fill="#2f7cc0"/><rect x="5.5" y="7.2" width="10.5" height="7.5" fill="none" stroke="#2f7cc0" stroke-width="1.1"/><path d="M1.5 9.5 H5.5 M2 11.5 H5.5 M2.5 13.5 H5.5 M7.5 10.2 H11 M7.5 12.3 H10" stroke="#2f7cc0" stroke-width="1"/><rect x="12.6" y="9" width="2" height="2" fill="#2f7cc0"/></svg><div class="a" style="left:178px;top:851px;width:25px;height:27px;background:#fff"></div><div class="a" style="left:205px;top:851px;width:173px;height:27px;background:#fff"></div><div class="t" style="left:207px;top:852px;height:27px;line-height:27px;color:#000;font-weight:bold;font-size:13px;">Lee Gu</div><div class="a" style="left:380px;top:851px;width:23px;height:27px;background:#d4d4d4"></div><div class="a" style="left:403px;top:851px;width:64px;height:27px;background:#f0f0f0"></div><svg class="a" style="left:430px;top:858px;" width="13" height="13" viewBox="0 0 13 13"><rect x="0.5" y="0.5" width="12" height="12" fill="#fbfbfb" stroke="#c6c6c6" stroke-width="1"/><rect x="1.5" y="1.5" width="10" height="10" fill="none" stroke="#f0f0f0" stroke-width="1"/></svg><div class="a" style="left:467px;top:851px;width:256px;height:27px;background:#fff;overflow:hidden"><div class="t" style="left:3px;top:1px;height:27px;line-height:27px;color:#000;font-weight:bold;font-size:13px;">Viva summaries</div></div><div class="a" style="left:723px;top:851px;width:77px;height:27px;background:#fff"></div><div class="t" style="left:723px;top:852px;width:74px;height:27px;line-height:27px;color:#000;font-weight:bold;font-size:13px;text-align:right;">1</div><div class="a" style="left:800px;top:851px;width:536px;height:27px;background:#d6d6d6"></div><div class="a" style="left:1336px;top:851px;width:132px;height:27px;background:#f0f0f0"></div><svg class="a" style="left:1389px;top:856px;" width="16" height="17" viewBox="0 0 16 17"><path d="M3 10.5 V1.5 H14.5 V9" fill="none" stroke="#606060" stroke-width="1"/><rect x="10.5" y="3" width="2" height="2" fill="#d03020"/><path d="M5 4.5 H8.5 M5 6.5 H7" stroke="#999" stroke-width="1"/><path d="M0 3.5 H2.5 M0 5.5 H2.5 M0 7.5 H2.5" stroke="#2f7cc0" stroke-width="1"/><circle cx="9.3" cy="10.5" r="5" fill="#1a9a5a" stroke="#fff" stroke-width="1"/><path d="M6.8 10.6 L8.8 12.6 L12 8.8" stroke="#fff" stroke-width="1.5" fill="none"/></svg><svg class="a" style="left:1406px;top:858px;" width="13" height="13" viewBox="0 0 13 13"><rect x="0.5" y="0.5" width="12" height="12" fill="#fbfbfb" stroke="#c6c6c6" stroke-width="1"/><rect x="1.5" y="1.5" width="10" height="10" fill="none" stroke="#f0f0f0" stroke-width="1"/><path d="M3.2 6.8 L5.6 10 L9.6 3" stroke="#a6a6a6" stroke-width="1.6" fill="none"/></svg><div class="a" style="left:1468px;top:851px;width:185px;height:27px;background:#f0f0f0"></div><svg class="a" style="left:1556px;top:858px;" width="13" height="13" viewBox="0 0 13 13"><rect x="0.5" y="0.5" width="12" height="12" fill="#fbfbfb" stroke="#c6c6c6" stroke-width="1"/><rect x="1.5" y="1.5" width="10" height="10" fill="none" stroke="#f0f0f0" stroke-width="1"/></svg><div class="a" style="left:63px;top:878px;width:1590px;height:1px;background:#6e6e6e"></div><div class="a" style="left:83px;top:879px;width:35px;height:27px;background:#c8d9ea"></div><div class="a" style="left:119px;top:879px;width:19px;height:27px;background:#d2d8de"></div><div class="a" style="left:139px;top:879px;width:19px;height:27px;background:#d2d8de"></div><div class="t" style="left:60px;top:880px;width:55px;height:27px;line-height:27px;color:#000;font-size:13px;text-align:right;">3</div><div class="a" style="left:158px;top:879px;width:20px;height:27px;background:#fff"></div><svg class="a" style="left:161px;top:886px;" width="16" height="12" viewBox="0 0 16 12"><rect x="3.5" y="1.3" width="11.5" height="8.5" fill="none" stroke="#2f7cc0" stroke-width="1.1"/><path d="M0.8 3.3 H3.5 M0.8 5.6 H3.5 M1.3 7.9 H3.5 M5.5 4.3 H9.3 M5.5 6.5 H8.3" stroke="#2f7cc0" stroke-width="1"/><rect x="11.2" y="3" width="2" height="2" fill="#2f7cc0"/></svg><div class="a" style="left:178px;top:879px;width:25px;height:27px;background:#fff"></div><div class="a" style="left:205px;top:879px;width:173px;height:27px;background:#fff"></div><div class="t" style="left:207px;top:880px;height:27px;line-height:27px;color:#000;font-size:13px;">Lee Gu</div><div class="a" style="left:380px;top:879px;width:23px;height:27px;background:#d4d4d4"></div><div class="a" style="left:403px;top:879px;width:64px;height:27px;background:#f0f0f0"></div><svg class="a" style="left:430px;top:886px;" width="13" height="13" viewBox="0 0 13 13"><rect x="0.5" y="0.5" width="12" height="12" fill="#fbfbfb" stroke="#c6c6c6" stroke-width="1"/><rect x="1.5" y="1.5" width="10" height="10" fill="none" stroke="#f0f0f0" stroke-width="1"/></svg><div class="a" style="left:467px;top:879px;width:256px;height:27px;background:#fff;overflow:hidden"><div class="t" style="left:3px;top:1px;height:27px;line-height:27px;color:#000;font-size:13px;">Viva summaries</div></div><div class="a" style="left:723px;top:879px;width:77px;height:27px;background:#fff"></div><div class="t" style="left:723px;top:880px;width:74px;height:27px;line-height:27px;color:#000;font-size:13px;text-align:right;">1</div><div class="a" style="left:800px;top:879px;width:104px;height:27px;background:#fff"></div><svg class="a" style="left:804px;top:884px;" width="17" height="17" viewBox="0 0 17 17"><path d="M0 3.5 H2 M0 5.5 H2 M0 7.5 H2" stroke="#2f7cc0" stroke-width="1"/><path d="M2.5 10 V1.5 H13.5 V5" fill="none" stroke="#555" stroke-width="1"/><path d="M2.5 9.5 H4" stroke="#555" stroke-width="1"/><rect x="10" y="3" width="2" height="2" fill="#d03020"/><path d="M4 4.5 H8" stroke="#999" stroke-width="1"/><circle cx="9.3" cy="10.7" r="4.6" fill="#2f7cc0" stroke="#fff" stroke-width="0.8"/><path d="M7 9.7 H11.6 M7 11.7 H11.6" stroke="#fff" stroke-width="1.1"/></svg><div class="t" style="left:821px;top:880px;height:27px;line-height:27px;color:#000;font-size:13px;">Condition</div><div class="a" style="left:904px;top:879px;width:176px;height:27px;background:#fff"></div><div class="t" style="left:907px;top:880px;height:27px;line-height:27px;color:#000;font-size:13px;">Subject Contains</div><div class="a" style="left:1080px;top:879px;width:256px;height:27px;background:#fff;overflow:hidden"><div class="t" style="left:3px;top:1px;height:27px;line-height:27px;color:#000;font-size:13px;">Your digest email</div></div><div class="a" style="left:1336px;top:879px;width:132px;height:27px;background:#f0f0f0"></div><svg class="a" style="left:1389px;top:884px;" width="16" height="17" viewBox="0 0 16 17"><path d="M3 10.5 V1.5 H14.5 V9" fill="none" stroke="#606060" stroke-width="1"/><rect x="10.5" y="3" width="2" height="2" fill="#d03020"/><path d="M5 4.5 H8.5 M5 6.5 H7" stroke="#999" stroke-width="1"/><path d="M0 3.5 H2.5 M0 5.5 H2.5 M0 7.5 H2.5" stroke="#2f7cc0" stroke-width="1"/><circle cx="9.3" cy="10.5" r="5" fill="#1a9a5a" stroke="#fff" stroke-width="1"/><path d="M6.8 10.6 L8.8 12.6 L12 8.8" stroke="#fff" stroke-width="1.5" fill="none"/></svg><svg class="a" style="left:1406px;top:886px;" width="13" height="13" viewBox="0 0 13 13"><rect x="0.5" y="0.5" width="12" height="12" fill="#fbfbfb" stroke="#c6c6c6" stroke-width="1"/><rect x="1.5" y="1.5" width="10" height="10" fill="none" stroke="#f0f0f0" stroke-width="1"/><path d="M3.2 6.8 L5.6 10 L9.6 3" stroke="#a6a6a6" stroke-width="1.6" fill="none"/></svg><div class="a" style="left:1468px;top:879px;width:185px;height:27px;background:#f0f0f0"></div><svg class="a" style="left:1556px;top:886px;" width="13" height="13" viewBox="0 0 13 13"><rect x="0.5" y="0.5" width="12" height="12" fill="#fbfbfb" stroke="#c6c6c6" stroke-width="1"/><rect x="1.5" y="1.5" width="10" height="10" fill="none" stroke="#f0f0f0" stroke-width="1"/></svg><div class="a" style="left:83px;top:906px;width:75px;height:1px;background:#fff"></div><div class="a" style="left:158px;top:906px;width:1495px;height:1px;background:#f3f3f3"></div><div class="a" style="left:83px;top:907px;width:35px;height:27px;background:#c8d9ea"></div><div class="a" style="left:119px;top:907px;width:19px;height:27px;background:#d2d8de"></div><div class="a" style="left:139px;top:907px;width:19px;height:27px;background:#d2d8de"></div><div class="t" style="left:60px;top:908px;width:55px;height:27px;line-height:27px;color:#000;font-size:13px;text-align:right;">3</div><div class="a" style="left:158px;top:907px;width:20px;height:27px;background:#fff"></div><svg class="a" style="left:161px;top:914px;" width="16" height="12" viewBox="0 0 16 12"><rect x="3.5" y="1.3" width="11.5" height="8.5" fill="none" stroke="#2f7cc0" stroke-width="1.1"/><path d="M0.8 3.3 H3.5 M0.8 5.6 H3.5 M1.3 7.9 H3.5 M5.5 4.3 H9.3 M5.5 6.5 H8.3" stroke="#2f7cc0" stroke-width="1"/><rect x="11.2" y="3" width="2" height="2" fill="#2f7cc0"/></svg><div class="a" style="left:178px;top:907px;width:25px;height:27px;background:#fff"></div><div class="a" style="left:205px;top:907px;width:173px;height:27px;background:#fff"></div><div class="t" style="left:207px;top:908px;height:27px;line-height:27px;color:#000;font-size:13px;">Lee Gu</div><div class="a" style="left:380px;top:907px;width:23px;height:27px;background:#d4d4d4"></div><div class="a" style="left:403px;top:907px;width:64px;height:27px;background:#f0f0f0"></div><svg class="a" style="left:430px;top:914px;" width="13" height="13" viewBox="0 0 13 13"><rect x="0.5" y="0.5" width="12" height="12" fill="#fbfbfb" stroke="#c6c6c6" stroke-width="1"/><rect x="1.5" y="1.5" width="10" height="10" fill="none" stroke="#f0f0f0" stroke-width="1"/></svg><div class="a" style="left:467px;top:907px;width:256px;height:27px;background:#fff;overflow:hidden"><div class="t" style="left:3px;top:1px;height:27px;line-height:27px;color:#000;font-size:13px;">Viva summaries</div></div><div class="a" style="left:723px;top:907px;width:77px;height:27px;background:#fff"></div><div class="t" style="left:723px;top:908px;width:74px;height:27px;line-height:27px;color:#000;font-size:13px;text-align:right;">1</div><div class="a" style="left:800px;top:907px;width:104px;height:27px;background:#fff"></div><svg class="a" style="left:804px;top:912px;" width="17" height="17" viewBox="0 0 17 17"><path d="M0 3.5 H2 M0 5.5 H2 M0 7.5 H2" stroke="#2f7cc0" stroke-width="1"/><path d="M2.5 10 V1.5 H13.5 V5" fill="none" stroke="#555" stroke-width="1"/><path d="M2.5 9.5 H4" stroke="#555" stroke-width="1"/><rect x="10" y="3" width="2" height="2" fill="#d03020"/><path d="M4 4.5 H8" stroke="#999" stroke-width="1"/><path d="M15 5.8 L7.2 6.8 L5.6 10.6 L9.6 10.2 L4.6 15 L14.4 8.4 L10.4 8.6 Z" fill="#e8a838" stroke="#e8a838" stroke-width="0.9" stroke-linejoin="round"/></svg><div class="t" style="left:821px;top:908px;height:27px;line-height:27px;color:#000;font-size:13px;">Action</div><div class="a" style="left:904px;top:907px;width:176px;height:27px;background:#fff"></div><div class="t" style="left:907px;top:908px;height:27px;line-height:27px;color:#000;font-size:13px;">Move To Folder</div><div class="a" style="left:1080px;top:907px;width:256px;height:27px;background:#fff;overflow:hidden"><div class="t" style="left:3px;top:1px;height:27px;line-height:27px;color:#000;font-size:13px;">Viva</div></div><div class="a" style="left:1336px;top:907px;width:132px;height:27px;background:#f0f0f0"></div><svg class="a" style="left:1389px;top:912px;" width="16" height="17" viewBox="0 0 16 17"><path d="M3 10.5 V1.5 H14.5 V9" fill="none" stroke="#606060" stroke-width="1"/><rect x="10.5" y="3" width="2" height="2" fill="#d03020"/><path d="M5 4.5 H8.5 M5 6.5 H7" stroke="#999" stroke-width="1"/><path d="M0 3.5 H2.5 M0 5.5 H2.5 M0 7.5 H2.5" stroke="#2f7cc0" stroke-width="1"/><circle cx="9.3" cy="10.5" r="5" fill="#1a9a5a" stroke="#fff" stroke-width="1"/><path d="M6.8 10.6 L8.8 12.6 L12 8.8" stroke="#fff" stroke-width="1.5" fill="none"/></svg><svg class="a" style="left:1406px;top:914px;" width="13" height="13" viewBox="0 0 13 13"><rect x="0.5" y="0.5" width="12" height="12" fill="#fbfbfb" stroke="#c6c6c6" stroke-width="1"/><rect x="1.5" y="1.5" width="10" height="10" fill="none" stroke="#f0f0f0" stroke-width="1"/><path d="M3.2 6.8 L5.6 10 L9.6 3" stroke="#a6a6a6" stroke-width="1.6" fill="none"/></svg><div class="a" style="left:1468px;top:907px;width:185px;height:27px;background:#f0f0f0"></div><svg class="a" style="left:1556px;top:914px;" width="13" height="13" viewBox="0 0 13 13"><rect x="0.5" y="0.5" width="12" height="12" fill="#fbfbfb" stroke="#c6c6c6" stroke-width="1"/><rect x="1.5" y="1.5" width="10" height="10" fill="none" stroke="#f0f0f0" stroke-width="1"/></svg><div class="a" style="left:83px;top:934px;width:75px;height:1px;background:#fff"></div><div class="a" style="left:158px;top:934px;width:1495px;height:1px;background:#f3f3f3"></div><div class="a" style="left:83px;top:935px;width:35px;height:27px;background:#c8d9ea"></div><div class="a" style="left:119px;top:935px;width:19px;height:27px;background:#d2d8de"></div><div class="a" style="left:139px;top:935px;width:19px;height:27px;background:#d2d8de"></div><div class="t" style="left:60px;top:936px;width:55px;height:27px;line-height:27px;color:#000;font-size:13px;text-align:right;">3</div><div class="a" style="left:158px;top:935px;width:20px;height:27px;background:#fff"></div><svg class="a" style="left:161px;top:942px;" width="16" height="12" viewBox="0 0 16 12"><rect x="3.5" y="1.3" width="11.5" height="8.5" fill="none" stroke="#2f7cc0" stroke-width="1.1"/><path d="M0.8 3.3 H3.5 M0.8 5.6 H3.5 M1.3 7.9 H3.5 M5.5 4.3 H9.3 M5.5 6.5 H8.3" stroke="#2f7cc0" stroke-width="1"/><rect x="11.2" y="3" width="2" height="2" fill="#2f7cc0"/></svg><div class="a" style="left:178px;top:935px;width:25px;height:27px;background:#fff"></div><div class="a" style="left:205px;top:935px;width:173px;height:27px;background:#fff"></div><div class="t" style="left:207px;top:936px;height:27px;line-height:27px;color:#000;font-size:13px;">Lee Gu</div><div class="a" style="left:380px;top:935px;width:23px;height:27px;background:#d4d4d4"></div><div class="a" style="left:403px;top:935px;width:64px;height:27px;background:#f0f0f0"></div><svg class="a" style="left:430px;top:942px;" width="13" height="13" viewBox="0 0 13 13"><rect x="0.5" y="0.5" width="12" height="12" fill="#fbfbfb" stroke="#c6c6c6" stroke-width="1"/><rect x="1.5" y="1.5" width="10" height="10" fill="none" stroke="#f0f0f0" stroke-width="1"/></svg><div class="a" style="left:467px;top:935px;width:256px;height:27px;background:#fff;overflow:hidden"><div class="t" style="left:3px;top:1px;height:27px;line-height:27px;color:#000;font-size:13px;">Viva summaries</div></div><div class="a" style="left:723px;top:935px;width:77px;height:27px;background:#fff"></div><div class="t" style="left:723px;top:936px;width:74px;height:27px;line-height:27px;color:#000;font-size:13px;text-align:right;">1</div><div class="a" style="left:800px;top:935px;width:104px;height:27px;background:#fff"></div><svg class="a" style="left:804px;top:940px;" width="17" height="17" viewBox="0 0 17 17"><path d="M0 3.5 H2 M0 5.5 H2 M0 7.5 H2" stroke="#2f7cc0" stroke-width="1"/><path d="M2.5 10 V1.5 H13.5 V5" fill="none" stroke="#555" stroke-width="1"/><path d="M2.5 9.5 H4" stroke="#555" stroke-width="1"/><rect x="10" y="3" width="2" height="2" fill="#d03020"/><path d="M4 4.5 H8" stroke="#999" stroke-width="1"/><path d="M15 5.8 L7.2 6.8 L5.6 10.6 L9.6 10.2 L4.6 15 L14.4 8.4 L10.4 8.6 Z" fill="#e8a838" stroke="#e8a838" stroke-width="0.9" stroke-linejoin="round"/></svg><div class="t" style="left:821px;top:936px;height:27px;line-height:27px;color:#000;font-size:13px;">Action</div><div class="a" style="left:904px;top:935px;width:176px;height:27px;background:#fff"></div><div class="t" style="left:907px;top:936px;height:27px;line-height:27px;color:#000;font-size:13px;">Stop Processing Rules</div><div class="a" style="left:1080px;top:935px;width:256px;height:27px;background:#f0f0f0"></div><svg class="a" style="left:1203px;top:942px;" width="13" height="13" viewBox="0 0 13 13"><rect x="0.5" y="0.5" width="12" height="12" fill="#fbfbfb" stroke="#c6c6c6" stroke-width="1"/><rect x="1.5" y="1.5" width="10" height="10" fill="none" stroke="#f0f0f0" stroke-width="1"/><path d="M3.2 6.8 L5.6 10 L9.6 3" stroke="#a6a6a6" stroke-width="1.6" fill="none"/></svg><div class="a" style="left:1336px;top:935px;width:132px;height:27px;background:#f0f0f0"></div><svg class="a" style="left:1389px;top:940px;" width="16" height="17" viewBox="0 0 16 17"><path d="M3 10.5 V1.5 H14.5 V9" fill="none" stroke="#606060" stroke-width="1"/><rect x="10.5" y="3" width="2" height="2" fill="#d03020"/><path d="M5 4.5 H8.5 M5 6.5 H7" stroke="#999" stroke-width="1"/><path d="M0 3.5 H2.5 M0 5.5 H2.5 M0 7.5 H2.5" stroke="#2f7cc0" stroke-width="1"/><circle cx="9.3" cy="10.5" r="5" fill="#1a9a5a" stroke="#fff" stroke-width="1"/><path d="M6.8 10.6 L8.8 12.6 L12 8.8" stroke="#fff" stroke-width="1.5" fill="none"/></svg><svg class="a" style="left:1406px;top:942px;" width="13" height="13" viewBox="0 0 13 13"><rect x="0.5" y="0.5" width="12" height="12" fill="#fbfbfb" stroke="#c6c6c6" stroke-width="1"/><rect x="1.5" y="1.5" width="10" height="10" fill="none" stroke="#f0f0f0" stroke-width="1"/><path d="M3.2 6.8 L5.6 10 L9.6 3" stroke="#a6a6a6" stroke-width="1.6" fill="none"/></svg><div class="a" style="left:1468px;top:935px;width:185px;height:27px;background:#f0f0f0"></div><svg class="a" style="left:1556px;top:942px;" width="13" height="13" viewBox="0 0 13 13"><rect x="0.5" y="0.5" width="12" height="12" fill="#fbfbfb" stroke="#c6c6c6" stroke-width="1"/><rect x="1.5" y="1.5" width="10" height="10" fill="none" stroke="#f0f0f0" stroke-width="1"/></svg><div class="a" style="left:63px;top:962px;width:1590px;height:1px;background:#6e6e6e"></div><div class="a" style="left:63px;top:963px;width:55px;height:27px;background:#8fa9c6"></div><div class="a" style="left:118px;top:963px;width:20px;height:27px;background:#b8c4d1"></div><div class="a" style="left:138px;top:963px;width:20px;height:27px;background:#8fa9c6"></div><div class="a" style="left:118px;top:963px;width:1px;height:27px;background:#fff;opacity:0.8"></div><div class="a" style="left:138px;top:963px;width:1px;height:27px;background:#fff;opacity:0.8"></div><div class="a" style="left:68px;top:969px;width:16px;height:16px;background:#2c3b52;border:1px solid #eef2f6;box-sizing:border-box"></div><div class="a" style="left:71px;top:976px;width:10px;height:2px;background:#e8eef4"></div><div class="t" style="left:60px;top:964px;width:55px;height:27px;line-height:27px;color:#000;font-weight:bold;font-size:13px;text-align:right;">2</div><div class="t" style="left:120px;top:964px;width:35px;height:27px;line-height:27px;color:#000;font-weight:bold;font-size:13px;text-align:right;">3</div><div class="a" style="left:158px;top:963px;width:20px;height:27px;background:#fff"></div><svg class="a" style="left:160px;top:968px;" width="17" height="17" viewBox="0 0 17 17"><path d="M2 1 H7.5 L9 3 H16 V6.3 H5.2 V8 H2 Z" fill="#2f7cc0"/><rect x="5.5" y="7.2" width="10.5" height="7.5" fill="none" stroke="#2f7cc0" stroke-width="1.1"/><path d="M1.5 9.5 H5.5 M2 11.5 H5.5 M2.5 13.5 H5.5 M7.5 10.2 H11 M7.5 12.3 H10" stroke="#2f7cc0" stroke-width="1"/><rect x="12.6" y="9" width="2" height="2" fill="#2f7cc0"/></svg><div class="a" style="left:178px;top:963px;width:25px;height:27px;background:#fff"></div><div class="a" style="left:205px;top:963px;width:173px;height:27px;background:#fff"></div><div class="t" style="left:207px;top:964px;height:27px;line-height:27px;color:#000;font-weight:bold;font-size:13px;">Lee Gu</div><div class="a" style="left:380px;top:963px;width:23px;height:27px;background:#d4d4d4"></div><div class="a" style="left:403px;top:963px;width:64px;height:27px;background:#f0f0f0"></div><svg class="a" style="left:430px;top:970px;" width="13" height="13" viewBox="0 0 13 13"><rect x="0.5" y="0.5" width="12" height="12" fill="#fbfbfb" stroke="#c6c6c6" stroke-width="1"/><rect x="1.5" y="1.5" width="10" height="10" fill="none" stroke="#f0f0f0" stroke-width="1"/></svg><div class="a" style="left:467px;top:963px;width:256px;height:27px;background:#fff;overflow:hidden"><div class="t" style="left:3px;top:1px;height:27px;line-height:27px;color:#000;font-weight:bold;font-size:13px;">from Alex</div></div><div class="a" style="left:723px;top:963px;width:77px;height:27px;background:#fff"></div><div class="t" style="left:723px;top:964px;width:74px;height:27px;line-height:27px;color:#000;font-weight:bold;font-size:13px;text-align:right;">2</div><div class="a" style="left:800px;top:963px;width:536px;height:27px;background:#d6d6d6"></div><div class="a" style="left:1336px;top:963px;width:132px;height:27px;background:#f0f0f0"></div><svg class="a" style="left:1389px;top:968px;" width="16" height="17" viewBox="0 0 16 17"><path d="M3 10.5 V1.5 H14.5 V9" fill="none" stroke="#606060" stroke-width="1"/><rect x="10.5" y="3" width="2" height="2" fill="#d03020"/><path d="M5 4.5 H8.5 M5 6.5 H7" stroke="#999" stroke-width="1"/><path d="M0 3.5 H2.5 M0 5.5 H2.5 M0 7.5 H2.5" stroke="#2f7cc0" stroke-width="1"/><circle cx="9.3" cy="10.5" r="5" fill="#1a9a5a" stroke="#fff" stroke-width="1"/><path d="M6.8 10.6 L8.8 12.6 L12 8.8" stroke="#fff" stroke-width="1.5" fill="none"/></svg><svg class="a" style="left:1406px;top:970px;" width="13" height="13" viewBox="0 0 13 13"><rect x="0.5" y="0.5" width="12" height="12" fill="#fbfbfb" stroke="#c6c6c6" stroke-width="1"/><rect x="1.5" y="1.5" width="10" height="10" fill="none" stroke="#f0f0f0" stroke-width="1"/><path d="M3.2 6.8 L5.6 10 L9.6 3" stroke="#a6a6a6" stroke-width="1.6" fill="none"/></svg><div class="a" style="left:1468px;top:963px;width:185px;height:27px;background:#f0f0f0"></div><svg class="a" style="left:1556px;top:970px;" width="13" height="13" viewBox="0 0 13 13"><rect x="0.5" y="0.5" width="12" height="12" fill="#fbfbfb" stroke="#c6c6c6" stroke-width="1"/><rect x="1.5" y="1.5" width="10" height="10" fill="none" stroke="#f0f0f0" stroke-width="1"/></svg><div class="a" style="left:63px;top:990px;width:1590px;height:1px;background:#6e6e6e"></div><div class="a" style="left:83px;top:991px;width:35px;height:27px;background:#c8d9ea"></div><div class="a" style="left:119px;top:991px;width:19px;height:27px;background:#d2d8de"></div><div class="a" style="left:139px;top:991px;width:19px;height:27px;background:#d2d8de"></div><div class="t" style="left:60px;top:992px;width:55px;height:27px;line-height:27px;color:#000;font-size:13px;text-align:right;">3</div><div class="a" style="left:158px;top:991px;width:20px;height:27px;background:#fff"></div><svg class="a" style="left:161px;top:998px;" width="16" height="12" viewBox="0 0 16 12"><rect x="3.5" y="1.3" width="11.5" height="8.5" fill="none" stroke="#2f7cc0" stroke-width="1.1"/><path d="M0.8 3.3 H3.5 M0.8 5.6 H3.5 M1.3 7.9 H3.5 M5.5 4.3 H9.3 M5.5 6.5 H8.3" stroke="#2f7cc0" stroke-width="1"/><rect x="11.2" y="3" width="2" height="2" fill="#2f7cc0"/></svg><div class="a" style="left:178px;top:991px;width:25px;height:27px;background:#fff"></div><div class="a" style="left:205px;top:991px;width:173px;height:27px;background:#fff"></div><div class="t" style="left:207px;top:992px;height:27px;line-height:27px;color:#000;font-size:13px;">Lee Gu</div><div class="a" style="left:380px;top:991px;width:23px;height:27px;background:#d4d4d4"></div><div class="a" style="left:403px;top:991px;width:64px;height:27px;background:#f0f0f0"></div><svg class="a" style="left:430px;top:998px;" width="13" height="13" viewBox="0 0 13 13"><rect x="0.5" y="0.5" width="12" height="12" fill="#fbfbfb" stroke="#c6c6c6" stroke-width="1"/><rect x="1.5" y="1.5" width="10" height="10" fill="none" stroke="#f0f0f0" stroke-width="1"/></svg><div class="a" style="left:467px;top:991px;width:256px;height:27px;background:#fff;overflow:hidden"><div class="t" style="left:3px;top:1px;height:27px;line-height:27px;color:#000;font-size:13px;">from Alex</div></div><div class="a" style="left:723px;top:991px;width:77px;height:27px;background:#fff"></div><div class="t" style="left:723px;top:992px;width:74px;height:27px;line-height:27px;color:#000;font-size:13px;text-align:right;">2</div><div class="a" style="left:800px;top:991px;width:104px;height:27px;background:#fff"></div><svg class="a" style="left:804px;top:996px;" width="17" height="17" viewBox="0 0 17 17"><path d="M0 3.5 H2 M0 5.5 H2 M0 7.5 H2" stroke="#2f7cc0" stroke-width="1"/><path d="M2.5 10 V1.5 H13.5 V5" fill="none" stroke="#555" stroke-width="1"/><path d="M2.5 9.5 H4" stroke="#555" stroke-width="1"/><rect x="10" y="3" width="2" height="2" fill="#d03020"/><path d="M4 4.5 H8" stroke="#999" stroke-width="1"/><circle cx="9.3" cy="10.7" r="4.6" fill="#2f7cc0" stroke="#fff" stroke-width="0.8"/><path d="M7 9.7 H11.6 M7 11.7 H11.6" stroke="#fff" stroke-width="1.1"/></svg><div class="t" style="left:821px;top:992px;height:27px;line-height:27px;color:#000;font-size:13px;">Condition</div><div class="a" style="left:904px;top:991px;width:176px;height:27px;background:#fff"></div><div class="t" style="left:907px;top:992px;height:27px;line-height:27px;color:#000;font-size:13px;">From Addresses</div><div class="a" style="left:1080px;top:991px;width:256px;height:27px;background:#fff;overflow:hidden"><div class="t" style="left:3px;top:1px;height:27px;line-height:27px;color:#000;font-size:13px;">Alex Wilber &lt;AlexW@M365x85832012.OnMicrosoft.com&gt;</div></div><div class="a" style="left:1336px;top:991px;width:132px;height:27px;background:#f0f0f0"></div><svg class="a" style="left:1389px;top:996px;" width="16" height="17" viewBox="0 0 16 17"><path d="M3 10.5 V1.5 H14.5 V9" fill="none" stroke="#606060" stroke-width="1"/><rect x="10.5" y="3" width="2" height="2" fill="#d03020"/><path d="M5 4.5 H8.5 M5 6.5 H7" stroke="#999" stroke-width="1"/><path d="M0 3.5 H2.5 M0 5.5 H2.5 M0 7.5 H2.5" stroke="#2f7cc0" stroke-width="1"/><circle cx="9.3" cy="10.5" r="5" fill="#1a9a5a" stroke="#fff" stroke-width="1"/><path d="M6.8 10.6 L8.8 12.6 L12 8.8" stroke="#fff" stroke-width="1.5" fill="none"/></svg><svg class="a" style="left:1406px;top:998px;" width="13" height="13" viewBox="0 0 13 13"><rect x="0.5" y="0.5" width="12" height="12" fill="#fbfbfb" stroke="#c6c6c6" stroke-width="1"/><rect x="1.5" y="1.5" width="10" height="10" fill="none" stroke="#f0f0f0" stroke-width="1"/><path d="M3.2 6.8 L5.6 10 L9.6 3" stroke="#a6a6a6" stroke-width="1.6" fill="none"/></svg><div class="a" style="left:1468px;top:991px;width:185px;height:27px;background:#f0f0f0"></div><svg class="a" style="left:1556px;top:998px;" width="13" height="13" viewBox="0 0 13 13"><rect x="0.5" y="0.5" width="12" height="12" fill="#fbfbfb" stroke="#c6c6c6" stroke-width="1"/><rect x="1.5" y="1.5" width="10" height="10" fill="none" stroke="#f0f0f0" stroke-width="1"/></svg><div class="a" style="left:83px;top:1018px;width:75px;height:1px;background:#fff"></div><div class="a" style="left:158px;top:1018px;width:1495px;height:1px;background:#f3f3f3"></div><div class="a" style="left:83px;top:1019px;width:35px;height:27px;background:#c8d9ea"></div><div class="a" style="left:119px;top:1019px;width:19px;height:27px;background:#d2d8de"></div><div class="a" style="left:139px;top:1019px;width:19px;height:27px;background:#d2d8de"></div><div class="t" style="left:60px;top:1020px;width:55px;height:27px;line-height:27px;color:#000;font-size:13px;text-align:right;">3</div><div class="a" style="left:158px;top:1019px;width:20px;height:27px;background:#fff"></div><svg class="a" style="left:161px;top:1026px;" width="16" height="12" viewBox="0 0 16 12"><rect x="3.5" y="1.3" width="11.5" height="8.5" fill="none" stroke="#2f7cc0" stroke-width="1.1"/><path d="M0.8 3.3 H3.5 M0.8 5.6 H3.5 M1.3 7.9 H3.5 M5.5 4.3 H9.3 M5.5 6.5 H8.3" stroke="#2f7cc0" stroke-width="1"/><rect x="11.2" y="3" width="2" height="2" fill="#2f7cc0"/></svg><div class="a" style="left:178px;top:1019px;width:25px;height:27px;background:#fff"></div><div class="a" style="left:205px;top:1019px;width:173px;height:27px;background:#fff"></div><div class="t" style="left:207px;top:1020px;height:27px;line-height:27px;color:#000;font-size:13px;">Lee Gu</div><div class="a" style="left:380px;top:1019px;width:23px;height:27px;background:#d4d4d4"></div><div class="a" style="left:403px;top:1019px;width:64px;height:27px;background:#f0f0f0"></div><svg class="a" style="left:430px;top:1026px;" width="13" height="13" viewBox="0 0 13 13"><rect x="0.5" y="0.5" width="12" height="12" fill="#fbfbfb" stroke="#c6c6c6" stroke-width="1"/><rect x="1.5" y="1.5" width="10" height="10" fill="none" stroke="#f0f0f0" stroke-width="1"/></svg><div class="a" style="left:467px;top:1019px;width:256px;height:27px;background:#fff;overflow:hidden"><div class="t" style="left:3px;top:1px;height:27px;line-height:27px;color:#000;font-size:13px;">from Alex</div></div><div class="a" style="left:723px;top:1019px;width:77px;height:27px;background:#fff"></div><div class="t" style="left:723px;top:1020px;width:74px;height:27px;line-height:27px;color:#000;font-size:13px;text-align:right;">2</div><div class="a" style="left:800px;top:1019px;width:104px;height:27px;background:#fff"></div><svg class="a" style="left:804px;top:1024px;" width="17" height="17" viewBox="0 0 17 17"><path d="M0 3.5 H2 M0 5.5 H2 M0 7.5 H2" stroke="#2f7cc0" stroke-width="1"/><path d="M2.5 10 V1.5 H13.5 V5" fill="none" stroke="#555" stroke-width="1"/><path d="M2.5 9.5 H4" stroke="#555" stroke-width="1"/><rect x="10" y="3" width="2" height="2" fill="#d03020"/><path d="M4 4.5 H8" stroke="#999" stroke-width="1"/><path d="M15 5.8 L7.2 6.8 L5.6 10.6 L9.6 10.2 L4.6 15 L14.4 8.4 L10.4 8.6 Z" fill="#e8a838" stroke="#e8a838" stroke-width="0.9" stroke-linejoin="round"/></svg><div class="t" style="left:821px;top:1020px;height:27px;line-height:27px;color:#000;font-size:13px;">Action</div><div class="a" style="left:904px;top:1019px;width:176px;height:27px;background:#fff"></div><div class="t" style="left:907px;top:1020px;height:27px;line-height:27px;color:#000;font-size:13px;">Move To Folder</div><div class="a" style="left:1080px;top:1019px;width:256px;height:27px;background:#fff;overflow:hidden"><div class="t" style="left:3px;top:1px;height:27px;line-height:27px;color:#000;font-size:13px;">Alex</div></div><div class="a" style="left:1336px;top:1019px;width:132px;height:27px;background:#f0f0f0"></div><svg class="a" style="left:1389px;top:1024px;" width="16" height="17" viewBox="0 0 16 17"><path d="M3 10.5 V1.5 H14.5 V9" fill="none" stroke="#606060" stroke-width="1"/><rect x="10.5" y="3" width="2" height="2" fill="#d03020"/><path d="M5 4.5 H8.5 M5 6.5 H7" stroke="#999" stroke-width="1"/><path d="M0 3.5 H2.5 M0 5.5 H2.5 M0 7.5 H2.5" stroke="#2f7cc0" stroke-width="1"/><circle cx="9.3" cy="10.5" r="5" fill="#1a9a5a" stroke="#fff" stroke-width="1"/><path d="M6.8 10.6 L8.8 12.6 L12 8.8" stroke="#fff" stroke-width="1.5" fill="none"/></svg><svg class="a" style="left:1406px;top:1026px;" width="13" height="13" viewBox="0 0 13 13"><rect x="0.5" y="0.5" width="12" height="12" fill="#fbfbfb" stroke="#c6c6c6" stroke-width="1"/><rect x="1.5" y="1.5" width="10" height="10" fill="none" stroke="#f0f0f0" stroke-width="1"/><path d="M3.2 6.8 L5.6 10 L9.6 3" stroke="#a6a6a6" stroke-width="1.6" fill="none"/></svg><div class="a" style="left:1468px;top:1019px;width:185px;height:27px;background:#f0f0f0"></div><svg class="a" style="left:1556px;top:1026px;" width="13" height="13" viewBox="0 0 13 13"><rect x="0.5" y="0.5" width="12" height="12" fill="#fbfbfb" stroke="#c6c6c6" stroke-width="1"/><rect x="1.5" y="1.5" width="10" height="10" fill="none" stroke="#f0f0f0" stroke-width="1"/></svg><div class="a" style="left:83px;top:1046px;width:75px;height:1px;background:#fff"></div><div class="a" style="left:158px;top:1046px;width:1495px;height:1px;background:#f3f3f3"></div><div class="a" style="left:403px;top:207px;width:1px;height:830px;background:#ffffff;opacity:0.65"></div><div class="a" style="left:467px;top:207px;width:1px;height:830px;background:#ffffff;opacity:0.65"></div><div class="a" style="left:723px;top:207px;width:1px;height:830px;background:#ffffff;opacity:0.65"></div><div class="a" style="left:800px;top:207px;width:1px;height:830px;background:#ffffff;opacity:0.65"></div><div class="a" style="left:904px;top:207px;width:1px;height:830px;background:#ffffff;opacity:0.65"></div><div class="a" style="left:1080px;top:207px;width:1px;height:830px;background:#ffffff;opacity:0.65"></div><div class="a" style="left:1336px;top:207px;width:1px;height:830px;background:#ffffff;opacity:0.65"></div><div class="a" style="left:1468px;top:207px;width:1px;height:830px;background:#ffffff;opacity:0.65"></div><div class="a" style="left:203px;top:207px;width:1px;height:830px;background:#34495e"></div><div class="a" style="left:204px;top:207px;width:1px;height:830px;background:#0a78d8"></div><div class="a" style="left:378px;top:207px;width:1px;height:830px;background:#0a78d8"></div></div>
<div class="a" style="left:2px;top:1037px;width:1916px;height:20px;background:#f7f7f7"></div>
<div class="t" style="left:7px;top:1038px;height:19px;line-height:19px;color:#111;font-size:13px;">Rows Loaded: 526 | Rows Displayed: 39 | Rows Hidden: 487 | Rows Selected: 3 | Hierarchy view with 22 top row(s) [11 hidden]</div>
<div class="a" style="left:2px;top:1057px;width:1916px;height:20px;background:#7a50c2"></div>
<div class="t" style="left:5px;top:1058px;height:20px;line-height:20px;color:#fff;font-size:11.8px;">Delete selected entries from the server.</div>
<div class="t" style="left:1814px;top:1058px;height:20px;line-height:20px;color:#a894d8;font-size:11.8px;">CAP</div>
<div class="t" style="left:1847px;top:1058px;height:20px;line-height:20px;color:#fff;font-size:11.8px;">NUM</div>
<div class="t" style="left:1885px;top:1058px;height:20px;line-height:20px;color:#a894d8;font-size:11.8px;">SCRL</div>
<div class="a" style="left:0px;top:1077px;width:1920px;height:1px;background:#f4f4f4"></div>
<div class="a" style="left:0px;top:1078px;width:1920px;height:2px;background:#3b3848"></div>
<div class="a" style="left:48px;top:1078px;width:288px;height:2px;background:#eaeaea"></div>
<div class="a" style="left:584px;top:1078px;width:44px;height:2px;background:#6e6a78"></div>
<div class="a" style="left:569px;top:40px;width:67px;height:109px;border:3.5px solid #fa1ea0;box-sizing:border-box;box-shadow:2px 3px 4px rgba(0,0,0,0.35), inset 2px 2px 3px rgba(0,0,0,0.25)"></div>
<div class="a" style="left:580px;top:151px;width:226px;height:48px;background:#fff;border:1px solid #c8c8c8;box-sizing:border-box;box-shadow:2px 2px 4px rgba(0,0,0,0.3)"></div>
<div class="t" style="left:591px;top:156px;height:17px;line-height:17px;color:#444;font-weight:bold;font-size:12px;">Delete Entries</div>
<div class="t" style="left:591px;top:177px;height:17px;line-height:17px;color:#444;font-size:11.6px;">Delete selected entries from the server.</div>
<svg class="a" style="left:0;top:0" width="1920" height="1080" viewBox="0 0 1920 1080"><defs><filter id="sh" x="-10%" y="-10%" width="120%" height="120%"><feGaussianBlur in="SourceAlpha" stdDeviation="2"/><feOffset dx="2" dy="3"/><feComponentTransfer><feFuncA type="linear" slope="0.45"/></feComponentTransfer><feMerge><feMergeNode/><feMergeNode in="SourceGraphic"/></feMerge></filter></defs><g filter="url(#sh)"><line x1="545" y1="138" x2="239.6" y2="273.5" stroke="#fa1ea0" stroke-width="4.8" stroke-linecap="round"/><path d="M225 280 L236.8 267.1 L242.5 279.9Z" fill="#fa1ea0"/><line x1="561" y1="164" x2="237.3" y2="486.7" stroke="#fa1ea0" stroke-width="4.8" stroke-linecap="round"/><path d="M226 498 L232.4 481.7 L242.3 491.7Z" fill="#fa1ea0"/><line x1="589" y1="164" x2="224.4" y2="758.4" stroke="#fa1ea0" stroke-width="4.8" stroke-linecap="round"/><path d="M216 772 L218.4 754.7 L230.3 762.0Z" fill="#fa1ea0"/></g></svg>
</body></html>
